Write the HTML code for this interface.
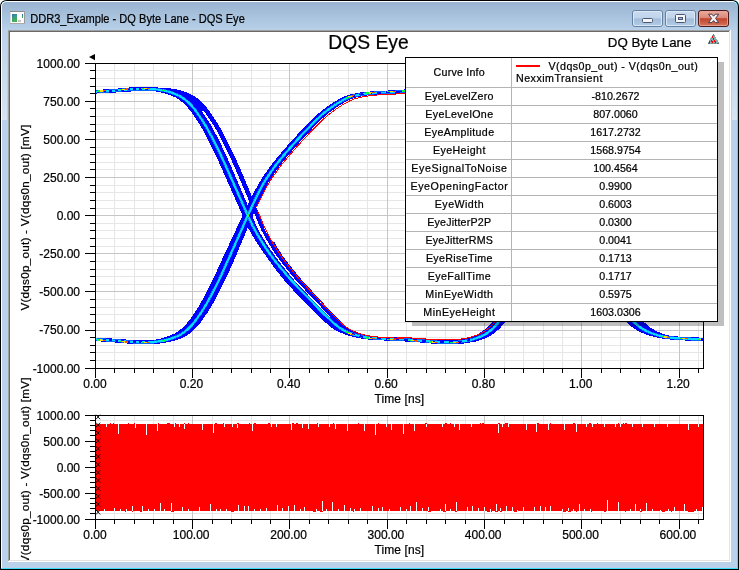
<!DOCTYPE html>
<html><head><meta charset="utf-8"><title>DDR3_Example - DQ Byte Lane - DQS Eye</title>
<style>
html,body{margin:0;padding:0;background:#fff;}
body{width:739px;height:570px;overflow:hidden;}
svg{display:block;will-change:transform;opacity:0.9999;}
text{font-family:'Liberation Sans', Arial, sans-serif;fill:#000;stroke:#000;stroke-width:0.22px;}
.t12{font-size:12px;}
.tb{font-size:10.67px;}
</style></head><body>
<svg width="739" height="570" viewBox="0 0 739 570">
<defs>
<linearGradient id="gTitle" x1="0" y1="0" x2="0" y2="1"><stop offset="0" stop-color="#99b4d1"/><stop offset="1" stop-color="#b9d1ea"/></linearGradient>
<linearGradient id="gSide" x1="0" y1="0" x2="0" y2="1"><stop offset="0" stop-color="#bbd2ea"/><stop offset="1" stop-color="#d6e4f3"/></linearGradient>
<linearGradient id="gBtnT" x1="0" y1="0" x2="0" y2="1"><stop offset="0" stop-color="#c8daee"/><stop offset="1" stop-color="#bfd4ea"/></linearGradient>
<linearGradient id="gBtnB" x1="0" y1="0" x2="0" y2="1"><stop offset="0" stop-color="#a1bbd9"/><stop offset="1" stop-color="#b1cae4"/></linearGradient>
<linearGradient id="gClsT" x1="0" y1="0" x2="0" y2="1"><stop offset="0" stop-color="#e9a99c"/><stop offset="1" stop-color="#d98474"/></linearGradient>
<linearGradient id="gClsB" x1="0" y1="0" x2="0" y2="1"><stop offset="0" stop-color="#c1432a"/><stop offset="1" stop-color="#d4715a"/></linearGradient>
<linearGradient id="gIcon" x1="0" y1="0" x2="0.4" y2="1"><stop offset="0" stop-color="#2f6db5"/><stop offset="0.45" stop-color="#3a9a8c"/><stop offset="1" stop-color="#45b34c"/></linearGradient>
<linearGradient id="gIcon2" x1="0" y1="0" x2="0" y2="1"><stop offset="0" stop-color="#2c5fb0"/><stop offset="1" stop-color="#4bb848"/></linearGradient>
<clipPath id="clipTop"><rect x="96" y="64" width="607" height="304"/></clipPath>
<clipPath id="clipContent"><rect x="10" y="32" width="719" height="528"/></clipPath>
<clipPath id="clipRed"><rect x="253" y="64" width="260" height="304"/></clipPath>
</defs>

<path d="M0,570 L0,7 Q0,0 7,0 L732,0 Q739,0 739,7 L739,570 Z" fill="#000"/>
<path d="M1,569 L1,7 Q1,1 7,1 L732,1 Q738,1 738,7 L738,569 Z" fill="#3fdcfa"/>
<path d="M1,568 L1,7 Q1,1 7,1 L732,1 Q737,1 737,7 L737,568 Z" fill="#ffffff"/>
<path d="M2,568 L2,7 Q2,2 7,2 L732,2 Q737,2 737,7 L737,568 Z" fill="#b9d1ea"/>
<path d="M2,31 L2,7 Q2,2 7,2 L732,2 Q737,2 737,7 L737,31 Z" fill="url(#gTitle)"/>
<rect x="2" y="30" width="5" height="90" fill="url(#gSide)"/>
<rect x="732" y="30" width="5" height="90" fill="url(#gSide)"/>
<g shape-rendering="crispEdges">
<rect x="8" y="30" width="723" height="532" fill="#ffffff"/>
<rect x="8" y="30" width="722" height="1" fill="#a0a0a0"/>
<rect x="8" y="30" width="1" height="531" fill="#a0a0a0"/>
<rect x="9" y="31" width="720" height="1" fill="#696969"/>
<rect x="9" y="31" width="1" height="529" fill="#696969"/>
<rect x="9" y="560" width="721" height="1" fill="#e3e3e3"/>
<rect x="729" y="31" width="1" height="530" fill="#e3e3e3"/>
</g>
<g shape-rendering="crispEdges">
<rect x="10" y="11" width="15" height="13" fill="#fdfdfd"/>
<rect x="10" y="11" width="15" height="1" fill="#8a8a8a"/>
<rect x="24" y="11" width="1" height="13" fill="#9a9a9a"/>
<rect x="10" y="23" width="15" height="1" fill="#a8a8a8"/>
<rect x="10" y="12" width="1" height="11" fill="#d8dde6"/>
<rect x="11.5" y="14" width="5.5" height="8" fill="url(#gIcon)"/>
<rect x="18" y="20" width="3" height="2" fill="#c4c4c4"/>
<rect x="22" y="14" width="1" height="4" fill="url(#gIcon2)"/>
</g>
<text x="30.2" y="23" font-size="12.5px" textLength="214.6" lengthAdjust="spacingAndGlyphs" fill="#000">DDR3_Example - DQ Byte Lane - DQS Eye</text>
<rect x="632.5" y="10.5" width="30" height="16" rx="2.5" ry="2.5" fill="#b4cce6" stroke="#6480a4" stroke-width="1"/>
<rect x="633.5" y="11.5" width="28" height="7" rx="1.5" fill="url(#gBtnT)"/>
<rect x="633.5" y="18.5" width="28" height="7" rx="1.5" fill="url(#gBtnB)"/>
<rect x="633.5" y="11.5" width="28" height="14" rx="1.5" fill="none" stroke="#e4eef8" stroke-opacity="0.8" stroke-width="1"/>
<rect x="665.5" y="10.5" width="30" height="16" rx="2.5" ry="2.5" fill="#b4cce6" stroke="#6480a4" stroke-width="1"/>
<rect x="666.5" y="11.5" width="28" height="7" rx="1.5" fill="url(#gBtnT)"/>
<rect x="666.5" y="18.5" width="28" height="7" rx="1.5" fill="url(#gBtnB)"/>
<rect x="666.5" y="11.5" width="28" height="14" rx="1.5" fill="none" stroke="#e4eef8" stroke-opacity="0.8" stroke-width="1"/>
<rect x="698.5" y="10.5" width="30" height="16" rx="2.5" ry="2.5" fill="#c4452c" stroke="#4a1d1d" stroke-width="1"/>
<rect x="699.5" y="11.5" width="28" height="7" rx="1.5" fill="url(#gClsT)"/>
<rect x="699.5" y="18.5" width="28" height="7" rx="1.5" fill="url(#gClsB)"/>
<rect x="699.5" y="11.5" width="28" height="14" rx="1.5" fill="none" stroke="#f0b8ae" stroke-opacity="0.7" stroke-width="1"/>
<rect x="642.5" y="18.5" width="10" height="4" rx="1" fill="#f4f6f9" stroke="#4a5670" stroke-width="1"/>
<rect x="675.5" y="14.5" width="10" height="8" rx="1" fill="#f4f6f9" stroke="#4a5670" stroke-width="1"/>
<rect x="678.5" y="17.5" width="4" height="2" fill="#9fbadb" stroke="#4a5670" stroke-width="1"/>
<path d="M708.5,14.2 L711.9,14.2 L713.6,16.2 L715.3,14.2 L718.7,14.2 L715.6,18.4 L718.7,22.6 L715.3,22.6 L713.6,20.6 L711.9,22.6 L708.5,22.6 L711.6,18.4 Z" fill="#f3f1f2" stroke="#4d3a48" stroke-width="1" stroke-linejoin="round"/>
<g clip-path="url(#clipContent)">
<text x="368.5" y="48.9" font-size="19.3px" text-anchor="middle">DQS Eye</text>
<text x="649.6" y="46.8" font-size="13.3px" text-anchor="middle">DQ Byte Lane</text>
<g shape-rendering="crispEdges">
<path d="M713,34 L714,34 L719,43 L719,44 L708,44 L708,43 Z" fill="#8aabad"/>
<rect x="713" y="34" width="1" height="2" fill="#777"/>
<rect x="708" y="43" width="2" height="1" fill="#666"/><rect x="717" y="43" width="2" height="1" fill="#666"/>
<rect x="711" y="43" width="2" height="1" fill="#7a8a8a"/><rect x="714" y="43" width="2" height="1" fill="#7a8a8a"/>
<rect x="712" y="36" width="1" height="2" fill="#ff0000"/>
<rect x="713" y="38" width="1" height="2" fill="#ff0000"/>
<rect x="711" y="40" width="1" height="2" fill="#ff0000"/>
<rect x="714" y="40" width="1" height="2" fill="#ff0000"/>
<rect x="709" y="41" width="1" height="2" fill="#ff0000"/>
<rect x="712" y="41" width="1" height="2" fill="#ff0000"/>
<rect x="715" y="41" width="1" height="2" fill="#ff0000"/>
</g>
<g shape-rendering="crispEdges" fill="none">
<path d="M114.5,64V368M134.5,64V368M153.5,64V368M173.5,64V368M212.5,64V368M231.5,64V368M251.5,64V368M270.5,64V368M309.5,64V368M328.5,64V368M348.5,64V368M367.5,64V368M406.5,64V368M426.5,64V368M445.5,64V368M465.5,64V368M504.5,64V368M523.5,64V368M543.5,64V368M562.5,64V368M601.5,64V368M620.5,64V368M640.5,64V368M659.5,64V368M698.5,64V368M96,70.5H703M96,78.5H703M96,86.5H703M96,93.5H703M96,108.5H703M96,116.5H703M96,124.5H703M96,131.5H703M96,147.5H703M96,154.5H703M96,162.5H703M96,169.5H703M96,185.5H703M96,192.5H703M96,200.5H703M96,208.5H703M96,223.5H703M96,230.5H703M96,238.5H703M96,246.5H703M96,261.5H703M96,269.5H703M96,276.5H703M96,284.5H703M96,299.5H703M96,307.5H703M96,314.5H703M96,322.5H703M96,337.5H703M96,345.5H703M96,352.5H703M96,360.5H703" stroke="#e6e6e6" stroke-width="1"/>
<path d="M192.5,64V368M289.5,64V368M387.5,64V368M484.5,64V368M581.5,64V368M679.5,64V368M96,101.5H703M96,139.5H703M96,177.5H703M96,215.5H703M96,253.5H703M96,291.5H703M96,330.5H703" stroke="#c6c6c6" stroke-width="1"/>
</g>
<g clip-path="url(#clipTop)" fill="none" stroke-linejoin="round" stroke-linecap="butt" shape-rendering="crispEdges">
<path d="M93.3,91.9 L94.3,91.8 L95.3,91.7 L96.2,91.7 L97.2,91.6 L98.2,91.5 L99.2,91.5 L100.1,91.4 L101.1,91.3 L102.1,91.3 L103.1,91.2 L104.0,91.1 L105.0,91.1 L106.0,91.0 L107.0,91.0 L107.9,90.9 L108.9,90.8 L109.9,90.8 L110.9,90.7 L111.8,90.6 L112.8,90.6 L113.8,90.5 L114.8,90.4 L115.7,90.4 L116.7,90.3 L117.7,90.2 L118.7,90.1 L119.6,90.0 L120.6,89.9 L121.6,89.8 L122.6,89.8 L123.5,89.7 L124.5,89.6 L125.5,89.5 L126.5,89.4 L127.4,89.3 L128.4,89.2 L129.4,89.2 L130.4,89.1 L131.3,89.1 L132.3,89.0 L133.3,89.0 L134.3,89.0 L135.2,89.0 L136.2,89.0 L137.2,89.0 L138.2,89.0 L139.1,89.0 L140.1,89.0 L141.1,89.0 L142.1,89.0 L143.0,89.0 L144.0,89.0 L145.0,89.0 L146.0,89.0 L146.9,89.0 L147.9,89.0 L148.9,89.0 L149.9,89.1 L150.8,89.1 L151.8,89.2 L152.8,89.3 L153.8,89.5 L154.7,89.6 L155.7,89.8 L156.7,89.9 L157.7,90.1 L158.6,90.3 L159.6,90.5 L160.6,90.6 L161.6,90.8 L162.5,91.0 L163.5,91.3 L164.5,91.5 L165.5,91.8 L166.5,92.1 L167.5,92.4 L168.5,92.8 L169.5,93.1 L170.5,93.5 L171.5,93.9 L172.5,94.3 L173.5,94.7 L174.5,95.2 L175.5,95.6 L176.5,96.1 L177.5,96.7 L178.5,97.3 L179.5,98.0 L180.5,98.7 L181.5,99.4 L182.5,100.2 L183.5,101.0 L184.5,101.9 L185.5,102.8 L186.5,103.8 L187.5,104.9 L188.5,105.9 L189.5,107.1 L190.5,108.3 L191.5,109.6 L192.5,110.9 L193.5,112.3 L194.5,113.8 L195.5,115.2 L196.5,116.7 L197.5,118.1 L198.5,119.6 L199.5,121.2 L200.5,122.8 L201.5,124.4 L202.5,126.0 L203.5,127.8 L204.5,129.5 L205.5,131.4 L206.5,133.2 L207.5,135.1 L208.5,137.0 L209.5,139.0 L210.5,140.9 L211.5,142.8 L212.5,144.8 L213.5,146.8 L214.5,148.8 L215.5,150.8 L216.5,152.9 L217.5,155.0 L218.5,157.2 L219.5,159.4 L220.5,161.7 L221.5,163.9 L222.5,166.1 L223.5,168.3 L224.5,170.5 L225.4,172.8 L226.4,175.0 L227.4,177.2 L228.4,179.5 L229.4,181.7 L230.4,184.0 L231.4,186.2 L232.4,188.5 L233.4,190.7 L234.4,193.0 L235.4,195.2 L236.4,197.5 L237.4,199.7 L238.4,202.0 L239.4,204.2 L240.4,206.5 L241.4,208.8 L242.4,211.1 L243.4,213.3 L244.4,215.6 L245.4,217.7 L246.3,219.9 L247.3,222.0 L248.2,224.1 L249.2,226.1 L250.1,228.0 L251.1,229.8 L252.1,231.6 L253.1,233.4 L254.2,235.2 L255.2,236.9 L256.2,238.6 L257.2,240.2 L258.2,241.8 L259.2,243.4 L260.3,245.0 L261.3,246.5 L262.3,248.1 L263.3,249.5 L264.3,251.0 L265.3,252.4 L266.4,253.8 L267.4,255.2 L268.4,256.6 L269.3,257.9 L270.2,259.2 L271.2,260.5 L272.1,261.8 L273.0,263.1 L273.9,264.4 L274.9,265.6 L275.8,266.8 L276.7,268.0 L277.6,269.2 L278.6,270.4 L279.5,271.6 L280.4,272.7 L281.3,273.9 L282.3,275.1 L283.2,276.3 L284.1,277.5 L285.0,278.6 L286.0,279.7 L286.9,280.8 L287.8,281.9 L288.8,282.9 L289.7,283.9 L290.7,285.0 L291.6,286.0 L292.6,287.1 L293.5,288.1 L294.5,289.1 L295.4,290.2 L296.4,291.2 L297.3,292.3 L298.3,293.3 L299.2,294.4 L300.2,295.4 L301.1,296.4 L302.1,297.5 L303.1,298.5 L304.1,299.5 L305.2,300.5 L306.2,301.5 L307.2,302.5 L308.2,303.5 L309.3,304.6 L310.3,305.6 L311.3,306.6 L312.3,307.7 L313.4,308.7 L314.4,309.7 L315.4,310.7 L316.4,311.7 L317.4,312.7 L318.5,313.7 L319.5,314.7 L320.5,315.6 L321.5,316.6 L322.6,317.6 L323.6,318.5 L324.6,319.4 L325.6,320.4 L326.7,321.3 L327.7,322.2 L328.7,323.1 L329.7,323.9 L330.8,324.8 L331.8,325.6 L332.8,326.4 L333.9,327.2 L335.0,327.9 L336.1,328.6 L337.2,329.1 L338.3,329.7 L339.4,330.2 L340.5,330.8 L341.6,331.3 L342.7,331.7 L343.8,332.2 L344.9,332.6 L346.0,333.0 L347.1,333.4 L348.2,333.7 L349.3,334.1 L350.4,334.4 L351.5,334.7 L352.6,335.0 L353.7,335.3 L354.8,335.6 L355.9,335.8 L357.0,336.0 L358.1,336.3 L359.2,336.5 L360.3,336.7 L361.3,336.9 L362.4,337.1 L363.4,337.2 L364.4,337.4 L365.4,337.5 L366.5,337.6 L367.5,337.7 L368.5,337.8 L369.5,337.9 L370.6,338.0 L371.6,338.0 L372.6,338.1 L373.7,338.2 L374.7,338.3 L375.7,338.3 L376.7,338.4 L377.8,338.5 L378.8,338.5 L379.8,338.6 L380.8,338.6 L381.9,338.7 L382.9,338.7 L383.9,338.8 L384.9,338.8 L386.0,338.9 L387.0,338.9 L388.0,339.0 L389.1,339.0 L390.1,339.0 L391.1,339.1 L392.1,339.1 L393.2,339.1 L394.2,339.2 L395.2,339.2 L396.2,339.2 L397.3,339.2 L398.3,339.2" stroke="#0000ff" stroke-width="3.4"/>
<path d="M93.8,91.9 L94.8,91.8 L95.8,91.7 L96.8,91.7 L97.7,91.6 L98.7,91.5 L99.7,91.5 L100.7,91.4 L101.7,91.3 L102.7,91.3 L103.6,91.2 L104.6,91.1 L105.6,91.1 L106.6,91.0 L107.6,91.0 L108.6,90.9 L109.6,90.8 L110.5,90.8 L111.5,90.7 L112.5,90.6 L113.5,90.6 L114.5,90.5 L115.5,90.4 L116.4,90.4 L117.4,90.3 L118.4,90.2 L119.4,90.1 L120.4,90.0 L121.4,89.9 L122.3,89.8 L123.3,89.8 L124.3,89.7 L125.3,89.6 L126.3,89.5 L127.3,89.4 L128.3,89.3 L129.2,89.2 L130.2,89.2 L131.2,89.1 L132.2,89.1 L133.2,89.0 L134.2,89.0 L135.1,89.0 L136.1,89.0 L137.1,89.0 L138.1,89.0 L139.1,89.0 L140.1,89.0 L141.1,89.0 L142.0,89.0 L143.0,89.0 L144.0,89.0 L145.0,89.0 L146.0,89.0 L147.0,89.0 L147.9,89.0 L148.9,89.0 L149.9,89.0 L150.9,89.1 L151.9,89.1 L152.9,89.2 L153.9,89.3 L154.8,89.5 L155.8,89.6 L156.8,89.8 L157.8,89.9 L158.8,90.1 L159.8,90.3 L160.7,90.5 L161.7,90.6 L162.7,90.8 L163.7,91.0 L164.7,91.3 L165.7,91.5 L166.7,91.8 L167.7,92.1 L168.7,92.4 L169.7,92.8 L170.7,93.1 L171.7,93.5 L172.7,93.9 L173.7,94.3 L174.7,94.7 L175.7,95.2 L176.7,95.6 L177.7,96.1 L178.7,96.7 L179.7,97.3 L180.7,98.0 L181.7,98.7 L182.7,99.4 L183.7,100.2 L184.7,101.0 L185.7,101.9 L186.7,102.8 L187.7,103.8 L188.7,104.9 L189.7,105.9 L190.7,107.1 L191.7,108.3 L192.7,109.6 L193.7,110.9 L194.7,112.3 L195.7,113.8 L196.7,115.2 L197.7,116.7 L198.7,118.1 L199.7,119.6 L200.7,121.2 L201.7,122.8 L202.7,124.4 L203.7,126.0 L204.7,127.8 L205.7,129.5 L206.7,131.4 L207.7,133.2 L208.6,135.1 L209.6,137.0 L210.6,139.0 L211.6,140.9 L212.6,142.8 L213.6,144.8 L214.6,146.8 L215.6,148.8 L216.6,150.8 L217.6,152.9 L218.6,155.0 L219.6,157.2 L220.6,159.4 L221.6,161.7 L222.6,163.9 L223.5,166.1 L224.5,168.3 L225.5,170.5 L226.5,172.8 L227.5,175.0 L228.5,177.2 L229.5,179.5 L230.5,181.7 L231.5,184.0 L232.5,186.2 L233.5,188.5 L234.5,190.7 L235.5,193.0 L236.5,195.2 L237.5,197.5 L238.4,199.7 L239.4,202.0 L240.4,204.2 L241.4,206.5 L242.4,208.8 L243.4,211.1 L244.4,213.3 L245.4,215.6 L246.3,217.7 L247.3,219.9 L248.2,222.0 L249.2,224.1 L250.1,226.1 L251.0,228.0 L252.0,229.8 L253.0,231.6 L254.0,233.4 L255.0,235.2 L256.0,236.9 L257.1,238.6 L258.1,240.2 L259.1,241.8 L260.1,243.4 L261.1,245.0 L262.1,246.5 L263.1,248.1 L264.2,249.5 L265.2,251.0 L266.2,252.4 L267.2,253.8 L268.2,255.2 L269.2,256.6 L270.2,257.9 L271.1,259.2 L272.0,260.5 L272.9,261.8 L273.9,263.1 L274.8,264.4 L275.7,265.6 L276.7,266.8 L277.6,268.0 L278.5,269.2 L279.4,270.4 L280.4,271.6 L281.3,272.7 L282.2,273.9 L283.2,275.1 L284.1,276.3 L285.0,277.5 L285.9,278.6 L286.9,279.7 L287.8,280.8 L288.7,281.9 L289.7,282.9 L290.6,283.9 L291.6,285.0 L292.6,286.0 L293.5,287.1 L294.5,288.1 L295.4,289.1 L296.4,290.2 L297.3,291.2 L298.3,292.3 L299.3,293.3 L300.2,294.4 L301.2,295.4 L302.1,296.4 L303.1,297.5 L304.1,298.5 L305.1,299.5 L306.1,300.5 L307.2,301.5 L308.2,302.5 L309.2,303.5 L310.2,304.6 L311.2,305.6 L312.3,306.6 L313.3,307.7 L314.3,308.7 L315.3,309.7 L316.4,310.7 L317.4,311.7 L318.4,312.7 L319.4,313.7 L320.4,314.7 L321.5,315.6 L322.5,316.6 L323.5,317.6 L324.5,318.5 L325.5,319.4 L326.6,320.4 L327.6,321.3 L328.6,322.2 L329.6,323.1 L330.6,323.9 L331.7,324.8 L332.7,325.6 L333.7,326.4 L334.8,327.2 L335.9,327.9 L337.0,328.6 L338.0,329.1 L339.1,329.7 L340.2,330.2 L341.3,330.8 L342.4,331.3 L343.5,331.7 L344.6,332.2 L345.7,332.6 L346.7,333.0 L347.8,333.4 L348.9,333.7 L350.0,334.1 L351.1,334.4 L352.2,334.7 L353.3,335.0 L354.4,335.3 L355.4,335.6 L356.5,335.8 L357.6,336.0 L358.7,336.3 L359.8,336.5 L360.9,336.7 L361.9,336.9 L362.9,337.1 L364.0,337.2 L365.0,337.4 L366.0,337.5 L367.0,337.6 L368.1,337.7 L369.1,337.8 L370.1,337.9 L371.1,338.0 L372.2,338.0 L373.2,338.1 L374.2,338.2 L375.2,338.3 L376.3,338.3 L377.3,338.4 L378.3,338.5 L379.3,338.5 L380.4,338.6 L381.4,338.6 L382.4,338.7 L383.4,338.7 L384.5,338.8 L385.5,338.8 L386.5,338.9 L387.5,338.9 L388.6,339.0 L389.6,339.0 L390.6,339.0 L391.6,339.1 L392.7,339.1 L393.7,339.1 L394.7,339.2 L395.7,339.2 L396.8,339.2 L397.8,339.2 L398.8,339.2" stroke="#0000ff" stroke-width="3.4"/>
<path d="M94.3,91.9 L95.3,91.8 L96.3,91.7 L97.3,91.7 L98.3,91.6 L99.3,91.5 L100.3,91.5 L101.3,91.4 L102.2,91.3 L103.2,91.3 L104.2,91.2 L105.2,91.1 L106.2,91.1 L107.2,91.0 L108.2,91.0 L109.2,90.9 L110.2,90.8 L111.2,90.8 L112.2,90.7 L113.2,90.6 L114.2,90.6 L115.2,90.5 L116.2,90.4 L117.2,90.4 L118.1,90.3 L119.1,90.2 L120.1,90.1 L121.1,90.0 L122.1,89.9 L123.1,89.8 L124.1,89.8 L125.1,89.7 L126.1,89.6 L127.1,89.5 L128.1,89.4 L129.1,89.3 L130.1,89.2 L131.1,89.2 L132.1,89.1 L133.1,89.1 L134.0,89.0 L135.0,89.0 L136.0,89.0 L137.0,89.0 L138.0,89.0 L139.0,89.0 L140.0,89.0 L141.0,89.0 L142.0,89.0 L143.0,89.0 L144.0,89.0 L145.0,89.0 L146.0,89.0 L147.0,89.0 L148.0,89.0 L148.9,89.0 L149.9,89.0 L150.9,89.0 L151.9,89.1 L152.9,89.1 L153.9,89.2 L154.9,89.3 L155.9,89.5 L156.9,89.6 L157.9,89.8 L158.9,89.9 L159.9,90.1 L160.9,90.3 L161.9,90.5 L162.9,90.6 L163.9,90.8 L164.8,91.0 L165.8,91.3 L166.8,91.5 L167.8,91.8 L168.8,92.1 L169.8,92.4 L170.8,92.8 L171.8,93.1 L172.8,93.5 L173.8,93.9 L174.8,94.3 L175.8,94.7 L176.8,95.2 L177.8,95.6 L178.8,96.1 L179.8,96.7 L180.8,97.3 L181.8,98.0 L182.8,98.7 L183.8,99.4 L184.8,100.2 L185.8,101.0 L186.8,101.9 L187.8,102.8 L188.8,103.8 L189.8,104.9 L190.8,105.9 L191.8,107.1 L192.8,108.3 L193.8,109.6 L194.8,110.9 L195.8,112.3 L196.8,113.8 L197.8,115.2 L198.8,116.7 L199.8,118.1 L200.8,119.6 L201.8,121.2 L202.8,122.8 L203.8,124.4 L204.8,126.0 L205.8,127.8 L206.8,129.5 L207.8,131.4 L208.8,133.2 L209.8,135.1 L210.8,137.0 L211.8,139.0 L212.8,140.9 L213.8,142.8 L214.7,144.8 L215.7,146.8 L216.7,148.8 L217.7,150.8 L218.7,152.9 L219.7,155.0 L220.7,157.2 L221.7,159.4 L222.7,161.7 L223.6,163.9 L224.6,166.1 L225.6,168.3 L226.6,170.5 L227.6,172.8 L228.6,175.0 L229.6,177.2 L230.6,179.5 L231.6,181.7 L232.6,184.0 L233.5,186.2 L234.5,188.5 L235.5,190.7 L236.5,193.0 L237.5,195.2 L238.5,197.5 L239.5,199.7 L240.5,202.0 L241.5,204.2 L242.4,206.5 L243.4,208.8 L244.4,211.1 L245.4,213.3 L246.4,215.6 L247.3,217.7 L248.2,219.9 L249.2,222.0 L250.1,224.1 L251.0,226.1 L251.9,228.0 L252.9,229.8 L253.9,231.6 L254.9,233.4 L255.9,235.2 L256.9,236.9 L257.9,238.6 L258.9,240.2 L259.9,241.8 L261.0,243.4 L262.0,245.0 L263.0,246.5 L264.0,248.1 L265.0,249.5 L266.0,251.0 L267.0,252.4 L268.0,253.8 L269.1,255.2 L270.1,256.6 L271.0,257.9 L271.9,259.2 L272.9,260.5 L273.8,261.8 L274.7,263.1 L275.7,264.4 L276.6,265.6 L277.5,266.8 L278.5,268.0 L279.4,269.2 L280.3,270.4 L281.3,271.6 L282.2,272.7 L283.1,273.9 L284.1,275.1 L285.0,276.3 L285.9,277.5 L286.9,278.6 L287.8,279.7 L288.7,280.8 L289.7,281.9 L290.6,282.9 L291.6,283.9 L292.5,285.0 L293.5,286.0 L294.5,287.1 L295.4,288.1 L296.4,289.1 L297.3,290.2 L298.3,291.2 L299.3,292.3 L300.2,293.3 L301.2,294.4 L302.1,295.4 L303.1,296.4 L304.1,297.5 L305.1,298.5 L306.1,299.5 L307.1,300.5 L308.1,301.5 L309.2,302.5 L310.2,303.5 L311.2,304.6 L312.2,305.6 L313.2,306.6 L314.2,307.7 L315.3,308.7 L316.3,309.7 L317.3,310.7 L318.3,311.7 L319.3,312.7 L320.4,313.7 L321.4,314.7 L322.4,315.6 L323.4,316.6 L324.4,317.6 L325.4,318.5 L326.5,319.4 L327.5,320.4 L328.5,321.3 L329.5,322.2 L330.5,323.1 L331.5,323.9 L332.6,324.8 L333.6,325.6 L334.6,326.4 L335.7,327.2 L336.7,327.9 L337.8,328.6 L338.9,329.1 L340.0,329.7 L341.0,330.2 L342.1,330.8 L343.2,331.3 L344.3,331.7 L345.3,332.2 L346.4,332.6 L347.5,333.0 L348.6,333.4 L349.6,333.7 L350.7,334.1 L351.8,334.4 L352.9,334.7 L353.9,335.0 L355.0,335.3 L356.1,335.6 L357.2,335.8 L358.2,336.0 L359.3,336.3 L360.4,336.5 L361.5,336.7 L362.5,336.9 L363.5,337.1 L364.5,337.2 L365.6,337.4 L366.6,337.5 L367.6,337.6 L368.6,337.7 L369.6,337.8 L370.7,337.9 L371.7,338.0 L372.7,338.0 L373.7,338.1 L374.8,338.2 L375.8,338.3 L376.8,338.3 L377.8,338.4 L378.8,338.5 L379.9,338.5 L380.9,338.6 L381.9,338.6 L382.9,338.7 L384.0,338.7 L385.0,338.8 L386.0,338.8 L387.0,338.9 L388.1,338.9 L389.1,339.0 L390.1,339.0 L391.1,339.0 L392.1,339.1 L393.2,339.1 L394.2,339.1 L395.2,339.2 L396.2,339.2 L397.3,339.2 L398.3,339.2 L399.3,339.2" stroke="#0000ff" stroke-width="3.4"/>
<path d="M94.8,91.9 L95.8,91.8 L96.8,91.7 L97.8,91.7 L98.8,91.6 L99.8,91.5 L100.8,91.5 L101.8,91.4 L102.8,91.3 L103.8,91.3 L104.8,91.2 L105.8,91.1 L106.8,91.1 L107.8,91.0 L108.8,91.0 L109.8,90.9 L110.8,90.8 L111.8,90.8 L112.8,90.7 L113.9,90.6 L114.9,90.6 L115.9,90.5 L116.9,90.4 L117.9,90.4 L118.9,90.3 L119.9,90.2 L120.9,90.1 L121.9,90.0 L122.9,89.9 L123.9,89.8 L124.9,89.8 L125.9,89.7 L126.9,89.6 L127.9,89.5 L128.9,89.4 L129.9,89.3 L130.9,89.2 L131.9,89.2 L132.9,89.1 L133.9,89.1 L134.9,89.0 L135.9,89.0 L136.9,89.0 L137.9,89.0 L138.9,89.0 L139.9,89.0 L140.9,89.0 L141.9,89.0 L142.9,89.0 L143.9,89.0 L144.9,89.0 L145.9,89.0 L146.9,89.0 L147.9,89.0 L148.9,89.0 L150.0,89.0 L151.0,89.0 L152.0,89.0 L153.0,89.1 L154.0,89.1 L155.0,89.2 L156.0,89.3 L157.0,89.5 L158.0,89.6 L159.0,89.8 L160.0,89.9 L161.0,90.1 L162.0,90.3 L163.0,90.5 L164.0,90.6 L165.0,90.8 L166.0,91.0 L167.0,91.3 L168.0,91.5 L169.0,91.8 L170.0,92.1 L171.0,92.4 L172.0,92.8 L173.0,93.1 L174.0,93.5 L175.0,93.9 L176.0,94.3 L177.0,94.7 L178.0,95.2 L179.0,95.6 L180.0,96.1 L181.0,96.7 L182.0,97.3 L183.0,98.0 L184.0,98.7 L185.0,99.4 L186.0,100.2 L187.0,101.0 L188.0,101.9 L189.0,102.8 L190.0,103.8 L191.0,104.9 L192.0,105.9 L193.0,107.1 L194.0,108.3 L195.0,109.6 L196.0,110.9 L197.0,112.3 L198.0,113.8 L199.0,115.2 L200.0,116.7 L201.0,118.1 L202.0,119.6 L203.0,121.2 L204.0,122.8 L205.0,124.4 L206.0,126.0 L207.0,127.8 L208.0,129.5 L209.0,131.4 L210.0,133.2 L211.0,135.1 L211.9,137.0 L212.9,139.0 L213.9,140.9 L214.9,142.8 L215.9,144.8 L216.9,146.8 L217.9,148.8 L218.8,150.8 L219.8,152.9 L220.8,155.0 L221.8,157.2 L222.8,159.4 L223.8,161.7 L224.7,163.9 L225.7,166.1 L226.7,168.3 L227.7,170.5 L228.7,172.8 L229.7,175.0 L230.7,177.2 L231.6,179.5 L232.6,181.7 L233.6,184.0 L234.6,186.2 L235.6,188.5 L236.6,190.7 L237.6,193.0 L238.5,195.2 L239.5,197.5 L240.5,199.7 L241.5,202.0 L242.5,204.2 L243.5,206.5 L244.4,208.8 L245.4,211.1 L246.4,213.3 L247.4,215.6 L248.3,217.7 L249.2,219.9 L250.1,222.0 L251.0,224.1 L251.9,226.1 L252.8,228.0 L253.8,229.8 L254.8,231.6 L255.8,233.4 L256.8,235.2 L257.8,236.9 L258.8,238.6 L259.8,240.2 L260.8,241.8 L261.8,243.4 L262.8,245.0 L263.8,246.5 L264.8,248.1 L265.9,249.5 L266.9,251.0 L267.9,252.4 L268.9,253.8 L269.9,255.2 L270.9,256.6 L271.8,257.9 L272.8,259.2 L273.7,260.5 L274.7,261.8 L275.6,263.1 L276.5,264.4 L277.5,265.6 L278.4,266.8 L279.3,268.0 L280.3,269.2 L281.2,270.4 L282.2,271.6 L283.1,272.7 L284.0,273.9 L285.0,275.1 L285.9,276.3 L286.8,277.5 L287.8,278.6 L288.7,279.7 L289.7,280.8 L290.6,281.9 L291.6,282.9 L292.5,283.9 L293.5,285.0 L294.5,286.0 L295.4,287.1 L296.4,288.1 L297.3,289.1 L298.3,290.2 L299.3,291.2 L300.2,292.3 L301.2,293.3 L302.2,294.4 L303.1,295.4 L304.1,296.4 L305.1,297.5 L306.1,298.5 L307.1,299.5 L308.1,300.5 L309.1,301.5 L310.1,302.5 L311.1,303.5 L312.2,304.6 L313.2,305.6 L314.2,306.6 L315.2,307.7 L316.2,308.7 L317.2,309.7 L318.2,310.7 L319.3,311.7 L320.3,312.7 L321.3,313.7 L322.3,314.7 L323.3,315.6 L324.3,316.6 L325.4,317.6 L326.4,318.5 L327.4,319.4 L328.4,320.4 L329.4,321.3 L330.4,322.2 L331.4,323.1 L332.5,323.9 L333.5,324.8 L334.5,325.6 L335.5,326.4 L336.6,327.2 L337.6,327.9 L338.7,328.6 L339.7,329.1 L340.8,329.7 L341.9,330.2 L342.9,330.8 L344.0,331.3 L345.1,331.7 L346.1,332.2 L347.2,332.6 L348.2,333.0 L349.3,333.4 L350.4,333.7 L351.4,334.1 L352.5,334.4 L353.6,334.7 L354.6,335.0 L355.7,335.3 L356.7,335.6 L357.8,335.8 L358.9,336.0 L359.9,336.3 L361.0,336.5 L362.1,336.7 L363.1,336.9 L364.1,337.1 L365.1,337.2 L366.1,337.4 L367.2,337.5 L368.2,337.6 L369.2,337.7 L370.2,337.8 L371.2,337.9 L372.3,338.0 L373.3,338.0 L374.3,338.1 L375.3,338.2 L376.3,338.3 L377.4,338.3 L378.4,338.4 L379.4,338.5 L380.4,338.5 L381.4,338.6 L382.5,338.6 L383.5,338.7 L384.5,338.7 L385.5,338.8 L386.5,338.8 L387.6,338.9 L388.6,338.9 L389.6,339.0 L390.6,339.0 L391.6,339.0 L392.7,339.1 L393.7,339.1 L394.7,339.1 L395.7,339.2 L396.7,339.2 L397.8,339.2 L398.8,339.2 L399.8,339.2" stroke="#0000ff" stroke-width="3.4"/>
<path d="M95.3,91.9 L96.3,91.8 L97.3,91.7 L98.3,91.7 L99.3,91.6 L100.4,91.5 L101.4,91.5 L102.4,91.4 L103.4,91.3 L104.4,91.3 L105.4,91.2 L106.4,91.1 L107.4,91.1 L108.5,91.0 L109.5,91.0 L110.5,90.9 L111.5,90.8 L112.5,90.8 L113.5,90.7 L114.5,90.6 L115.5,90.6 L116.5,90.5 L117.6,90.4 L118.6,90.4 L119.6,90.3 L120.6,90.2 L121.6,90.1 L122.6,90.0 L123.6,89.9 L124.6,89.8 L125.7,89.8 L126.7,89.7 L127.7,89.6 L128.7,89.5 L129.7,89.4 L130.7,89.3 L131.7,89.2 L132.7,89.2 L133.8,89.1 L134.8,89.1 L135.8,89.0 L136.8,89.0 L137.8,89.0 L138.8,89.0 L139.8,89.0 L140.8,89.0 L141.8,89.0 L142.9,89.0 L143.9,89.0 L144.9,89.0 L145.9,89.0 L146.9,89.0 L147.9,89.0 L148.9,89.0 L149.9,89.0 L151.0,89.0 L152.0,89.0 L153.0,89.0 L154.0,89.1 L155.0,89.1 L156.0,89.2 L157.0,89.3 L158.0,89.5 L159.0,89.6 L160.1,89.8 L161.1,89.9 L162.1,90.1 L163.1,90.3 L164.1,90.5 L165.1,90.6 L166.1,90.8 L167.1,91.0 L168.2,91.3 L169.2,91.5 L170.2,91.8 L171.2,92.1 L172.2,92.4 L173.2,92.8 L174.2,93.1 L175.2,93.5 L176.2,93.9 L177.2,94.3 L178.2,94.7 L179.2,95.2 L180.2,95.6 L181.2,96.1 L182.2,96.7 L183.2,97.3 L184.2,98.0 L185.2,98.7 L186.2,99.4 L187.2,100.2 L188.2,101.0 L189.2,101.9 L190.2,102.8 L191.2,103.8 L192.2,104.9 L193.2,105.9 L194.2,107.1 L195.2,108.3 L196.2,109.6 L197.2,110.9 L198.2,112.3 L199.2,113.8 L200.2,115.2 L201.2,116.7 L202.2,118.1 L203.2,119.6 L204.2,121.2 L205.2,122.8 L206.2,124.4 L207.2,126.0 L208.2,127.8 L209.2,129.5 L210.1,131.4 L211.1,133.2 L212.1,135.1 L213.1,137.0 L214.1,139.0 L215.1,140.9 L216.0,142.8 L217.0,144.8 L218.0,146.8 L219.0,148.8 L220.0,150.8 L220.9,152.9 L221.9,155.0 L222.9,157.2 L223.9,159.4 L224.9,161.7 L225.8,163.9 L226.8,166.1 L227.8,168.3 L228.8,170.5 L229.8,172.8 L230.7,175.0 L231.7,177.2 L232.7,179.5 L233.7,181.7 L234.7,184.0 L235.6,186.2 L236.6,188.5 L237.6,190.7 L238.6,193.0 L239.6,195.2 L240.6,197.5 L241.5,199.7 L242.5,202.0 L243.5,204.2 L244.5,206.5 L245.5,208.8 L246.4,211.1 L247.4,213.3 L248.4,215.6 L249.3,217.7 L250.2,219.9 L251.1,222.0 L252.0,224.1 L252.9,226.1 L253.7,228.0 L254.6,229.8 L255.6,231.6 L256.6,233.4 L257.7,235.2 L258.7,236.9 L259.7,238.6 L260.7,240.2 L261.7,241.8 L262.7,243.4 L263.7,245.0 L264.7,246.5 L265.7,248.1 L266.7,249.5 L267.7,251.0 L268.7,252.4 L269.7,253.8 L270.7,255.2 L271.7,256.6 L272.7,257.9 L273.6,259.2 L274.6,260.5 L275.5,261.8 L276.4,263.1 L277.4,264.4 L278.3,265.6 L279.3,266.8 L280.2,268.0 L281.2,269.2 L282.1,270.4 L283.0,271.6 L284.0,272.7 L284.9,273.9 L285.9,275.1 L286.8,276.3 L287.8,277.5 L288.7,278.6 L289.6,279.7 L290.6,280.8 L291.5,281.9 L292.5,282.9 L293.5,283.9 L294.4,285.0 L295.4,286.0 L296.4,287.1 L297.3,288.1 L298.3,289.1 L299.3,290.2 L300.2,291.2 L301.2,292.3 L302.2,293.3 L303.1,294.4 L304.1,295.4 L305.1,296.4 L306.0,297.5 L307.0,298.5 L308.1,299.5 L309.1,300.5 L310.1,301.5 L311.1,302.5 L312.1,303.5 L313.1,304.6 L314.1,305.6 L315.1,306.6 L316.2,307.7 L317.2,308.7 L318.2,309.7 L319.2,310.7 L320.2,311.7 L321.2,312.7 L322.2,313.7 L323.2,314.7 L324.3,315.6 L325.3,316.6 L326.3,317.6 L327.3,318.5 L328.3,319.4 L329.3,320.4 L330.3,321.3 L331.3,322.2 L332.4,323.1 L333.4,323.9 L334.4,324.8 L335.4,325.6 L336.4,326.4 L337.4,327.2 L338.5,327.9 L339.5,328.6 L340.6,329.1 L341.6,329.7 L342.7,330.2 L343.7,330.8 L344.8,331.3 L345.8,331.7 L346.9,332.2 L347.9,332.6 L349.0,333.0 L350.0,333.4 L351.1,333.7 L352.1,334.1 L353.2,334.4 L354.2,334.7 L355.3,335.0 L356.3,335.3 L357.4,335.6 L358.4,335.8 L359.5,336.0 L360.5,336.3 L361.6,336.5 L362.6,336.7 L363.7,336.9 L364.7,337.1 L365.7,337.2 L366.7,337.4 L367.7,337.5 L368.7,337.6 L369.8,337.7 L370.8,337.8 L371.8,337.9 L372.8,338.0 L373.8,338.0 L374.8,338.1 L375.9,338.2 L376.9,338.3 L377.9,338.3 L378.9,338.4 L379.9,338.5 L381.0,338.5 L382.0,338.6 L383.0,338.6 L384.0,338.7 L385.0,338.7 L386.0,338.8 L387.1,338.8 L388.1,338.9 L389.1,338.9 L390.1,339.0 L391.1,339.0 L392.2,339.0 L393.2,339.1 L394.2,339.1 L395.2,339.1 L396.2,339.2 L397.2,339.2 L398.3,339.2 L399.3,339.2 L400.3,339.2" stroke="#0000ff" stroke-width="3.4"/>
<path d="M95.8,91.9 L96.8,91.8 L97.8,91.7 L98.9,91.7 L99.9,91.6 L100.9,91.5 L101.9,91.5 L102.9,91.4 L104.0,91.3 L105.0,91.3 L106.0,91.2 L107.0,91.1 L108.1,91.1 L109.1,91.0 L110.1,91.0 L111.1,90.9 L112.1,90.8 L113.2,90.8 L114.2,90.7 L115.2,90.6 L116.2,90.6 L117.2,90.5 L118.3,90.4 L119.3,90.4 L120.3,90.3 L121.3,90.2 L122.3,90.1 L123.4,90.0 L124.4,89.9 L125.4,89.8 L126.4,89.8 L127.5,89.7 L128.5,89.6 L129.5,89.5 L130.5,89.4 L131.5,89.3 L132.6,89.2 L133.6,89.2 L134.6,89.1 L135.6,89.1 L136.6,89.0 L137.7,89.0 L138.7,89.0 L139.7,89.0 L140.7,89.0 L141.7,89.0 L142.8,89.0 L143.8,89.0 L144.8,89.0 L145.8,89.0 L146.9,89.0 L147.9,89.0 L148.9,89.0 L149.9,89.0 L150.9,89.0 L152.0,89.0 L153.0,89.0 L154.0,89.0 L155.0,89.1 L156.0,89.1 L157.1,89.2 L158.1,89.3 L159.1,89.5 L160.1,89.6 L161.1,89.8 L162.2,89.9 L163.2,90.1 L164.2,90.3 L165.2,90.5 L166.2,90.6 L167.3,90.8 L168.3,91.0 L169.3,91.3 L170.3,91.5 L171.3,91.8 L172.3,92.1 L173.3,92.4 L174.3,92.8 L175.3,93.1 L176.3,93.5 L177.3,93.9 L178.3,94.3 L179.3,94.7 L180.3,95.2 L181.3,95.6 L182.3,96.1 L183.3,96.7 L184.3,97.3 L185.3,98.0 L186.3,98.7 L187.3,99.4 L188.3,100.2 L189.3,101.0 L190.3,101.9 L191.3,102.8 L192.3,103.8 L193.3,104.9 L194.3,105.9 L195.3,107.1 L196.3,108.3 L197.3,109.6 L198.3,110.9 L199.3,112.3 L200.3,113.8 L201.3,115.2 L202.3,116.7 L203.3,118.1 L204.3,119.6 L205.3,121.2 L206.3,122.8 L207.3,124.4 L208.3,126.0 L209.3,127.8 L210.3,129.5 L211.3,131.4 L212.3,133.2 L213.3,135.1 L214.2,137.0 L215.2,139.0 L216.2,140.9 L217.2,142.8 L218.1,144.8 L219.1,146.8 L220.1,148.8 L221.1,150.8 L222.1,152.9 L223.0,155.0 L224.0,157.2 L225.0,159.4 L226.0,161.7 L226.9,163.9 L227.9,166.1 L228.9,168.3 L229.9,170.5 L230.8,172.8 L231.8,175.0 L232.8,177.2 L233.8,179.5 L234.8,181.7 L235.7,184.0 L236.7,186.2 L237.7,188.5 L238.7,190.7 L239.6,193.0 L240.6,195.2 L241.6,197.5 L242.6,199.7 L243.5,202.0 L244.5,204.2 L245.5,206.5 L246.5,208.8 L247.4,211.1 L248.4,213.3 L249.4,215.6 L250.3,217.7 L251.1,219.9 L252.0,222.0 L252.9,224.1 L253.8,226.1 L254.6,228.0 L255.5,229.8 L256.5,231.6 L257.5,233.4 L258.5,235.2 L259.5,236.9 L260.5,238.6 L261.5,240.2 L262.5,241.8 L263.5,243.4 L264.5,245.0 L265.5,246.5 L266.5,248.1 L267.6,249.5 L268.6,251.0 L269.6,252.4 L270.6,253.8 L271.6,255.2 L272.6,256.6 L273.5,257.9 L274.5,259.2 L275.4,260.5 L276.4,261.8 L277.3,263.1 L278.3,264.4 L279.2,265.6 L280.1,266.8 L281.1,268.0 L282.0,269.2 L283.0,270.4 L283.9,271.6 L284.9,272.7 L285.8,273.9 L286.8,275.1 L287.7,276.3 L288.7,277.5 L289.6,278.6 L290.6,279.7 L291.5,280.8 L292.5,281.9 L293.4,282.9 L294.4,283.9 L295.4,285.0 L296.3,286.0 L297.3,287.1 L298.3,288.1 L299.3,289.1 L300.2,290.2 L301.2,291.2 L302.2,292.3 L303.1,293.3 L304.1,294.4 L305.1,295.4 L306.0,296.4 L307.0,297.5 L308.0,298.5 L309.0,299.5 L310.0,300.5 L311.1,301.5 L312.1,302.5 L313.1,303.5 L314.1,304.6 L315.1,305.6 L316.1,306.6 L317.1,307.7 L318.1,308.7 L319.1,309.7 L320.1,310.7 L321.1,311.7 L322.2,312.7 L323.2,313.7 L324.2,314.7 L325.2,315.6 L326.2,316.6 L327.2,317.6 L328.2,318.5 L329.2,319.4 L330.2,320.4 L331.2,321.3 L332.3,322.2 L333.3,323.1 L334.3,323.9 L335.3,324.8 L336.3,325.6 L337.3,326.4 L338.3,327.2 L339.4,327.9 L340.4,328.6 L341.4,329.1 L342.5,329.7 L343.5,330.2 L344.6,330.8 L345.6,331.3 L346.6,331.7 L347.7,332.2 L348.7,332.6 L349.7,333.0 L350.8,333.4 L351.8,333.7 L352.9,334.1 L353.9,334.4 L354.9,334.7 L356.0,335.0 L357.0,335.3 L358.0,335.6 L359.1,335.8 L360.1,336.0 L361.1,336.3 L362.2,336.5 L363.2,336.7 L364.2,336.9 L365.2,337.1 L366.3,337.2 L367.3,337.4 L368.3,337.5 L369.3,337.6 L370.3,337.7 L371.3,337.8 L372.4,337.9 L373.4,338.0 L374.4,338.0 L375.4,338.1 L376.4,338.2 L377.4,338.3 L378.5,338.3 L379.5,338.4 L380.5,338.5 L381.5,338.5 L382.5,338.6 L383.5,338.6 L384.5,338.7 L385.6,338.7 L386.6,338.8 L387.6,338.8 L388.6,338.9 L389.6,338.9 L390.6,339.0 L391.7,339.0 L392.7,339.0 L393.7,339.1 L394.7,339.1 L395.7,339.1 L396.7,339.2 L397.8,339.2 L398.8,339.2 L399.8,339.2 L400.8,339.2" stroke="#0000ff" stroke-width="3.4"/>
<path d="M96.3,91.9 L97.3,91.8 L98.4,91.7 L99.4,91.7 L100.4,91.6 L101.5,91.5 L102.5,91.5 L103.5,91.4 L104.5,91.3 L105.6,91.3 L106.6,91.2 L107.6,91.1 L108.7,91.1 L109.7,91.0 L110.7,91.0 L111.8,90.9 L112.8,90.8 L113.8,90.8 L114.8,90.7 L115.9,90.6 L116.9,90.6 L117.9,90.5 L119.0,90.4 L120.0,90.4 L121.0,90.3 L122.1,90.2 L123.1,90.1 L124.1,90.0 L125.1,89.9 L126.2,89.8 L127.2,89.8 L128.2,89.7 L129.3,89.6 L130.3,89.5 L131.3,89.4 L132.4,89.3 L133.4,89.2 L134.4,89.2 L135.4,89.1 L136.5,89.1 L137.5,89.0 L138.5,89.0 L139.6,89.0 L140.6,89.0 L141.6,89.0 L142.7,89.0 L143.7,89.0 L144.7,89.0 L145.7,89.0 L146.8,89.0 L147.8,89.0 L148.8,89.0 L149.9,89.0 L150.9,89.0 L151.9,89.0 L153.0,89.0 L154.0,89.0 L155.0,89.0 L156.0,89.1 L157.1,89.1 L158.1,89.2 L159.1,89.3 L160.2,89.5 L161.2,89.6 L162.2,89.8 L163.3,89.9 L164.3,90.1 L165.3,90.3 L166.3,90.5 L167.4,90.6 L168.4,90.8 L169.4,91.0 L170.5,91.3 L171.5,91.5 L172.5,91.8 L173.5,92.1 L174.5,92.4 L175.5,92.8 L176.5,93.1 L177.5,93.5 L178.5,93.9 L179.5,94.3 L180.5,94.7 L181.5,95.2 L182.5,95.6 L183.5,96.1 L184.5,96.7 L185.5,97.3 L186.5,98.0 L187.5,98.7 L188.5,99.4 L189.5,100.2 L190.5,101.0 L191.5,101.9 L192.5,102.8 L193.5,103.8 L194.5,104.9 L195.5,105.9 L196.5,107.1 L197.5,108.3 L198.5,109.6 L199.5,110.9 L200.5,112.3 L201.5,113.8 L202.5,115.2 L203.5,116.7 L204.5,118.1 L205.5,119.6 L206.5,121.2 L207.5,122.8 L208.5,124.4 L209.5,126.0 L210.5,127.8 L211.5,129.5 L212.5,131.4 L213.4,133.2 L214.4,135.1 L215.4,137.0 L216.4,139.0 L217.3,140.9 L218.3,142.8 L219.3,144.8 L220.3,146.8 L221.2,148.8 L222.2,150.8 L223.2,152.9 L224.1,155.0 L225.1,157.2 L226.1,159.4 L227.1,161.7 L228.0,163.9 L229.0,166.1 L230.0,168.3 L231.0,170.5 L231.9,172.8 L232.9,175.0 L233.9,177.2 L234.8,179.5 L235.8,181.7 L236.8,184.0 L237.8,186.2 L238.7,188.5 L239.7,190.7 L240.7,193.0 L241.6,195.2 L242.6,197.5 L243.6,199.7 L244.6,202.0 L245.5,204.2 L246.5,206.5 L247.5,208.8 L248.5,211.1 L249.4,213.3 L250.4,215.6 L251.3,217.7 L252.1,219.9 L253.0,222.0 L253.8,224.1 L254.7,226.1 L255.5,228.0 L256.4,229.8 L257.4,231.6 L258.4,233.4 L259.4,235.2 L260.4,236.9 L261.4,238.6 L262.4,240.2 L263.4,241.8 L264.4,243.4 L265.4,245.0 L266.4,246.5 L267.4,248.1 L268.4,249.5 L269.4,251.0 L270.4,252.4 L271.4,253.8 L272.4,255.2 L273.4,256.6 L274.4,257.9 L275.3,259.2 L276.3,260.5 L277.2,261.8 L278.2,263.1 L279.1,264.4 L280.1,265.6 L281.0,266.8 L282.0,268.0 L282.9,269.2 L283.9,270.4 L284.8,271.6 L285.8,272.7 L286.7,273.9 L287.7,275.1 L288.6,276.3 L289.6,277.5 L290.5,278.6 L291.5,279.7 L292.4,280.8 L293.4,281.9 L294.4,282.9 L295.3,283.9 L296.3,285.0 L297.3,286.0 L298.3,287.1 L299.2,288.1 L300.2,289.1 L301.2,290.2 L302.2,291.2 L303.1,292.3 L304.1,293.3 L305.1,294.4 L306.1,295.4 L307.0,296.4 L308.0,297.5 L309.0,298.5 L310.0,299.5 L311.0,300.5 L312.0,301.5 L313.0,302.5 L314.0,303.5 L315.0,304.6 L316.1,305.6 L317.1,306.6 L318.1,307.7 L319.1,308.7 L320.1,309.7 L321.1,310.7 L322.1,311.7 L323.1,312.7 L324.1,313.7 L325.1,314.7 L326.1,315.6 L327.1,316.6 L328.1,317.6 L329.1,318.5 L330.1,319.4 L331.2,320.4 L332.2,321.3 L333.2,322.2 L334.2,323.1 L335.2,323.9 L336.2,324.8 L337.2,325.6 L338.2,326.4 L339.2,327.2 L340.2,327.9 L341.3,328.6 L342.3,329.1 L343.3,329.7 L344.3,330.2 L345.4,330.8 L346.4,331.3 L347.4,331.7 L348.4,332.2 L349.5,332.6 L350.5,333.0 L351.5,333.4 L352.5,333.7 L353.6,334.1 L354.6,334.4 L355.6,334.7 L356.6,335.0 L357.7,335.3 L358.7,335.6 L359.7,335.8 L360.7,336.0 L361.8,336.3 L362.8,336.5 L363.8,336.7 L364.8,336.9 L365.8,337.1 L366.8,337.2 L367.9,337.4 L368.9,337.5 L369.9,337.6 L370.9,337.7 L371.9,337.8 L372.9,337.9 L373.9,338.0 L374.9,338.0 L376.0,338.1 L377.0,338.2 L378.0,338.3 L379.0,338.3 L380.0,338.4 L381.0,338.5 L382.0,338.5 L383.1,338.6 L384.1,338.6 L385.1,338.7 L386.1,338.7 L387.1,338.8 L388.1,338.8 L389.1,338.9 L390.2,338.9 L391.2,339.0 L392.2,339.0 L393.2,339.0 L394.2,339.1 L395.2,339.1 L396.2,339.1 L397.2,339.2 L398.3,339.2 L399.3,339.2 L400.3,339.2 L401.3,339.2" stroke="#0000ff" stroke-width="3.4"/>
<path d="M93.3,339.2 L94.3,339.3 L95.2,339.4 L96.2,339.4 L97.1,339.5 L98.1,339.6 L99.1,339.6 L100.0,339.7 L101.0,339.8 L101.9,339.8 L102.9,339.9 L103.9,340.0 L104.8,340.0 L105.8,340.1 L106.7,340.1 L107.7,340.2 L108.7,340.3 L109.6,340.3 L110.6,340.4 L111.5,340.5 L112.5,340.5 L113.5,340.6 L114.4,340.7 L115.4,340.8 L116.3,340.8 L117.3,340.9 L118.3,341.0 L119.2,341.1 L120.2,341.2 L121.1,341.3 L122.1,341.3 L123.1,341.4 L124.0,341.5 L125.0,341.6 L125.9,341.7 L126.9,341.8 L127.9,341.9 L128.8,341.9 L129.8,342.0 L130.8,342.0 L131.7,342.1 L132.7,342.1 L133.6,342.1 L134.6,342.1 L135.6,342.1 L136.5,342.1 L137.5,342.1 L138.4,342.1 L139.4,342.1 L140.4,342.1 L141.3,342.1 L142.3,342.1 L143.2,342.1 L144.2,342.1 L145.2,342.1 L146.1,342.1 L147.1,342.1 L148.0,342.1 L149.0,342.0 L150.0,342.0 L150.9,341.9 L151.9,341.8 L152.8,341.6 L153.8,341.5 L154.8,341.3 L155.7,341.2 L156.7,341.0 L157.6,340.8 L158.6,340.6 L159.6,340.5 L160.5,340.3 L161.5,340.1 L162.4,339.8 L163.4,339.6 L164.4,339.3 L165.4,339.0 L166.4,338.7 L167.4,338.3 L168.4,338.0 L169.4,337.6 L170.4,337.2 L171.4,336.8 L172.4,336.4 L173.4,335.9 L174.4,335.5 L175.4,335.0 L176.4,334.4 L177.4,333.8 L178.4,333.1 L179.4,332.4 L180.4,331.7 L181.4,330.9 L182.4,330.1 L183.4,329.2 L184.4,328.3 L185.4,327.3 L186.4,326.2 L187.4,325.2 L188.4,324.0 L189.4,322.8 L190.4,321.5 L191.4,320.2 L192.4,318.8 L193.4,317.3 L194.4,315.9 L195.4,314.4 L196.4,313.0 L197.4,311.5 L198.4,309.9 L199.4,308.3 L200.4,306.7 L201.4,305.1 L202.4,303.3 L203.4,301.6 L204.4,299.7 L205.4,297.9 L206.4,296.0 L207.4,294.1 L208.4,292.1 L209.4,290.2 L210.4,288.3 L211.4,286.3 L212.4,284.3 L213.4,282.3 L214.4,280.3 L215.4,278.2 L216.4,276.1 L217.4,273.9 L218.4,271.7 L219.4,269.4 L220.4,267.2 L221.4,265.0 L222.4,262.8 L223.4,260.6 L224.4,258.3 L225.5,256.1 L226.5,253.9 L227.6,251.6 L228.6,249.4 L229.7,247.1 L230.7,244.9 L231.8,242.6 L232.8,240.4 L233.9,238.2 L234.9,235.9 L235.9,233.6 L237.0,231.4 L238.0,229.1 L239.1,226.9 L240.1,224.6 L241.2,222.3 L242.2,220.0 L243.3,217.8 L244.3,215.6 L245.4,213.3 L246.4,211.1 L247.5,208.9 L248.5,206.7 L249.6,204.6 L250.7,202.4 L251.7,200.3 L252.8,198.1 L253.8,196.1 L254.9,194.1 L256.0,192.1 L257.0,190.2 L258.1,188.3 L259.1,186.4 L260.2,184.6 L261.2,182.9 L262.2,181.2 L263.2,179.6 L264.2,178.0 L265.2,176.5 L266.2,175.0 L267.2,173.6 L268.2,172.1 L269.2,170.7 L270.2,169.3 L271.2,167.9 L272.3,166.5 L273.3,165.2 L274.3,163.9 L275.3,162.6 L276.3,161.3 L277.3,160.1 L278.3,158.8 L279.3,157.6 L280.3,156.4 L281.3,155.2 L282.3,154.1 L283.3,152.9 L284.3,151.7 L285.3,150.6 L286.3,149.4 L287.3,148.2 L288.3,147.1 L289.3,146.0 L290.3,144.8 L291.3,143.7 L292.3,142.6 L293.3,141.5 L294.3,140.4 L295.4,139.3 L296.4,138.2 L297.4,137.1 L298.4,136.0 L299.4,134.9 L300.4,133.8 L301.4,132.8 L302.4,131.7 L303.4,130.7 L304.4,129.6 L305.4,128.6 L306.4,127.5 L307.4,126.5 L308.4,125.5 L309.4,124.4 L310.4,123.4 L311.4,122.4 L312.4,121.4 L313.4,120.4 L314.4,119.4 L315.4,118.5 L316.4,117.5 L317.4,116.6 L318.5,115.7 L319.5,114.8 L320.5,114.0 L321.5,113.1 L322.5,112.3 L323.5,111.5 L324.5,110.7 L325.5,110.0 L326.5,109.2 L327.5,108.5 L328.5,107.8 L329.5,107.1 L330.5,106.4 L331.5,105.7 L332.5,105.1 L333.5,104.4 L334.5,103.8 L335.5,103.1 L336.5,102.5 L337.5,101.9 L338.5,101.4 L339.5,100.8 L340.6,100.2 L341.6,99.7 L342.6,99.2 L343.6,98.7 L344.6,98.2 L345.6,97.8 L346.6,97.4 L347.6,97.1 L348.6,96.8 L349.6,96.5 L350.6,96.2 L351.6,95.9 L352.6,95.7 L353.6,95.5 L354.6,95.3 L355.6,95.1 L356.6,94.9 L357.6,94.7 L358.6,94.5 L359.6,94.3 L360.6,94.2 L361.6,94.0 L362.6,93.9 L363.7,93.7 L364.7,93.6 L365.7,93.5 L366.7,93.4 L367.7,93.3 L368.7,93.3 L369.7,93.2 L370.7,93.1 L371.7,93.0 L372.7,92.9 L373.7,92.9 L374.7,92.8 L375.7,92.7 L376.7,92.7 L377.7,92.6 L378.7,92.6 L379.7,92.5 L380.7,92.5 L381.7,92.4 L382.7,92.4 L383.7,92.3 L384.7,92.3 L385.7,92.2 L386.8,92.2 L387.8,92.2 L388.8,92.1 L389.8,92.1 L390.8,92.0 L391.8,92.0 L392.8,92.0 L393.8,91.9 L394.8,91.9 L395.8,91.9 L396.8,91.9 L397.8,91.9" stroke="#0000ff" stroke-width="3.4"/>
<path d="M93.9,339.2 L94.9,339.3 L95.9,339.4 L96.8,339.4 L97.8,339.5 L98.8,339.6 L99.8,339.6 L100.7,339.7 L101.7,339.8 L102.7,339.8 L103.7,339.9 L104.6,340.0 L105.6,340.0 L106.6,340.1 L107.6,340.1 L108.5,340.2 L109.5,340.3 L110.5,340.3 L111.5,340.4 L112.4,340.5 L113.4,340.5 L114.4,340.6 L115.4,340.7 L116.4,340.8 L117.3,340.8 L118.3,340.9 L119.3,341.0 L120.3,341.1 L121.2,341.2 L122.2,341.3 L123.2,341.3 L124.2,341.4 L125.1,341.5 L126.1,341.6 L127.1,341.7 L128.1,341.8 L129.0,341.9 L130.0,341.9 L131.0,342.0 L132.0,342.0 L132.9,342.1 L133.9,342.1 L134.9,342.1 L135.9,342.1 L136.9,342.1 L137.8,342.1 L138.8,342.1 L139.8,342.1 L140.8,342.1 L141.7,342.1 L142.7,342.1 L143.7,342.1 L144.7,342.1 L145.6,342.1 L146.6,342.1 L147.6,342.1 L148.6,342.1 L149.5,342.1 L150.5,342.0 L151.5,342.0 L152.5,341.9 L153.4,341.8 L154.4,341.6 L155.4,341.5 L156.4,341.3 L157.4,341.2 L158.3,341.0 L159.3,340.8 L160.3,340.6 L161.3,340.5 L162.2,340.3 L163.2,340.1 L164.2,339.8 L165.2,339.6 L166.2,339.3 L167.2,339.0 L168.2,338.7 L169.2,338.3 L170.2,338.0 L171.2,337.6 L172.2,337.2 L173.2,336.8 L174.2,336.4 L175.2,335.9 L176.2,335.5 L177.2,335.0 L178.2,334.4 L179.2,333.8 L180.2,333.1 L181.2,332.4 L182.2,331.7 L183.2,330.9 L184.2,330.1 L185.2,329.2 L186.2,328.3 L187.2,327.3 L188.2,326.2 L189.2,325.2 L190.2,324.0 L191.2,322.8 L192.2,321.5 L193.2,320.2 L194.2,318.8 L195.2,317.3 L196.2,315.9 L197.2,314.4 L198.2,313.0 L199.2,311.5 L200.2,309.9 L201.2,308.3 L202.2,306.7 L203.2,305.1 L204.2,303.3 L205.2,301.6 L206.2,299.7 L207.2,297.9 L208.2,296.0 L209.2,294.1 L210.2,292.1 L211.2,290.2 L212.2,288.3 L213.2,286.3 L214.2,284.3 L215.2,282.3 L216.2,280.3 L217.2,278.2 L218.2,276.1 L219.2,273.9 L220.2,271.7 L221.2,269.4 L222.2,267.2 L223.2,265.0 L224.2,262.8 L225.2,260.6 L226.2,258.3 L227.2,256.1 L228.2,253.9 L229.3,251.6 L230.3,249.4 L231.3,247.1 L232.3,244.9 L233.4,242.6 L234.4,240.4 L235.4,238.2 L236.4,235.9 L237.4,233.6 L238.5,231.4 L239.5,229.1 L240.5,226.9 L241.5,224.6 L242.6,222.3 L243.6,220.0 L244.6,217.8 L245.6,215.6 L246.7,213.3 L247.7,211.1 L248.8,208.9 L249.8,206.7 L250.8,204.6 L251.9,202.4 L252.9,200.3 L253.9,198.1 L255.0,196.1 L256.0,194.1 L257.1,192.1 L258.1,190.2 L259.1,188.3 L260.2,186.4 L261.2,184.6 L262.2,182.9 L263.2,181.2 L264.2,179.6 L265.2,178.0 L266.2,176.5 L267.2,175.0 L268.2,173.6 L269.2,172.1 L270.2,170.7 L271.2,169.3 L272.2,167.9 L273.2,166.5 L274.3,165.2 L275.3,163.9 L276.3,162.6 L277.3,161.3 L278.3,160.1 L279.3,158.8 L280.3,157.6 L281.3,156.4 L282.3,155.2 L283.3,154.1 L284.3,152.9 L285.3,151.7 L286.3,150.6 L287.3,149.4 L288.3,148.2 L289.3,147.1 L290.3,146.0 L291.3,144.8 L292.3,143.7 L293.3,142.6 L294.3,141.5 L295.3,140.4 L296.3,139.3 L297.3,138.2 L298.3,137.1 L299.3,136.0 L300.3,134.9 L301.3,133.8 L302.3,132.8 L303.3,131.7 L304.3,130.7 L305.3,129.6 L306.3,128.6 L307.3,127.5 L308.3,126.5 L309.3,125.5 L310.3,124.4 L311.3,123.4 L312.3,122.4 L313.3,121.4 L314.4,120.4 L315.4,119.4 L316.4,118.5 L317.4,117.5 L318.4,116.6 L319.4,115.7 L320.4,114.8 L321.4,114.0 L322.4,113.1 L323.4,112.3 L324.4,111.5 L325.4,110.7 L326.4,110.0 L327.4,109.2 L328.4,108.5 L329.4,107.8 L330.4,107.1 L331.4,106.4 L332.4,105.7 L333.4,105.1 L334.4,104.4 L335.4,103.8 L336.4,103.1 L337.4,102.5 L338.4,101.9 L339.4,101.4 L340.4,100.8 L341.4,100.2 L342.4,99.7 L343.4,99.2 L344.4,98.7 L345.4,98.2 L346.4,97.8 L347.4,97.4 L348.4,97.1 L349.4,96.8 L350.4,96.5 L351.4,96.2 L352.4,95.9 L353.4,95.7 L354.5,95.5 L355.5,95.3 L356.5,95.1 L357.5,94.9 L358.5,94.7 L359.5,94.5 L360.5,94.3 L361.5,94.2 L362.5,94.0 L363.5,93.9 L364.5,93.7 L365.5,93.6 L366.5,93.5 L367.5,93.4 L368.5,93.3 L369.5,93.3 L370.5,93.2 L371.5,93.1 L372.5,93.0 L373.5,92.9 L374.5,92.9 L375.5,92.8 L376.5,92.7 L377.5,92.7 L378.5,92.6 L379.5,92.6 L380.5,92.5 L381.5,92.5 L382.5,92.4 L383.5,92.4 L384.5,92.3 L385.5,92.3 L386.5,92.2 L387.5,92.2 L388.5,92.2 L389.5,92.1 L390.5,92.1 L391.5,92.0 L392.5,92.0 L393.5,92.0 L394.6,91.9 L395.6,91.9 L396.6,91.9 L397.6,91.9 L398.6,91.9" stroke="#0000ff" stroke-width="3.4"/>
<path d="M94.5,339.2 L95.5,339.3 L96.5,339.4 L97.5,339.4 L98.5,339.5 L99.5,339.6 L100.5,339.6 L101.4,339.7 L102.4,339.8 L103.4,339.8 L104.4,339.9 L105.4,340.0 L106.4,340.0 L107.4,340.1 L108.4,340.1 L109.4,340.2 L110.4,340.3 L111.4,340.3 L112.4,340.4 L113.3,340.5 L114.3,340.5 L115.3,340.6 L116.3,340.7 L117.3,340.8 L118.3,340.8 L119.3,340.9 L120.3,341.0 L121.3,341.1 L122.3,341.2 L123.3,341.3 L124.3,341.3 L125.3,341.4 L126.2,341.5 L127.2,341.6 L128.2,341.7 L129.2,341.8 L130.2,341.9 L131.2,341.9 L132.2,342.0 L133.2,342.0 L134.2,342.1 L135.2,342.1 L136.2,342.1 L137.2,342.1 L138.2,342.1 L139.1,342.1 L140.1,342.1 L141.1,342.1 L142.1,342.1 L143.1,342.1 L144.1,342.1 L145.1,342.1 L146.1,342.1 L147.1,342.1 L148.1,342.1 L149.1,342.1 L150.1,342.1 L151.0,342.1 L152.0,342.0 L153.0,342.0 L154.0,341.9 L155.0,341.8 L156.0,341.6 L157.0,341.5 L158.0,341.3 L159.0,341.2 L160.0,341.0 L161.0,340.8 L162.0,340.6 L163.0,340.5 L163.9,340.3 L164.9,340.1 L165.9,339.8 L166.9,339.6 L167.9,339.3 L168.9,339.0 L169.9,338.7 L170.9,338.3 L171.9,338.0 L172.9,337.6 L173.9,337.2 L174.9,336.8 L175.9,336.4 L176.9,335.9 L177.9,335.5 L178.9,335.0 L179.9,334.4 L180.9,333.8 L181.9,333.1 L182.9,332.4 L183.9,331.7 L184.9,330.9 L185.9,330.1 L186.9,329.2 L187.9,328.3 L188.9,327.3 L189.9,326.2 L190.9,325.2 L191.9,324.0 L192.9,322.8 L193.9,321.5 L194.9,320.2 L195.9,318.8 L196.9,317.3 L197.9,315.9 L198.9,314.4 L199.9,313.0 L200.9,311.5 L201.9,309.9 L202.9,308.3 L203.9,306.7 L204.9,305.1 L205.9,303.3 L206.9,301.6 L207.9,299.7 L208.9,297.9 L209.9,296.0 L210.9,294.1 L211.9,292.1 L212.9,290.2 L213.9,288.3 L214.9,286.3 L215.9,284.3 L216.9,282.3 L217.9,280.3 L218.9,278.2 L219.9,276.1 L220.9,273.9 L221.9,271.7 L222.9,269.4 L223.9,267.2 L224.9,265.0 L225.9,262.8 L226.9,260.6 L227.9,258.3 L228.9,256.1 L229.9,253.9 L230.9,251.6 L231.9,249.4 L232.9,247.1 L233.9,244.9 L234.9,242.6 L235.9,240.4 L237.0,238.2 L238.0,235.9 L239.0,233.6 L240.0,231.4 L241.0,229.1 L242.0,226.9 L243.0,224.6 L244.0,222.3 L245.0,220.0 L246.0,217.8 L247.0,215.6 L248.0,213.3 L249.0,211.1 L250.0,208.9 L251.0,206.7 L252.1,204.6 L253.1,202.4 L254.1,200.3 L255.1,198.1 L256.1,196.1 L257.2,194.1 L258.2,192.1 L259.2,190.2 L260.2,188.3 L261.2,186.4 L262.2,184.6 L263.2,182.9 L264.2,181.2 L265.2,179.6 L266.2,178.0 L267.2,176.5 L268.2,175.0 L269.2,173.6 L270.2,172.1 L271.2,170.7 L272.2,169.3 L273.2,167.9 L274.2,166.5 L275.2,165.2 L276.2,163.9 L277.2,162.6 L278.2,161.3 L279.2,160.1 L280.3,158.8 L281.3,157.6 L282.3,156.4 L283.3,155.2 L284.3,154.1 L285.3,152.9 L286.3,151.7 L287.3,150.6 L288.3,149.4 L289.3,148.2 L290.3,147.1 L291.3,146.0 L292.3,144.8 L293.3,143.7 L294.3,142.6 L295.3,141.5 L296.3,140.4 L297.3,139.3 L298.3,138.2 L299.3,137.1 L300.3,136.0 L301.3,134.9 L302.3,133.8 L303.3,132.8 L304.3,131.7 L305.3,130.7 L306.3,129.6 L307.3,128.6 L308.3,127.5 L309.3,126.5 L310.3,125.5 L311.3,124.4 L312.3,123.4 L313.3,122.4 L314.3,121.4 L315.3,120.4 L316.3,119.4 L317.3,118.5 L318.3,117.5 L319.3,116.6 L320.3,115.7 L321.3,114.8 L322.3,114.0 L323.3,113.1 L324.3,112.3 L325.3,111.5 L326.3,110.7 L327.3,110.0 L328.3,109.2 L329.3,108.5 L330.3,107.8 L331.3,107.1 L332.3,106.4 L333.3,105.7 L334.3,105.1 L335.3,104.4 L336.3,103.8 L337.3,103.1 L338.3,102.5 L339.3,101.9 L340.3,101.4 L341.3,100.8 L342.3,100.2 L343.3,99.7 L344.3,99.2 L345.3,98.7 L346.3,98.2 L347.3,97.8 L348.3,97.4 L349.3,97.1 L350.3,96.8 L351.3,96.5 L352.3,96.2 L353.3,95.9 L354.3,95.7 L355.3,95.5 L356.3,95.3 L357.3,95.1 L358.3,94.9 L359.3,94.7 L360.3,94.5 L361.3,94.3 L362.3,94.2 L363.3,94.0 L364.3,93.9 L365.3,93.7 L366.3,93.6 L367.3,93.5 L368.3,93.4 L369.3,93.3 L370.3,93.3 L371.3,93.2 L372.3,93.1 L373.3,93.0 L374.3,92.9 L375.3,92.9 L376.3,92.8 L377.3,92.7 L378.3,92.7 L379.3,92.6 L380.3,92.6 L381.3,92.5 L382.3,92.5 L383.3,92.4 L384.3,92.4 L385.3,92.3 L386.3,92.3 L387.3,92.2 L388.3,92.2 L389.3,92.2 L390.3,92.1 L391.3,92.1 L392.3,92.0 L393.3,92.0 L394.3,92.0 L395.3,91.9 L396.3,91.9 L397.3,91.9 L398.3,91.9 L399.3,91.9" stroke="#0000ff" stroke-width="3.4"/>
<path d="M95.1,339.2 L96.1,339.3 L97.1,339.4 L98.1,339.4 L99.1,339.5 L100.1,339.6 L101.1,339.6 L102.2,339.7 L103.2,339.8 L104.2,339.8 L105.2,339.9 L106.2,340.0 L107.2,340.0 L108.2,340.1 L109.2,340.1 L110.2,340.2 L111.2,340.3 L112.2,340.3 L113.2,340.4 L114.3,340.5 L115.3,340.5 L116.3,340.6 L117.3,340.7 L118.3,340.8 L119.3,340.8 L120.3,340.9 L121.3,341.0 L122.3,341.1 L123.3,341.2 L124.3,341.3 L125.3,341.3 L126.3,341.4 L127.4,341.5 L128.4,341.6 L129.4,341.7 L130.4,341.8 L131.4,341.9 L132.4,341.9 L133.4,342.0 L134.4,342.0 L135.4,342.1 L136.4,342.1 L137.4,342.1 L138.4,342.1 L139.4,342.1 L140.5,342.1 L141.5,342.1 L142.5,342.1 L143.5,342.1 L144.5,342.1 L145.5,342.1 L146.5,342.1 L147.5,342.1 L148.5,342.1 L149.5,342.1 L150.5,342.1 L151.5,342.1 L152.6,342.1 L153.6,342.0 L154.6,342.0 L155.6,341.9 L156.6,341.8 L157.6,341.6 L158.6,341.5 L159.6,341.3 L160.6,341.2 L161.6,341.0 L162.6,340.8 L163.6,340.6 L164.6,340.5 L165.7,340.3 L166.7,340.1 L167.7,339.8 L168.7,339.6 L169.7,339.3 L170.7,339.0 L171.7,338.7 L172.7,338.3 L173.7,338.0 L174.7,337.6 L175.7,337.2 L176.7,336.8 L177.7,336.4 L178.7,335.9 L179.7,335.5 L180.7,335.0 L181.7,334.4 L182.7,333.8 L183.7,333.1 L184.7,332.4 L185.7,331.7 L186.7,330.9 L187.7,330.1 L188.7,329.2 L189.7,328.3 L190.7,327.3 L191.7,326.2 L192.7,325.2 L193.7,324.0 L194.7,322.8 L195.7,321.5 L196.7,320.2 L197.7,318.8 L198.7,317.3 L199.7,315.9 L200.7,314.4 L201.7,313.0 L202.7,311.5 L203.7,309.9 L204.7,308.3 L205.7,306.7 L206.7,305.1 L207.7,303.3 L208.7,301.6 L209.7,299.7 L210.7,297.9 L211.7,296.0 L212.7,294.1 L213.7,292.1 L214.7,290.2 L215.7,288.3 L216.7,286.3 L217.7,284.3 L218.7,282.3 L219.7,280.3 L220.7,278.2 L221.7,276.1 L222.7,273.9 L223.7,271.7 L224.7,269.4 L225.7,267.2 L226.7,265.0 L227.7,262.8 L228.7,260.6 L229.7,258.3 L230.6,256.1 L231.6,253.9 L232.6,251.6 L233.6,249.4 L234.6,247.1 L235.6,244.9 L236.5,242.6 L237.5,240.4 L238.5,238.2 L239.5,235.9 L240.5,233.6 L241.4,231.4 L242.4,229.1 L243.4,226.9 L244.4,224.6 L245.4,222.3 L246.4,220.0 L247.3,217.8 L248.3,215.6 L249.3,213.3 L250.3,211.1 L251.3,208.9 L252.3,206.7 L253.3,204.6 L254.3,202.4 L255.3,200.3 L256.3,198.1 L257.3,196.1 L258.3,194.1 L259.3,192.1 L260.3,190.2 L261.3,188.3 L262.3,186.4 L263.3,184.6 L264.3,182.9 L265.3,181.2 L266.3,179.6 L267.3,178.0 L268.3,176.5 L269.3,175.0 L270.3,173.6 L271.2,172.1 L272.2,170.7 L273.2,169.3 L274.2,167.9 L275.2,166.5 L276.2,165.2 L277.2,163.9 L278.2,162.6 L279.2,161.3 L280.2,160.1 L281.2,158.8 L282.2,157.6 L283.2,156.4 L284.2,155.2 L285.2,154.1 L286.2,152.9 L287.2,151.7 L288.2,150.6 L289.2,149.4 L290.2,148.2 L291.2,147.1 L292.2,146.0 L293.2,144.8 L294.2,143.7 L295.2,142.6 L296.2,141.5 L297.2,140.4 L298.2,139.3 L299.2,138.2 L300.2,137.1 L301.2,136.0 L302.2,134.9 L303.2,133.8 L304.2,132.8 L305.2,131.7 L306.2,130.7 L307.2,129.6 L308.2,128.6 L309.2,127.5 L310.2,126.5 L311.2,125.5 L312.2,124.4 L313.2,123.4 L314.2,122.4 L315.2,121.4 L316.2,120.4 L317.2,119.4 L318.2,118.5 L319.2,117.5 L320.2,116.6 L321.2,115.7 L322.2,114.8 L323.2,114.0 L324.2,113.1 L325.2,112.3 L326.2,111.5 L327.2,110.7 L328.2,110.0 L329.2,109.2 L330.2,108.5 L331.2,107.8 L332.2,107.1 L333.2,106.4 L334.2,105.7 L335.2,105.1 L336.2,104.4 L337.2,103.8 L338.2,103.1 L339.2,102.5 L340.2,101.9 L341.2,101.4 L342.2,100.8 L343.2,100.2 L344.2,99.7 L345.2,99.2 L346.2,98.7 L347.1,98.2 L348.1,97.8 L349.1,97.4 L350.1,97.1 L351.1,96.8 L352.1,96.5 L353.1,96.2 L354.1,95.9 L355.1,95.7 L356.1,95.5 L357.1,95.3 L358.1,95.1 L359.1,94.9 L360.1,94.7 L361.1,94.5 L362.1,94.3 L363.1,94.2 L364.1,94.0 L365.1,93.9 L366.1,93.7 L367.1,93.6 L368.1,93.5 L369.1,93.4 L370.1,93.3 L371.1,93.3 L372.1,93.2 L373.1,93.1 L374.1,93.0 L375.1,92.9 L376.1,92.9 L377.1,92.8 L378.1,92.7 L379.1,92.7 L380.1,92.6 L381.1,92.6 L382.1,92.5 L383.1,92.5 L384.1,92.4 L385.1,92.4 L386.1,92.3 L387.1,92.3 L388.1,92.2 L389.1,92.2 L390.1,92.2 L391.1,92.1 L392.1,92.1 L393.1,92.0 L394.1,92.0 L395.1,92.0 L396.1,91.9 L397.1,91.9 L398.1,91.9 L399.1,91.9 L400.1,91.9" stroke="#0000ff" stroke-width="3.4"/>
<path d="M95.7,339.2 L96.7,339.3 L97.7,339.4 L98.8,339.4 L99.8,339.5 L100.8,339.6 L101.8,339.6 L102.9,339.7 L103.9,339.8 L104.9,339.8 L105.9,339.9 L107.0,340.0 L108.0,340.0 L109.0,340.1 L110.0,340.1 L111.1,340.2 L112.1,340.3 L113.1,340.3 L114.1,340.4 L115.2,340.5 L116.2,340.5 L117.2,340.6 L118.2,340.7 L119.2,340.8 L120.3,340.8 L121.3,340.9 L122.3,341.0 L123.3,341.1 L124.4,341.2 L125.4,341.3 L126.4,341.3 L127.4,341.4 L128.5,341.5 L129.5,341.6 L130.5,341.7 L131.5,341.8 L132.6,341.9 L133.6,341.9 L134.6,342.0 L135.6,342.0 L136.7,342.1 L137.7,342.1 L138.7,342.1 L139.7,342.1 L140.7,342.1 L141.8,342.1 L142.8,342.1 L143.8,342.1 L144.8,342.1 L145.9,342.1 L146.9,342.1 L147.9,342.1 L148.9,342.1 L150.0,342.1 L151.0,342.1 L152.0,342.1 L153.0,342.1 L154.1,342.1 L155.1,342.0 L156.1,342.0 L157.1,341.9 L158.2,341.8 L159.2,341.6 L160.2,341.5 L161.2,341.3 L162.2,341.2 L163.3,341.0 L164.3,340.8 L165.3,340.6 L166.3,340.5 L167.4,340.3 L168.4,340.1 L169.4,339.8 L170.4,339.6 L171.4,339.3 L172.4,339.0 L173.4,338.7 L174.4,338.3 L175.4,338.0 L176.4,337.6 L177.4,337.2 L178.4,336.8 L179.4,336.4 L180.4,335.9 L181.4,335.5 L182.4,335.0 L183.4,334.4 L184.4,333.8 L185.4,333.1 L186.4,332.4 L187.4,331.7 L188.4,330.9 L189.4,330.1 L190.4,329.2 L191.4,328.3 L192.4,327.3 L193.4,326.2 L194.4,325.2 L195.4,324.0 L196.4,322.8 L197.4,321.5 L198.4,320.2 L199.4,318.8 L200.4,317.3 L201.4,315.9 L202.4,314.4 L203.4,313.0 L204.4,311.5 L205.4,309.9 L206.4,308.3 L207.4,306.7 L208.4,305.1 L209.4,303.3 L210.4,301.6 L211.4,299.7 L212.4,297.9 L213.4,296.0 L214.4,294.1 L215.4,292.1 L216.4,290.2 L217.4,288.3 L218.4,286.3 L219.4,284.3 L220.4,282.3 L221.4,280.3 L222.4,278.2 L223.4,276.1 L224.4,273.9 L225.4,271.7 L226.4,269.4 L227.4,267.2 L228.4,265.0 L229.4,262.8 L230.4,260.6 L231.4,258.3 L232.4,256.1 L233.3,253.9 L234.3,251.6 L235.2,249.4 L236.2,247.1 L237.2,244.9 L238.1,242.6 L239.1,240.4 L240.1,238.2 L241.0,235.9 L242.0,233.6 L242.9,231.4 L243.9,229.1 L244.9,226.9 L245.8,224.6 L246.8,222.3 L247.7,220.0 L248.7,217.8 L249.7,215.6 L250.6,213.3 L251.6,211.1 L252.6,208.9 L253.6,206.7 L254.5,204.6 L255.5,202.4 L256.5,200.3 L257.5,198.1 L258.4,196.1 L259.4,194.1 L260.4,192.1 L261.4,190.2 L262.3,188.3 L263.3,186.4 L264.3,184.6 L265.3,182.9 L266.3,181.2 L267.3,179.6 L268.3,178.0 L269.3,176.5 L270.3,175.0 L271.3,173.6 L272.3,172.1 L273.3,170.7 L274.2,169.3 L275.2,167.9 L276.2,166.5 L277.2,165.2 L278.2,163.9 L279.2,162.6 L280.2,161.3 L281.2,160.1 L282.2,158.8 L283.2,157.6 L284.2,156.4 L285.2,155.2 L286.2,154.1 L287.2,152.9 L288.2,151.7 L289.2,150.6 L290.2,149.4 L291.2,148.2 L292.2,147.1 L293.2,146.0 L294.2,144.8 L295.2,143.7 L296.2,142.6 L297.2,141.5 L298.2,140.4 L299.2,139.3 L300.2,138.2 L301.2,137.1 L302.2,136.0 L303.2,134.9 L304.2,133.8 L305.1,132.8 L306.1,131.7 L307.1,130.7 L308.1,129.6 L309.1,128.6 L310.1,127.5 L311.1,126.5 L312.1,125.5 L313.1,124.4 L314.1,123.4 L315.1,122.4 L316.1,121.4 L317.1,120.4 L318.1,119.4 L319.1,118.5 L320.1,117.5 L321.1,116.6 L322.1,115.7 L323.1,114.8 L324.1,114.0 L325.1,113.1 L326.1,112.3 L327.1,111.5 L328.1,110.7 L329.1,110.0 L330.1,109.2 L331.1,108.5 L332.1,107.8 L333.1,107.1 L334.1,106.4 L335.1,105.7 L336.0,105.1 L337.0,104.4 L338.0,103.8 L339.0,103.1 L340.0,102.5 L341.0,101.9 L342.0,101.4 L343.0,100.8 L344.0,100.2 L345.0,99.7 L346.0,99.2 L347.0,98.7 L348.0,98.2 L349.0,97.8 L350.0,97.4 L351.0,97.1 L352.0,96.8 L353.0,96.5 L354.0,96.2 L355.0,95.9 L356.0,95.7 L357.0,95.5 L358.0,95.3 L359.0,95.1 L360.0,94.9 L361.0,94.7 L362.0,94.5 L363.0,94.3 L364.0,94.2 L365.0,94.0 L366.0,93.9 L366.9,93.7 L367.9,93.6 L368.9,93.5 L369.9,93.4 L370.9,93.3 L371.9,93.3 L372.9,93.2 L373.9,93.1 L374.9,93.0 L375.9,92.9 L376.9,92.9 L377.9,92.8 L378.9,92.7 L379.9,92.7 L380.9,92.6 L381.9,92.6 L382.9,92.5 L383.9,92.5 L384.9,92.4 L385.9,92.4 L386.9,92.3 L387.9,92.3 L388.9,92.2 L389.9,92.2 L390.9,92.2 L391.9,92.1 L392.9,92.1 L393.9,92.0 L394.9,92.0 L395.9,92.0 L396.9,91.9 L397.8,91.9 L398.8,91.9 L399.8,91.9 L400.8,91.9" stroke="#0000ff" stroke-width="3.4"/>
<path d="M96.3,339.2 L97.3,339.3 L98.4,339.4 L99.4,339.4 L100.5,339.5 L101.5,339.6 L102.5,339.6 L103.6,339.7 L104.6,339.8 L105.7,339.8 L106.7,339.9 L107.7,340.0 L108.8,340.0 L109.8,340.1 L110.9,340.1 L111.9,340.2 L112.9,340.3 L114.0,340.3 L115.0,340.4 L116.1,340.5 L117.1,340.5 L118.1,340.6 L119.2,340.7 L120.2,340.8 L121.3,340.8 L122.3,340.9 L123.3,341.0 L124.4,341.1 L125.4,341.2 L126.5,341.3 L127.5,341.3 L128.5,341.4 L129.6,341.5 L130.6,341.6 L131.7,341.7 L132.7,341.8 L133.7,341.9 L134.8,341.9 L135.8,342.0 L136.8,342.0 L137.9,342.1 L138.9,342.1 L140.0,342.1 L141.0,342.1 L142.0,342.1 L143.1,342.1 L144.1,342.1 L145.2,342.1 L146.2,342.1 L147.2,342.1 L148.3,342.1 L149.3,342.1 L150.4,342.1 L151.4,342.1 L152.4,342.1 L153.5,342.1 L154.5,342.1 L155.6,342.1 L156.6,342.0 L157.6,342.0 L158.7,341.9 L159.7,341.8 L160.8,341.6 L161.8,341.5 L162.8,341.3 L163.9,341.2 L164.9,341.0 L166.0,340.8 L167.0,340.6 L168.0,340.5 L169.1,340.3 L170.1,340.1 L171.2,339.8 L172.2,339.6 L173.2,339.3 L174.2,339.0 L175.2,338.7 L176.2,338.3 L177.2,338.0 L178.2,337.6 L179.2,337.2 L180.2,336.8 L181.2,336.4 L182.2,335.9 L183.2,335.5 L184.2,335.0 L185.2,334.4 L186.2,333.8 L187.2,333.1 L188.2,332.4 L189.2,331.7 L190.2,330.9 L191.2,330.1 L192.2,329.2 L193.2,328.3 L194.2,327.3 L195.2,326.2 L196.2,325.2 L197.2,324.0 L198.2,322.8 L199.2,321.5 L200.2,320.2 L201.2,318.8 L202.2,317.3 L203.2,315.9 L204.2,314.4 L205.2,313.0 L206.2,311.5 L207.2,309.9 L208.2,308.3 L209.2,306.7 L210.2,305.1 L211.2,303.3 L212.2,301.6 L213.2,299.7 L214.2,297.9 L215.2,296.0 L216.2,294.1 L217.2,292.1 L218.2,290.2 L219.2,288.3 L220.2,286.3 L221.2,284.3 L222.2,282.3 L223.2,280.3 L224.2,278.2 L225.2,276.1 L226.2,273.9 L227.2,271.7 L228.2,269.4 L229.2,267.2 L230.2,265.0 L231.2,262.8 L232.2,260.6 L233.1,258.3 L234.1,256.1 L235.0,253.9 L236.0,251.6 L236.9,249.4 L237.8,247.1 L238.8,244.9 L239.7,242.6 L240.7,240.4 L241.6,238.2 L242.5,235.9 L243.5,233.6 L244.4,231.4 L245.4,229.1 L246.3,226.9 L247.2,224.6 L248.2,222.3 L249.1,220.0 L250.1,217.8 L251.0,215.6 L252.0,213.3 L252.9,211.1 L253.9,208.9 L254.8,206.7 L255.8,204.6 L256.7,202.4 L257.7,200.3 L258.6,198.1 L259.6,196.1 L260.5,194.1 L261.5,192.1 L262.4,190.2 L263.4,188.3 L264.3,186.4 L265.3,184.6 L266.3,182.9 L267.3,181.2 L268.3,179.6 L269.3,178.0 L270.3,176.5 L271.3,175.0 L272.3,173.6 L273.3,172.1 L274.3,170.7 L275.2,169.3 L276.2,167.9 L277.2,166.5 L278.2,165.2 L279.2,163.9 L280.2,162.6 L281.2,161.3 L282.2,160.1 L283.2,158.8 L284.2,157.6 L285.2,156.4 L286.2,155.2 L287.2,154.1 L288.2,152.9 L289.2,151.7 L290.2,150.6 L291.2,149.4 L292.2,148.2 L293.2,147.1 L294.2,146.0 L295.1,144.8 L296.1,143.7 L297.1,142.6 L298.1,141.5 L299.1,140.4 L300.1,139.3 L301.1,138.2 L302.1,137.1 L303.1,136.0 L304.1,134.9 L305.1,133.8 L306.1,132.8 L307.1,131.7 L308.1,130.7 L309.1,129.6 L310.1,128.6 L311.1,127.5 L312.1,126.5 L313.1,125.5 L314.0,124.4 L315.0,123.4 L316.0,122.4 L317.0,121.4 L318.0,120.4 L319.0,119.4 L320.0,118.5 L321.0,117.5 L322.0,116.6 L323.0,115.7 L324.0,114.8 L325.0,114.0 L326.0,113.1 L327.0,112.3 L328.0,111.5 L329.0,110.7 L330.0,110.0 L331.0,109.2 L332.0,108.5 L333.0,107.8 L333.9,107.1 L334.9,106.4 L335.9,105.7 L336.9,105.1 L337.9,104.4 L338.9,103.8 L339.9,103.1 L340.9,102.5 L341.9,101.9 L342.9,101.4 L343.9,100.8 L344.9,100.2 L345.9,99.7 L346.9,99.2 L347.9,98.7 L348.9,98.2 L349.9,97.8 L350.9,97.4 L351.9,97.1 L352.9,96.8 L353.8,96.5 L354.8,96.2 L355.8,95.9 L356.8,95.7 L357.8,95.5 L358.8,95.3 L359.8,95.1 L360.8,94.9 L361.8,94.7 L362.8,94.5 L363.8,94.3 L364.8,94.2 L365.8,94.0 L366.8,93.9 L367.8,93.7 L368.8,93.6 L369.8,93.5 L370.8,93.4 L371.8,93.3 L372.7,93.3 L373.7,93.2 L374.7,93.1 L375.7,93.0 L376.7,92.9 L377.7,92.9 L378.7,92.8 L379.7,92.7 L380.7,92.7 L381.7,92.6 L382.7,92.6 L383.7,92.5 L384.7,92.5 L385.7,92.4 L386.7,92.4 L387.7,92.3 L388.7,92.3 L389.7,92.2 L390.7,92.2 L391.7,92.2 L392.6,92.1 L393.6,92.1 L394.6,92.0 L395.6,92.0 L396.6,92.0 L397.6,91.9 L398.6,91.9 L399.6,91.9 L400.6,91.9 L401.6,91.9" stroke="#0000ff" stroke-width="3.4"/>
<path d="M104.4,91.9 L105.4,91.8 L106.4,91.7 L107.4,91.7 L108.4,91.6 L109.4,91.5 L110.4,91.5 L111.4,91.4 L112.4,91.3 L113.4,91.3 L114.4,91.2 L115.4,91.1 L116.4,91.1 L117.4,91.0 L118.4,91.0 L119.4,90.9 L120.4,90.8 L121.4,90.8 L122.4,90.7 L123.4,90.6 L124.4,90.6 L125.4,90.5 L126.4,90.4 L127.4,90.4 L128.4,90.3 L129.4,90.2 L130.4,90.1 L131.4,90.0 L132.4,89.9 L133.4,89.8 L134.4,89.8 L135.4,89.7 L136.4,89.6 L137.4,89.5 L138.4,89.4 L139.4,89.3 L140.4,89.2 L141.4,89.2 L142.4,89.1 L143.4,89.1 L144.4,89.0 L145.4,89.0 L146.4,89.0 L147.4,89.0 L148.4,89.0 L149.4,89.0 L150.4,89.0 L151.4,89.0 L152.4,89.0 L153.4,89.0 L154.4,89.0 L155.4,89.0 L156.4,89.0 L157.4,89.0 L158.4,89.0 L159.4,89.0 L160.4,89.0 L161.4,89.0 L162.4,89.1 L163.4,89.1 L164.4,89.2 L165.4,89.3 L166.4,89.5 L167.4,89.6 L168.4,89.8 L169.4,89.9 L170.4,90.1 L171.4,90.3 L172.4,90.5 L173.4,90.6 L174.4,90.8 L175.4,91.0 L176.4,91.3 L177.4,91.5 L178.4,91.8 L179.4,92.1 L180.4,92.4 L181.4,92.8 L182.4,93.1 L183.4,93.5 L184.4,93.9 L185.4,94.3 L186.4,94.7 L187.4,95.2 L188.4,95.6 L189.4,96.1 L190.4,96.7 L191.4,97.3 L192.4,98.0 L193.4,98.7 L194.4,99.4 L195.4,100.2 L196.4,101.0 L197.4,101.9 L198.4,102.8 L199.4,103.8 L200.4,104.9 L201.4,105.9 L202.4,107.1 L203.4,108.3 L204.4,109.6 L205.4,110.9 L206.4,112.3 L207.4,113.8 L208.4,115.2 L209.4,116.7 L210.4,118.1 L211.4,119.6 L212.4,121.2 L213.4,122.8 L214.4,124.4 L215.4,126.0 L216.4,127.8 L217.4,129.5 L218.4,131.4 L219.4,133.2 L220.4,135.1 L221.4,137.0 L222.4,139.0 L223.4,140.9 L224.4,142.8 L225.4,144.8 L226.4,146.8 L227.4,148.8 L228.4,150.8 L229.4,152.9 L230.4,155.0 L231.4,157.2 L232.4,159.4 L233.4,161.7 L234.4,163.9 L235.4,166.1 L236.4,168.3 L237.4,170.5 L238.4,172.8 L239.3,175.0 L240.3,177.2 L241.2,179.5 L242.2,181.7 L243.2,184.0 L244.1,186.2 L245.1,188.5 L246.0,190.7 L247.0,193.0 L248.0,195.2 L248.9,197.5 L249.9,199.7 L250.8,202.0 L251.8,204.2 L252.8,206.5 L253.7,208.8 L254.7,211.1 L255.6,213.3 L256.6,215.6 L257.4,217.7 L258.3,219.9 L259.1,222.0 L260.0,224.1 L260.8,226.1 L261.7,228.0 L262.5,229.8 L263.5,231.6 L264.4,233.4 L265.4,235.2 L266.3,236.9 L267.3,238.6 L268.3,240.2 L269.2,241.8 L270.2,243.4 L271.1,245.0 L272.1,246.5 L273.0,248.1 L274.0,249.5 L275.0,251.0 L275.9,252.4 L276.9,253.8 L277.8,255.2 L278.8,256.6 L279.8,257.9 L280.7,259.2 L281.7,260.5 L282.7,261.8 L283.6,263.1 L284.6,264.4 L285.6,265.6 L286.6,266.8 L287.5,268.0 L288.5,269.2 L289.5,270.4 L290.4,271.6 L291.4,272.7 L292.4,273.9 L293.3,275.1 L294.3,276.3 L295.3,277.5 L296.2,278.6 L297.2,279.7 L298.2,280.8 L299.2,281.9 L300.1,282.9 L301.1,283.9 L302.1,285.0 L303.0,286.0 L304.0,287.1 L305.0,288.1 L305.9,289.1 L306.9,290.2 L307.9,291.2 L308.9,292.3 L309.8,293.3 L310.8,294.4 L311.8,295.4 L312.7,296.4 L313.7,297.5 L314.7,298.5 L315.6,299.5 L316.6,300.5 L317.5,301.5 L318.5,302.5 L319.4,303.5 L320.4,304.6 L321.4,305.6 L322.3,306.6 L323.3,307.7 L324.2,308.7 L325.2,309.7 L326.1,310.7 L327.1,311.7 L328.1,312.7 L329.0,313.7 L330.0,314.7 L330.9,315.6 L331.9,316.6 L332.8,317.6 L333.8,318.5 L334.7,319.4 L335.7,320.4 L336.7,321.3 L337.6,322.2 L338.6,323.1 L339.5,323.9 L340.5,324.8 L341.4,325.6 L342.4,326.4 L343.3,327.2 L344.3,327.9 L345.2,328.6 L346.2,329.1 L347.1,329.7 L348.1,330.2 L349.0,330.8 L350.0,331.3 L350.9,331.7 L351.9,332.2 L352.8,332.6 L353.8,333.0 L354.7,333.4 L355.7,333.7 L356.6,334.1 L357.5,334.4 L358.5,334.7 L359.4,335.0 L360.4,335.3 L361.3,335.6 L362.3,335.8 L363.2,336.0 L364.2,336.3 L365.1,336.5 L366.1,336.7 L367.0,336.9 L368.0,337.1 L368.9,337.2 L369.9,337.4 L370.8,337.5 L371.8,337.6 L372.7,337.7 L373.7,337.8 L374.7,337.9 L375.6,338.0 L376.6,338.0 L377.6,338.1 L378.6,338.2 L379.5,338.3 L380.5,338.3 L381.5,338.4 L382.4,338.5 L383.4,338.5 L384.4,338.6 L385.3,338.6 L386.3,338.7 L387.3,338.7 L388.2,338.8 L389.2,338.8 L390.2,338.9 L391.1,338.9 L392.1,339.0 L393.1,339.0 L394.1,339.0 L395.0,339.1 L396.0,339.1 L397.0,339.1 L397.9,339.2 L398.9,339.2 L399.9,339.2 L400.8,339.2 L401.8,339.2" stroke="#0000ff" stroke-width="2.5"/>
<path d="M105.6,91.9 L106.6,91.8 L107.6,91.7 L108.6,91.7 L109.6,91.6 L110.6,91.5 L111.6,91.5 L112.6,91.4 L113.6,91.3 L114.6,91.3 L115.6,91.2 L116.6,91.1 L117.6,91.1 L118.6,91.0 L119.6,91.0 L120.6,90.9 L121.6,90.8 L122.6,90.8 L123.6,90.7 L124.6,90.6 L125.6,90.6 L126.6,90.5 L127.6,90.4 L128.6,90.4 L129.6,90.3 L130.6,90.2 L131.6,90.1 L132.6,90.0 L133.6,89.9 L134.6,89.8 L135.6,89.8 L136.6,89.7 L137.6,89.6 L138.6,89.5 L139.6,89.4 L140.6,89.3 L141.6,89.2 L142.6,89.2 L143.6,89.1 L144.6,89.1 L145.6,89.0 L146.6,89.0 L147.6,89.0 L148.6,89.0 L149.6,89.0 L150.6,89.0 L151.6,89.0 L152.6,89.0 L153.6,89.0 L154.6,89.0 L155.6,89.0 L156.6,89.0 L157.6,89.0 L158.6,89.0 L159.6,89.0 L160.6,89.0 L161.6,89.0 L162.6,89.0 L163.6,89.1 L164.6,89.1 L165.6,89.2 L166.6,89.3 L167.6,89.5 L168.6,89.6 L169.6,89.8 L170.6,89.9 L171.6,90.1 L172.6,90.3 L173.6,90.5 L174.6,90.6 L175.6,90.8 L176.6,91.0 L177.6,91.3 L178.6,91.5 L179.6,91.8 L180.6,92.1 L181.6,92.4 L182.6,92.8 L183.6,93.1 L184.6,93.5 L185.6,93.9 L186.6,94.3 L187.6,94.7 L188.6,95.2 L189.6,95.6 L190.6,96.1 L191.6,96.7 L192.6,97.3 L193.6,98.0 L194.6,98.7 L195.6,99.4 L196.6,100.2 L197.6,101.0 L198.6,101.9 L199.6,102.8 L200.6,103.8 L201.6,104.9 L202.6,105.9 L203.6,107.1 L204.6,108.3 L205.6,109.6 L206.6,110.9 L207.6,112.3 L208.6,113.8 L209.6,115.2 L210.6,116.7 L211.6,118.1 L212.6,119.6 L213.6,121.2 L214.6,122.8 L215.6,124.4 L216.6,126.0 L217.6,127.8 L218.6,129.5 L219.6,131.4 L220.6,133.2 L221.6,135.1 L222.6,137.0 L223.6,139.0 L224.6,140.9 L225.6,142.8 L226.6,144.8 L227.6,146.8 L228.6,148.8 L229.6,150.8 L230.6,152.9 L231.6,155.0 L232.6,157.2 L233.6,159.4 L234.6,161.7 L235.6,163.9 L236.6,166.1 L237.6,168.3 L238.6,170.5 L239.5,172.8 L240.4,175.0 L241.4,177.2 L242.3,179.5 L243.3,181.7 L244.2,184.0 L245.2,186.2 L246.1,188.5 L247.1,190.7 L248.0,193.0 L249.0,195.2 L249.9,197.5 L250.9,199.7 L251.8,202.0 L252.8,204.2 L253.7,206.5 L254.7,208.8 L255.6,211.1 L256.6,213.3 L257.5,215.6 L258.3,217.7 L259.1,219.9 L259.9,222.0 L260.7,224.1 L261.5,226.1 L262.3,228.0 L263.1,229.8 L264.0,231.6 L265.0,233.4 L265.9,235.2 L266.9,236.9 L267.8,238.6 L268.7,240.2 L269.7,241.8 L270.6,243.4 L271.6,245.0 L272.5,246.5 L273.5,248.1 L274.4,249.5 L275.3,251.0 L276.3,252.4 L277.2,253.8 L278.2,255.2 L279.1,256.6 L280.1,257.9 L281.0,259.2 L282.0,260.5 L283.0,261.8 L283.9,263.1 L284.9,264.4 L285.9,265.6 L286.8,266.8 L287.8,268.0 L288.8,269.2 L289.7,270.4 L290.7,271.6 L291.6,272.7 L292.6,273.9 L293.6,275.1 L294.5,276.3 L295.5,277.5 L296.5,278.6 L297.4,279.7 L298.4,280.8 L299.4,281.9 L300.3,282.9 L301.3,283.9 L302.3,285.0 L303.2,286.0 L304.2,287.1 L305.2,288.1 L306.1,289.1 L307.1,290.2 L308.1,291.2 L309.0,292.3 L310.0,293.3 L311.0,294.4 L311.9,295.4 L312.9,296.4 L313.9,297.5 L314.8,298.5 L315.8,299.5 L316.7,300.5 L317.7,301.5 L318.6,302.5 L319.6,303.5 L320.5,304.6 L321.5,305.6 L322.4,306.6 L323.4,307.7 L324.4,308.7 L325.3,309.7 L326.3,310.7 L327.2,311.7 L328.2,312.7 L329.1,313.7 L330.1,314.7 L331.0,315.6 L332.0,316.6 L332.9,317.6 L333.9,318.5 L334.9,319.4 L335.8,320.4 L336.8,321.3 L337.7,322.2 L338.7,323.1 L339.6,323.9 L340.6,324.8 L341.5,325.6 L342.5,326.4 L343.4,327.2 L344.4,327.9 L345.3,328.6 L346.3,329.1 L347.2,329.7 L348.2,330.2 L349.1,330.8 L350.0,331.3 L351.0,331.7 L351.9,332.2 L352.9,332.6 L353.8,333.0 L354.8,333.4 L355.7,333.7 L356.7,334.1 L357.6,334.4 L358.5,334.7 L359.5,335.0 L360.4,335.3 L361.4,335.6 L362.3,335.8 L363.3,336.0 L364.2,336.3 L365.1,336.5 L366.1,336.7 L367.0,336.9 L368.0,337.1 L368.9,337.2 L369.9,337.4 L370.8,337.5 L371.8,337.6 L372.7,337.7 L373.7,337.8 L374.7,337.9 L375.6,338.0 L376.6,338.0 L377.6,338.1 L378.6,338.2 L379.5,338.3 L380.5,338.3 L381.5,338.4 L382.4,338.5 L383.4,338.5 L384.4,338.6 L385.3,338.6 L386.3,338.7 L387.3,338.7 L388.2,338.8 L389.2,338.8 L390.2,338.9 L391.1,338.9 L392.1,339.0 L393.1,339.0 L394.1,339.0 L395.0,339.1 L396.0,339.1 L397.0,339.1 L397.9,339.2 L398.9,339.2 L399.9,339.2 L400.8,339.2 L401.8,339.2" stroke="#0000ff" stroke-width="2.5"/>
<path d="M106.7,91.9 L107.7,91.8 L108.7,91.7 L109.7,91.7 L110.7,91.6 L111.7,91.5 L112.7,91.5 L113.7,91.4 L114.7,91.3 L115.7,91.3 L116.7,91.2 L117.7,91.1 L118.7,91.1 L119.7,91.0 L120.7,91.0 L121.7,90.9 L122.7,90.8 L123.7,90.8 L124.7,90.7 L125.7,90.6 L126.7,90.6 L127.7,90.5 L128.7,90.4 L129.7,90.4 L130.7,90.3 L131.7,90.2 L132.7,90.1 L133.7,90.0 L134.7,89.9 L135.7,89.8 L136.7,89.8 L137.7,89.7 L138.7,89.6 L139.7,89.5 L140.7,89.4 L141.7,89.3 L142.7,89.2 L143.7,89.2 L144.7,89.1 L145.7,89.1 L146.7,89.0 L147.7,89.0 L148.7,89.0 L149.7,89.0 L150.7,89.0 L151.7,89.0 L152.7,89.0 L153.7,89.0 L154.7,89.0 L155.7,89.0 L156.7,89.0 L157.7,89.0 L158.7,89.0 L159.7,89.0 L160.7,89.0 L161.7,89.0 L162.7,89.0 L163.7,89.0 L164.7,89.1 L165.7,89.1 L166.7,89.2 L167.7,89.3 L168.7,89.5 L169.7,89.6 L170.7,89.8 L171.7,89.9 L172.7,90.1 L173.7,90.3 L174.7,90.5 L175.7,90.6 L176.7,90.8 L177.7,91.0 L178.7,91.3 L179.7,91.5 L180.7,91.8 L181.7,92.1 L182.7,92.4 L183.7,92.8 L184.7,93.1 L185.7,93.5 L186.7,93.9 L187.7,94.3 L188.7,94.7 L189.7,95.2 L190.7,95.6 L191.7,96.1 L192.7,96.7 L193.7,97.3 L194.7,98.0 L195.7,98.7 L196.7,99.4 L197.7,100.2 L198.7,101.0 L199.7,101.9 L200.7,102.8 L201.7,103.8 L202.7,104.9 L203.7,105.9 L204.7,107.1 L205.7,108.3 L206.7,109.6 L207.7,110.9 L208.7,112.3 L209.7,113.8 L210.7,115.2 L211.7,116.7 L212.7,118.1 L213.7,119.6 L214.7,121.2 L215.7,122.8 L216.7,124.4 L217.7,126.0 L218.7,127.8 L219.7,129.5 L220.7,131.4 L221.7,133.2 L222.7,135.1 L223.7,137.0 L224.7,139.0 L225.7,140.9 L226.7,142.8 L227.7,144.8 L228.7,146.8 L229.7,148.8 L230.7,150.8 L231.7,152.9 L232.7,155.0 L233.7,157.2 L234.7,159.4 L235.7,161.7 L236.7,163.9 L237.7,166.1 L238.7,168.3 L239.7,170.5 L240.6,172.8 L241.6,175.0 L242.5,177.2 L243.4,179.5 L244.4,181.7 L245.3,184.0 L246.2,186.2 L247.2,188.5 L248.1,190.7 L249.1,193.0 L250.0,195.2 L250.9,197.5 L251.9,199.7 L252.8,202.0 L253.7,204.2 L254.7,206.5 L255.6,208.8 L256.5,211.1 L257.5,213.3 L258.4,215.6 L259.2,217.7 L259.9,219.9 L260.7,222.0 L261.4,224.1 L262.2,226.1 L262.9,228.0 L263.7,229.8 L264.6,231.6 L265.5,233.4 L266.5,235.2 L267.4,236.9 L268.3,238.6 L269.2,240.2 L270.2,241.8 L271.1,243.4 L272.0,245.0 L272.9,246.5 L273.9,248.1 L274.8,249.5 L275.7,251.0 L276.6,252.4 L277.6,253.8 L278.5,255.2 L279.4,256.6 L280.4,257.9 L281.3,259.2 L282.3,260.5 L283.2,261.8 L284.2,263.1 L285.2,264.4 L286.1,265.6 L287.1,266.8 L288.1,268.0 L289.0,269.2 L290.0,270.4 L290.9,271.6 L291.9,272.7 L292.9,273.9 L293.8,275.1 L294.8,276.3 L295.7,277.5 L296.7,278.6 L297.7,279.7 L298.6,280.8 L299.6,281.9 L300.5,282.9 L301.5,283.9 L302.5,285.0 L303.4,286.0 L304.4,287.1 L305.4,288.1 L306.3,289.1 L307.3,290.2 L308.2,291.2 L309.2,292.3 L310.2,293.3 L311.1,294.4 L312.1,295.4 L313.0,296.4 L314.0,297.5 L315.0,298.5 L315.9,299.5 L316.9,300.5 L317.8,301.5 L318.8,302.5 L319.7,303.5 L320.7,304.6 L321.6,305.6 L322.6,306.6 L323.5,307.7 L324.5,308.7 L325.4,309.7 L326.4,310.7 L327.3,311.7 L328.3,312.7 L329.3,313.7 L330.2,314.7 L331.2,315.6 L332.1,316.6 L333.1,317.6 L334.0,318.5 L335.0,319.4 L335.9,320.4 L336.9,321.3 L337.8,322.2 L338.8,323.1 L339.7,323.9 L340.7,324.8 L341.6,325.6 L342.6,326.4 L343.5,327.2 L344.5,327.9 L345.4,328.6 L346.4,329.1 L347.3,329.7 L348.2,330.2 L349.2,330.8 L350.1,331.3 L351.1,331.7 L352.0,332.2 L352.9,332.6 L353.9,333.0 L354.8,333.4 L355.8,333.7 L356.7,334.1 L357.6,334.4 L358.6,334.7 L359.5,335.0 L360.5,335.3 L361.4,335.6 L362.3,335.8 L363.3,336.0 L364.2,336.3 L365.2,336.5 L366.1,336.7 L367.0,336.9 L368.0,337.1 L368.9,337.2 L369.9,337.4 L370.8,337.5 L371.8,337.6 L372.7,337.7 L373.7,337.8 L374.7,337.9 L375.6,338.0 L376.6,338.0 L377.6,338.1 L378.6,338.2 L379.5,338.3 L380.5,338.3 L381.5,338.4 L382.4,338.5 L383.4,338.5 L384.4,338.6 L385.3,338.6 L386.3,338.7 L387.3,338.7 L388.2,338.8 L389.2,338.8 L390.2,338.9 L391.1,338.9 L392.1,339.0 L393.1,339.0 L394.1,339.0 L395.0,339.1 L396.0,339.1 L397.0,339.1 L397.9,339.2 L398.9,339.2 L399.9,339.2 L400.8,339.2 L401.8,339.2" stroke="#0000ff" stroke-width="2.5"/>
<path d="M394.5,91.9 L395.4,91.8 L396.4,91.7 L397.4,91.7 L398.4,91.6 L399.3,91.5 L400.3,91.5 L401.3,91.4 L402.3,91.3 L403.2,91.3 L404.2,91.2 L405.2,91.1 L406.2,91.1 L407.1,91.0 L408.1,91.0 L409.1,90.9 L410.1,90.8 L411.1,90.8 L412.0,90.7 L413.0,90.6 L414.0,90.6 L415.0,90.5 L415.9,90.4 L416.9,90.4 L417.9,90.3 L418.9,90.2 L419.8,90.1 L420.8,90.0 L421.8,89.9 L422.8,89.8 L423.7,89.8 L424.7,89.7 L425.7,89.6 L426.7,89.5 L427.6,89.4 L428.6,89.3 L429.6,89.2 L430.6,89.2 L431.5,89.1 L432.5,89.1 L433.5,89.0 L434.5,89.0 L435.4,89.0 L436.4,89.0 L437.4,89.0 L438.4,89.0 L439.3,89.0 L440.3,89.0 L441.3,89.0 L442.3,89.0 L443.2,89.0 L444.2,89.0 L445.2,89.0 L446.2,89.0 L447.1,89.0 L448.1,89.0 L449.1,89.0 L450.1,89.0 L451.0,89.1 L452.0,89.1 L453.0,89.2 L454.0,89.3 L454.9,89.5 L455.9,89.6 L456.9,89.8 L457.9,89.9 L458.8,90.1 L459.8,90.3 L460.8,90.5 L461.8,90.6 L462.7,90.8 L463.7,91.0 L464.7,91.3 L465.7,91.5 L466.7,91.8 L467.7,92.1 L468.7,92.4 L469.7,92.8 L470.7,93.1 L471.7,93.5 L472.7,93.9 L473.7,94.3 L474.7,94.7 L475.7,95.2 L476.7,95.6 L477.7,96.1 L478.7,96.7 L479.7,97.3 L480.7,98.0 L481.7,98.7 L482.7,99.4 L483.7,100.2 L484.7,101.0 L485.7,101.9 L486.7,102.8 L487.7,103.8 L488.7,104.9 L489.7,105.9 L490.7,107.1 L491.7,108.3 L492.7,109.6 L493.7,110.9 L494.7,112.3 L495.7,113.8 L496.7,115.2 L497.7,116.7 L498.7,118.1 L499.7,119.6 L500.7,121.2 L501.7,122.8 L502.7,124.4 L503.7,126.0 L504.7,127.8 L505.7,129.5 L506.7,131.4 L507.7,133.2 L508.7,135.1 L509.7,137.0 L510.7,139.0 L511.7,140.9 L512.7,142.8 L513.6,144.8 L514.6,146.8 L515.6,148.8 L516.6,150.8 L517.6,152.9 L518.6,155.0 L519.6,157.2 L520.6,159.4 L521.6,161.7 L522.6,163.9 L523.6,166.1 L524.6,168.3 L525.6,170.5 L526.6,172.8 L527.6,175.0 L528.6,177.2 L529.6,179.5 L530.6,181.7 L531.6,184.0 L532.6,186.2 L533.6,188.5 L534.6,190.7 L535.6,193.0 L536.6,195.2 L537.6,197.5 L538.6,199.7 L539.6,202.0 L540.6,204.2 L541.6,206.5 L542.6,208.8 L543.6,211.1 L544.6,213.3 L545.6,215.6 L546.5,217.7 L547.5,219.9 L548.4,222.0 L549.4,224.1 L550.4,226.1 L551.3,228.0 L552.3,229.8 L553.3,231.6 L554.3,233.4 L555.3,235.2 L556.3,236.9 L557.4,238.6 L558.4,240.2 L559.4,241.8 L560.4,243.4 L561.4,245.0 L562.4,246.5 L563.5,248.1 L564.5,249.5 L565.5,251.0 L566.5,252.4 L567.5,253.8 L568.6,255.2 L569.6,256.6 L570.5,257.9 L571.4,259.2 L572.3,260.5 L573.3,261.8 L574.2,263.1 L575.1,264.4 L576.0,265.6 L577.0,266.8 L577.9,268.0 L578.8,269.2 L579.7,270.4 L580.7,271.6 L581.6,272.7 L582.5,273.9 L583.4,275.1 L584.4,276.3 L585.3,277.5 L586.2,278.6 L587.1,279.7 L588.0,280.8 L589.0,281.9 L589.9,282.9 L590.9,283.9 L591.8,285.0 L592.8,286.0 L593.7,287.1 L594.7,288.1 L595.6,289.1 L596.6,290.2 L597.6,291.2 L598.5,292.3 L599.5,293.3 L600.4,294.4 L601.4,295.4 L602.3,296.4 L603.3,297.5 L604.3,298.5 L605.3,299.5 L606.3,300.5 L607.4,301.5 L608.4,302.5 L609.4,303.5 L610.4,304.6 L611.5,305.6 L612.5,306.6 L613.5,307.7 L614.5,308.7 L615.6,309.7 L616.6,310.7 L617.6,311.7 L618.6,312.7 L619.6,313.7 L620.7,314.7 L621.7,315.6 L622.7,316.6 L623.7,317.6 L624.8,318.5 L625.8,319.4 L626.8,320.4 L627.8,321.3 L628.9,322.2 L629.9,323.1 L630.9,323.9 L631.9,324.8 L632.9,325.6 L634.0,326.4 L635.1,327.2 L636.2,327.9 L637.3,328.6 L638.4,329.1 L639.5,329.7 L640.6,330.2 L641.7,330.8 L642.8,331.3 L643.9,331.7 L645.0,332.2 L646.1,332.6 L647.2,333.0 L648.3,333.4 L649.4,333.7 L650.5,334.1 L651.6,334.4 L652.7,334.7 L653.8,335.0 L654.9,335.3 L656.0,335.6 L657.1,335.8 L658.2,336.0 L659.3,336.3 L660.4,336.5 L661.5,336.7 L662.5,336.9 L663.5,337.1 L664.6,337.2 L665.6,337.4 L666.6,337.5 L667.6,337.6 L668.7,337.7 L669.7,337.8 L670.7,337.9 L671.7,338.0 L672.8,338.0 L673.8,338.1 L674.8,338.2 L675.8,338.3 L676.9,338.3 L677.9,338.4 L678.9,338.5 L680.0,338.5 L681.0,338.6 L682.0,338.6 L683.0,338.7 L684.1,338.7 L685.1,338.8 L686.1,338.8 L687.1,338.9 L688.2,338.9 L689.2,339.0 L690.2,339.0 L691.3,339.0 L692.3,339.1 L693.3,339.1 L694.3,339.1 L695.4,339.2 L696.4,339.2 L697.4,339.2 L698.4,339.2 L699.5,339.2" stroke="#0000ff" stroke-width="3.4"/>
<path d="M395.0,91.9 L396.0,91.8 L396.9,91.7 L397.9,91.7 L398.9,91.6 L399.9,91.5 L400.9,91.5 L401.9,91.4 L402.8,91.3 L403.8,91.3 L404.8,91.2 L405.8,91.1 L406.8,91.1 L407.8,91.0 L408.8,91.0 L409.7,90.9 L410.7,90.8 L411.7,90.8 L412.7,90.7 L413.7,90.6 L414.7,90.6 L415.6,90.5 L416.6,90.4 L417.6,90.4 L418.6,90.3 L419.6,90.2 L420.6,90.1 L421.6,90.0 L422.5,89.9 L423.5,89.8 L424.5,89.8 L425.5,89.7 L426.5,89.6 L427.5,89.5 L428.4,89.4 L429.4,89.3 L430.4,89.2 L431.4,89.2 L432.4,89.1 L433.4,89.1 L434.3,89.0 L435.3,89.0 L436.3,89.0 L437.3,89.0 L438.3,89.0 L439.3,89.0 L440.3,89.0 L441.2,89.0 L442.2,89.0 L443.2,89.0 L444.2,89.0 L445.2,89.0 L446.2,89.0 L447.1,89.0 L448.1,89.0 L449.1,89.0 L450.1,89.0 L451.1,89.0 L452.1,89.1 L453.1,89.1 L454.0,89.2 L455.0,89.3 L456.0,89.5 L457.0,89.6 L458.0,89.8 L459.0,89.9 L459.9,90.1 L460.9,90.3 L461.9,90.5 L462.9,90.6 L463.9,90.8 L464.9,91.0 L465.9,91.3 L466.8,91.5 L467.8,91.8 L468.8,92.1 L469.8,92.4 L470.8,92.8 L471.8,93.1 L472.8,93.5 L473.8,93.9 L474.8,94.3 L475.8,94.7 L476.8,95.2 L477.8,95.6 L478.8,96.1 L479.8,96.7 L480.8,97.3 L481.8,98.0 L482.8,98.7 L483.8,99.4 L484.8,100.2 L485.8,101.0 L486.8,101.9 L487.8,102.8 L488.8,103.8 L489.8,104.9 L490.8,105.9 L491.8,107.1 L492.8,108.3 L493.8,109.6 L494.8,110.9 L495.8,112.3 L496.8,113.8 L497.8,115.2 L498.8,116.7 L499.8,118.1 L500.8,119.6 L501.8,121.2 L502.8,122.8 L503.8,124.4 L504.8,126.0 L505.8,127.8 L506.8,129.5 L507.8,131.4 L508.8,133.2 L509.8,135.1 L510.8,137.0 L511.8,139.0 L512.8,140.9 L513.8,142.8 L514.8,144.8 L515.8,146.8 L516.8,148.8 L517.8,150.8 L518.8,152.9 L519.8,155.0 L520.7,157.2 L521.7,159.4 L522.7,161.7 L523.7,163.9 L524.7,166.1 L525.7,168.3 L526.7,170.5 L527.7,172.8 L528.7,175.0 L529.7,177.2 L530.7,179.5 L531.7,181.7 L532.7,184.0 L533.7,186.2 L534.6,188.5 L535.6,190.7 L536.6,193.0 L537.6,195.2 L538.6,197.5 L539.6,199.7 L540.6,202.0 L541.6,204.2 L542.6,206.5 L543.6,208.8 L544.6,211.1 L545.6,213.3 L546.6,215.6 L547.5,217.7 L548.5,219.9 L549.4,222.0 L550.3,224.1 L551.3,226.1 L552.2,228.0 L553.2,229.8 L554.2,231.6 L555.2,233.4 L556.2,235.2 L557.2,236.9 L558.2,238.6 L559.2,240.2 L560.3,241.8 L561.3,243.4 L562.3,245.0 L563.3,246.5 L564.3,248.1 L565.3,249.5 L566.3,251.0 L567.4,252.4 L568.4,253.8 L569.4,255.2 L570.4,256.6 L571.3,257.9 L572.3,259.2 L573.2,260.5 L574.1,261.8 L575.0,263.1 L576.0,264.4 L576.9,265.6 L577.8,266.8 L578.8,268.0 L579.7,269.2 L580.6,270.4 L581.5,271.6 L582.5,272.7 L583.4,273.9 L584.3,275.1 L585.3,276.3 L586.2,277.5 L587.1,278.6 L588.0,279.7 L589.0,280.8 L589.9,281.9 L590.9,282.9 L591.8,283.9 L592.8,285.0 L593.7,286.0 L594.7,287.1 L595.6,288.1 L596.6,289.1 L597.6,290.2 L598.5,291.2 L599.5,292.3 L600.4,293.3 L601.4,294.4 L602.3,295.4 L603.3,296.4 L604.3,297.5 L605.3,298.5 L606.3,299.5 L607.3,300.5 L608.3,301.5 L609.4,302.5 L610.4,303.5 L611.4,304.6 L612.4,305.6 L613.4,306.6 L614.5,307.7 L615.5,308.7 L616.5,309.7 L617.5,310.7 L618.5,311.7 L619.6,312.7 L620.6,313.7 L621.6,314.7 L622.6,315.6 L623.6,316.6 L624.7,317.6 L625.7,318.5 L626.7,319.4 L627.7,320.4 L628.7,321.3 L629.8,322.2 L630.8,323.1 L631.8,323.9 L632.8,324.8 L633.8,325.6 L634.9,326.4 L636.0,327.2 L637.0,327.9 L638.1,328.6 L639.2,329.1 L640.3,329.7 L641.4,330.2 L642.5,330.8 L643.6,331.3 L644.7,331.7 L645.7,332.2 L646.8,332.6 L647.9,333.0 L649.0,333.4 L650.1,333.7 L651.2,334.1 L652.3,334.4 L653.4,334.7 L654.4,335.0 L655.5,335.3 L656.6,335.6 L657.7,335.8 L658.8,336.0 L659.9,336.3 L661.0,336.5 L662.1,336.7 L663.1,336.9 L664.1,337.1 L665.1,337.2 L666.2,337.4 L667.2,337.5 L668.2,337.6 L669.2,337.7 L670.3,337.8 L671.3,337.9 L672.3,338.0 L673.3,338.0 L674.4,338.1 L675.4,338.2 L676.4,338.3 L677.4,338.3 L678.4,338.4 L679.5,338.5 L680.5,338.5 L681.5,338.6 L682.5,338.6 L683.6,338.7 L684.6,338.7 L685.6,338.8 L686.6,338.8 L687.7,338.9 L688.7,338.9 L689.7,339.0 L690.7,339.0 L691.8,339.0 L692.8,339.1 L693.8,339.1 L694.8,339.1 L695.9,339.2 L696.9,339.2 L697.9,339.2 L698.9,339.2 L700.0,339.2" stroke="#0000ff" stroke-width="3.4"/>
<path d="M395.5,91.9 L396.5,91.8 L397.5,91.7 L398.5,91.7 L399.4,91.6 L400.4,91.5 L401.4,91.5 L402.4,91.4 L403.4,91.3 L404.4,91.3 L405.4,91.2 L406.4,91.1 L407.4,91.1 L408.4,91.0 L409.4,91.0 L410.4,90.9 L411.4,90.8 L412.4,90.8 L413.4,90.7 L414.3,90.6 L415.3,90.6 L416.3,90.5 L417.3,90.4 L418.3,90.4 L419.3,90.3 L420.3,90.2 L421.3,90.1 L422.3,90.0 L423.3,89.9 L424.3,89.8 L425.3,89.8 L426.3,89.7 L427.3,89.6 L428.3,89.5 L429.3,89.4 L430.2,89.3 L431.2,89.2 L432.2,89.2 L433.2,89.1 L434.2,89.1 L435.2,89.0 L436.2,89.0 L437.2,89.0 L438.2,89.0 L439.2,89.0 L440.2,89.0 L441.2,89.0 L442.2,89.0 L443.2,89.0 L444.2,89.0 L445.2,89.0 L446.1,89.0 L447.1,89.0 L448.1,89.0 L449.1,89.0 L450.1,89.0 L451.1,89.0 L452.1,89.0 L453.1,89.1 L454.1,89.1 L455.1,89.2 L456.1,89.3 L457.1,89.5 L458.1,89.6 L459.1,89.8 L460.1,89.9 L461.0,90.1 L462.0,90.3 L463.0,90.5 L464.0,90.6 L465.0,90.8 L466.0,91.0 L467.0,91.3 L468.0,91.5 L469.0,91.8 L470.0,92.1 L471.0,92.4 L472.0,92.8 L473.0,93.1 L474.0,93.5 L475.0,93.9 L476.0,94.3 L477.0,94.7 L478.0,95.2 L479.0,95.6 L480.0,96.1 L481.0,96.7 L482.0,97.3 L483.0,98.0 L484.0,98.7 L485.0,99.4 L486.0,100.2 L487.0,101.0 L488.0,101.9 L489.0,102.8 L490.0,103.8 L491.0,104.9 L492.0,105.9 L493.0,107.1 L494.0,108.3 L495.0,109.6 L496.0,110.9 L497.0,112.3 L498.0,113.8 L499.0,115.2 L500.0,116.7 L501.0,118.1 L502.0,119.6 L503.0,121.2 L504.0,122.8 L505.0,124.4 L506.0,126.0 L507.0,127.8 L508.0,129.5 L509.0,131.4 L510.0,133.2 L511.0,135.1 L512.0,137.0 L512.9,139.0 L513.9,140.9 L514.9,142.8 L515.9,144.8 L516.9,146.8 L517.9,148.8 L518.9,150.8 L519.9,152.9 L520.9,155.0 L521.9,157.2 L522.8,159.4 L523.8,161.7 L524.8,163.9 L525.8,166.1 L526.8,168.3 L527.8,170.5 L528.8,172.8 L529.8,175.0 L530.8,177.2 L531.7,179.5 L532.7,181.7 L533.7,184.0 L534.7,186.2 L535.7,188.5 L536.7,190.7 L537.7,193.0 L538.7,195.2 L539.7,197.5 L540.6,199.7 L541.6,202.0 L542.6,204.2 L543.6,206.5 L544.6,208.8 L545.6,211.1 L546.6,213.3 L547.6,215.6 L548.5,217.7 L549.4,219.9 L550.3,222.0 L551.3,224.1 L552.2,226.1 L553.1,228.0 L554.0,229.8 L555.0,231.6 L556.1,233.4 L557.1,235.2 L558.1,236.9 L559.1,238.6 L560.1,240.2 L561.1,241.8 L562.1,243.4 L563.1,245.0 L564.2,246.5 L565.2,248.1 L566.2,249.5 L567.2,251.0 L568.2,252.4 L569.2,253.8 L570.2,255.2 L571.2,256.6 L572.2,257.9 L573.1,259.2 L574.0,260.5 L575.0,261.8 L575.9,263.1 L576.8,264.4 L577.8,265.6 L578.7,266.8 L579.6,268.0 L580.6,269.2 L581.5,270.4 L582.4,271.6 L583.4,272.7 L584.3,273.9 L585.2,275.1 L586.2,276.3 L587.1,277.5 L588.0,278.6 L589.0,279.7 L589.9,280.8 L590.8,281.9 L591.8,282.9 L592.8,283.9 L593.7,285.0 L594.7,286.0 L595.6,287.1 L596.6,288.1 L597.6,289.1 L598.5,290.2 L599.5,291.2 L600.4,292.3 L601.4,293.3 L602.4,294.4 L603.3,295.4 L604.3,296.4 L605.2,297.5 L606.3,298.5 L607.3,299.5 L608.3,300.5 L609.3,301.5 L610.3,302.5 L611.3,303.5 L612.4,304.6 L613.4,305.6 L614.4,306.6 L615.4,307.7 L616.4,308.7 L617.5,309.7 L618.5,310.7 L619.5,311.7 L620.5,312.7 L621.5,313.7 L622.5,314.7 L623.6,315.6 L624.6,316.6 L625.6,317.6 L626.6,318.5 L627.6,319.4 L628.6,320.4 L629.7,321.3 L630.7,322.2 L631.7,323.1 L632.7,323.9 L633.7,324.8 L634.8,325.6 L635.8,326.4 L636.8,327.2 L637.9,327.9 L639.0,328.6 L640.1,329.1 L641.1,329.7 L642.2,330.2 L643.3,330.8 L644.4,331.3 L645.4,331.7 L646.5,332.2 L647.6,332.6 L648.7,333.0 L649.7,333.4 L650.8,333.7 L651.9,334.1 L653.0,334.4 L654.0,334.7 L655.1,335.0 L656.2,335.3 L657.3,335.6 L658.3,335.8 L659.4,336.0 L660.5,336.3 L661.6,336.5 L662.6,336.7 L663.7,336.9 L664.7,337.1 L665.7,337.2 L666.7,337.4 L667.7,337.5 L668.8,337.6 L669.8,337.7 L670.8,337.8 L671.8,337.9 L672.9,338.0 L673.9,338.0 L674.9,338.1 L675.9,338.2 L677.0,338.3 L678.0,338.3 L679.0,338.4 L680.0,338.5 L681.0,338.5 L682.1,338.6 L683.1,338.6 L684.1,338.7 L685.1,338.7 L686.2,338.8 L687.2,338.8 L688.2,338.9 L689.2,338.9 L690.2,339.0 L691.3,339.0 L692.3,339.0 L693.3,339.1 L694.3,339.1 L695.4,339.1 L696.4,339.2 L697.4,339.2 L698.4,339.2 L699.4,339.2 L700.5,339.2" stroke="#0000ff" stroke-width="3.4"/>
<path d="M396.0,91.9 L397.0,91.8 L398.0,91.7 L399.0,91.7 L400.0,91.6 L401.0,91.5 L402.0,91.5 L403.0,91.4 L404.0,91.3 L405.0,91.3 L406.0,91.2 L407.0,91.1 L408.0,91.1 L409.0,91.0 L410.0,91.0 L411.0,90.9 L412.0,90.8 L413.0,90.8 L414.0,90.7 L415.0,90.6 L416.0,90.6 L417.0,90.5 L418.0,90.4 L419.0,90.4 L420.0,90.3 L421.0,90.2 L422.0,90.1 L423.0,90.0 L424.0,89.9 L425.0,89.8 L426.1,89.8 L427.1,89.7 L428.1,89.6 L429.1,89.5 L430.1,89.4 L431.1,89.3 L432.1,89.2 L433.1,89.2 L434.1,89.1 L435.1,89.1 L436.1,89.0 L437.1,89.0 L438.1,89.0 L439.1,89.0 L440.1,89.0 L441.1,89.0 L442.1,89.0 L443.1,89.0 L444.1,89.0 L445.1,89.0 L446.1,89.0 L447.1,89.0 L448.1,89.0 L449.1,89.0 L450.1,89.0 L451.1,89.0 L452.1,89.0 L453.1,89.0 L454.1,89.1 L455.1,89.1 L456.1,89.2 L457.1,89.3 L458.1,89.5 L459.1,89.6 L460.1,89.8 L461.1,89.9 L462.2,90.1 L463.2,90.3 L464.2,90.5 L465.2,90.6 L466.2,90.8 L467.2,91.0 L468.2,91.3 L469.2,91.5 L470.2,91.8 L471.2,92.1 L472.2,92.4 L473.2,92.8 L474.2,93.1 L475.2,93.5 L476.2,93.9 L477.2,94.3 L478.2,94.7 L479.2,95.2 L480.2,95.6 L481.2,96.1 L482.2,96.7 L483.2,97.3 L484.2,98.0 L485.2,98.7 L486.2,99.4 L487.2,100.2 L488.2,101.0 L489.2,101.9 L490.2,102.8 L491.2,103.8 L492.2,104.9 L493.2,105.9 L494.2,107.1 L495.2,108.3 L496.2,109.6 L497.2,110.9 L498.2,112.3 L499.2,113.8 L500.2,115.2 L501.2,116.7 L502.2,118.1 L503.2,119.6 L504.2,121.2 L505.2,122.8 L506.2,124.4 L507.2,126.0 L508.2,127.8 L509.2,129.5 L510.2,131.4 L511.1,133.2 L512.1,135.1 L513.1,137.0 L514.1,139.0 L515.1,140.9 L516.1,142.8 L517.1,144.8 L518.0,146.8 L519.0,148.8 L520.0,150.8 L521.0,152.9 L522.0,155.0 L523.0,157.2 L523.9,159.4 L524.9,161.7 L525.9,163.9 L526.9,166.1 L527.9,168.3 L528.9,170.5 L529.9,172.8 L530.8,175.0 L531.8,177.2 L532.8,179.5 L533.8,181.7 L534.8,184.0 L535.8,186.2 L536.8,188.5 L537.7,190.7 L538.7,193.0 L539.7,195.2 L540.7,197.5 L541.7,199.7 L542.7,202.0 L543.6,204.2 L544.6,206.5 L545.6,208.8 L546.6,211.1 L547.6,213.3 L548.6,215.6 L549.5,217.7 L550.4,219.9 L551.3,222.0 L552.2,224.1 L553.1,226.1 L554.0,228.0 L554.9,229.8 L555.9,231.6 L556.9,233.4 L557.9,235.2 L559.0,236.9 L560.0,238.6 L561.0,240.2 L562.0,241.8 L563.0,243.4 L564.0,245.0 L565.0,246.5 L566.0,248.1 L567.0,249.5 L568.0,251.0 L569.0,252.4 L570.1,253.8 L571.1,255.2 L572.1,256.6 L573.0,257.9 L573.9,259.2 L574.9,260.5 L575.8,261.8 L576.8,263.1 L577.7,264.4 L578.6,265.6 L579.6,266.8 L580.5,268.0 L581.5,269.2 L582.4,270.4 L583.3,271.6 L584.3,272.7 L585.2,273.9 L586.1,275.1 L587.1,276.3 L588.0,277.5 L589.0,278.6 L589.9,279.7 L590.8,280.8 L591.8,281.9 L592.7,282.9 L593.7,283.9 L594.7,285.0 L595.6,286.0 L596.6,287.1 L597.6,288.1 L598.5,289.1 L599.5,290.2 L600.4,291.2 L601.4,292.3 L602.4,293.3 L603.3,294.4 L604.3,295.4 L605.3,296.4 L606.2,297.5 L607.2,298.5 L608.2,299.5 L609.3,300.5 L610.3,301.5 L611.3,302.5 L612.3,303.5 L613.3,304.6 L614.3,305.6 L615.4,306.6 L616.4,307.7 L617.4,308.7 L618.4,309.7 L619.4,310.7 L620.4,311.7 L621.4,312.7 L622.5,313.7 L623.5,314.7 L624.5,315.6 L625.5,316.6 L626.5,317.6 L627.5,318.5 L628.6,319.4 L629.6,320.4 L630.6,321.3 L631.6,322.2 L632.6,323.1 L633.6,323.9 L634.6,324.8 L635.7,325.6 L636.7,326.4 L637.7,327.2 L638.8,327.9 L639.9,328.6 L640.9,329.1 L642.0,329.7 L643.0,330.2 L644.1,330.8 L645.2,331.3 L646.2,331.7 L647.3,332.2 L648.4,332.6 L649.4,333.0 L650.5,333.4 L651.5,333.7 L652.6,334.1 L653.7,334.4 L654.7,334.7 L655.8,335.0 L656.8,335.3 L657.9,335.6 L659.0,335.8 L660.0,336.0 L661.1,336.3 L662.2,336.5 L663.2,336.7 L664.2,336.9 L665.3,337.1 L666.3,337.2 L667.3,337.4 L668.3,337.5 L669.3,337.6 L670.4,337.7 L671.4,337.8 L672.4,337.9 L673.4,338.0 L674.4,338.0 L675.5,338.1 L676.5,338.2 L677.5,338.3 L678.5,338.3 L679.5,338.4 L680.6,338.5 L681.6,338.5 L682.6,338.6 L683.6,338.6 L684.6,338.7 L685.7,338.7 L686.7,338.8 L687.7,338.8 L688.7,338.9 L689.7,338.9 L690.8,339.0 L691.8,339.0 L692.8,339.0 L693.8,339.1 L694.8,339.1 L695.9,339.1 L696.9,339.2 L697.9,339.2 L698.9,339.2 L699.9,339.2 L701.0,339.2" stroke="#0000ff" stroke-width="3.4"/>
<path d="M396.5,91.9 L397.5,91.8 L398.5,91.7 L399.5,91.7 L400.5,91.6 L401.5,91.5 L402.5,91.5 L403.6,91.4 L404.6,91.3 L405.6,91.3 L406.6,91.2 L407.6,91.1 L408.6,91.1 L409.6,91.0 L410.6,91.0 L411.6,90.9 L412.7,90.8 L413.7,90.8 L414.7,90.7 L415.7,90.6 L416.7,90.6 L417.7,90.5 L418.7,90.4 L419.7,90.4 L420.8,90.3 L421.8,90.2 L422.8,90.1 L423.8,90.0 L424.8,89.9 L425.8,89.8 L426.8,89.8 L427.8,89.7 L428.8,89.6 L429.9,89.5 L430.9,89.4 L431.9,89.3 L432.9,89.2 L433.9,89.2 L434.9,89.1 L435.9,89.1 L436.9,89.0 L438.0,89.0 L439.0,89.0 L440.0,89.0 L441.0,89.0 L442.0,89.0 L443.0,89.0 L444.0,89.0 L445.0,89.0 L446.1,89.0 L447.1,89.0 L448.1,89.0 L449.1,89.0 L450.1,89.0 L451.1,89.0 L452.1,89.0 L453.1,89.0 L454.1,89.0 L455.2,89.1 L456.2,89.1 L457.2,89.2 L458.2,89.3 L459.2,89.5 L460.2,89.6 L461.2,89.8 L462.2,89.9 L463.3,90.1 L464.3,90.3 L465.3,90.5 L466.3,90.6 L467.3,90.8 L468.3,91.0 L469.3,91.3 L470.3,91.5 L471.3,91.8 L472.3,92.1 L473.3,92.4 L474.3,92.8 L475.3,93.1 L476.3,93.5 L477.3,93.9 L478.3,94.3 L479.3,94.7 L480.3,95.2 L481.3,95.6 L482.3,96.1 L483.3,96.7 L484.3,97.3 L485.3,98.0 L486.3,98.7 L487.3,99.4 L488.3,100.2 L489.3,101.0 L490.3,101.9 L491.3,102.8 L492.3,103.8 L493.3,104.9 L494.3,105.9 L495.3,107.1 L496.3,108.3 L497.3,109.6 L498.3,110.9 L499.3,112.3 L500.3,113.8 L501.3,115.2 L502.3,116.7 L503.3,118.1 L504.3,119.6 L505.3,121.2 L506.3,122.8 L507.3,124.4 L508.3,126.0 L509.3,127.8 L510.3,129.5 L511.3,131.4 L512.3,133.2 L513.3,135.1 L514.3,137.0 L515.2,139.0 L516.2,140.9 L517.2,142.8 L518.2,144.8 L519.2,146.8 L520.1,148.8 L521.1,150.8 L522.1,152.9 L523.1,155.0 L524.1,157.2 L525.0,159.4 L526.0,161.7 L527.0,163.9 L528.0,166.1 L529.0,168.3 L530.0,170.5 L530.9,172.8 L531.9,175.0 L532.9,177.2 L533.9,179.5 L534.9,181.7 L535.8,184.0 L536.8,186.2 L537.8,188.5 L538.8,190.7 L539.8,193.0 L540.7,195.2 L541.7,197.5 L542.7,199.7 L543.7,202.0 L544.7,204.2 L545.6,206.5 L546.6,208.8 L547.6,211.1 L548.6,213.3 L549.6,215.6 L550.5,217.7 L551.4,219.9 L552.2,222.0 L553.1,224.1 L554.0,226.1 L554.9,228.0 L555.8,229.8 L556.8,231.6 L557.8,233.4 L558.8,235.2 L559.8,236.9 L560.8,238.6 L561.8,240.2 L562.8,241.8 L563.9,243.4 L564.9,245.0 L565.9,246.5 L566.9,248.1 L567.9,249.5 L568.9,251.0 L569.9,252.4 L570.9,253.8 L571.9,255.2 L572.9,256.6 L573.8,257.9 L574.8,259.2 L575.7,260.5 L576.7,261.8 L577.6,263.1 L578.6,264.4 L579.5,265.6 L580.4,266.8 L581.4,268.0 L582.3,269.2 L583.3,270.4 L584.2,271.6 L585.2,272.7 L586.1,273.9 L587.0,275.1 L588.0,276.3 L588.9,277.5 L589.9,278.6 L590.8,279.7 L591.8,280.8 L592.7,281.9 L593.7,282.9 L594.6,283.9 L595.6,285.0 L596.6,286.0 L597.5,287.1 L598.5,288.1 L599.5,289.1 L600.4,290.2 L601.4,291.2 L602.4,292.3 L603.3,293.3 L604.3,294.4 L605.3,295.4 L606.2,296.4 L607.2,297.5 L608.2,298.5 L609.2,299.5 L610.2,300.5 L611.3,301.5 L612.3,302.5 L613.3,303.5 L614.3,304.6 L615.3,305.6 L616.3,306.6 L617.3,307.7 L618.3,308.7 L619.4,309.7 L620.4,310.7 L621.4,311.7 L622.4,312.7 L623.4,313.7 L624.4,314.7 L625.4,315.6 L626.4,316.6 L627.4,317.6 L628.5,318.5 L629.5,319.4 L630.5,320.4 L631.5,321.3 L632.5,322.2 L633.5,323.1 L634.5,323.9 L635.5,324.8 L636.6,325.6 L637.6,326.4 L638.6,327.2 L639.7,327.9 L640.7,328.6 L641.8,329.1 L642.8,329.7 L643.9,330.2 L644.9,330.8 L646.0,331.3 L647.0,331.7 L648.1,332.2 L649.1,332.6 L650.2,333.0 L651.2,333.4 L652.3,333.7 L653.3,334.1 L654.4,334.4 L655.4,334.7 L656.5,335.0 L657.5,335.3 L658.6,335.6 L659.6,335.8 L660.7,336.0 L661.7,336.3 L662.8,336.5 L663.8,336.7 L664.8,336.9 L665.8,337.1 L666.9,337.2 L667.9,337.4 L668.9,337.5 L669.9,337.6 L670.9,337.7 L671.9,337.8 L673.0,337.9 L674.0,338.0 L675.0,338.0 L676.0,338.1 L677.0,338.2 L678.1,338.3 L679.1,338.3 L680.1,338.4 L681.1,338.5 L682.1,338.5 L683.1,338.6 L684.2,338.6 L685.2,338.7 L686.2,338.7 L687.2,338.8 L688.2,338.8 L689.3,338.9 L690.3,338.9 L691.3,339.0 L692.3,339.0 L693.3,339.0 L694.3,339.1 L695.4,339.1 L696.4,339.1 L697.4,339.2 L698.4,339.2 L699.4,339.2 L700.5,339.2 L701.5,339.2" stroke="#0000ff" stroke-width="3.4"/>
<path d="M397.0,91.9 L398.0,91.8 L399.0,91.7 L400.0,91.7 L401.1,91.6 L402.1,91.5 L403.1,91.5 L404.1,91.4 L405.1,91.3 L406.2,91.3 L407.2,91.2 L408.2,91.1 L409.2,91.1 L410.2,91.0 L411.3,91.0 L412.3,90.9 L413.3,90.8 L414.3,90.8 L415.3,90.7 L416.4,90.6 L417.4,90.6 L418.4,90.5 L419.4,90.4 L420.5,90.4 L421.5,90.3 L422.5,90.2 L423.5,90.1 L424.5,90.0 L425.6,89.9 L426.6,89.8 L427.6,89.8 L428.6,89.7 L429.6,89.6 L430.7,89.5 L431.7,89.4 L432.7,89.3 L433.7,89.2 L434.7,89.2 L435.8,89.1 L436.8,89.1 L437.8,89.0 L438.8,89.0 L439.9,89.0 L440.9,89.0 L441.9,89.0 L442.9,89.0 L443.9,89.0 L445.0,89.0 L446.0,89.0 L447.0,89.0 L448.0,89.0 L449.0,89.0 L450.1,89.0 L451.1,89.0 L452.1,89.0 L453.1,89.0 L454.1,89.0 L455.2,89.0 L456.2,89.1 L457.2,89.1 L458.2,89.2 L459.3,89.3 L460.3,89.5 L461.3,89.6 L462.3,89.8 L463.3,89.9 L464.4,90.1 L465.4,90.3 L466.4,90.5 L467.4,90.6 L468.4,90.8 L469.5,91.0 L470.5,91.3 L471.5,91.5 L472.5,91.8 L473.5,92.1 L474.5,92.4 L475.5,92.8 L476.5,93.1 L477.5,93.5 L478.5,93.9 L479.5,94.3 L480.5,94.7 L481.5,95.2 L482.5,95.6 L483.5,96.1 L484.5,96.7 L485.5,97.3 L486.5,98.0 L487.5,98.7 L488.5,99.4 L489.5,100.2 L490.5,101.0 L491.5,101.9 L492.5,102.8 L493.5,103.8 L494.5,104.9 L495.5,105.9 L496.5,107.1 L497.5,108.3 L498.5,109.6 L499.5,110.9 L500.5,112.3 L501.5,113.8 L502.5,115.2 L503.5,116.7 L504.5,118.1 L505.5,119.6 L506.5,121.2 L507.5,122.8 L508.5,124.4 L509.5,126.0 L510.5,127.8 L511.5,129.5 L512.5,131.4 L513.5,133.2 L514.4,135.1 L515.4,137.0 L516.4,139.0 L517.4,140.9 L518.3,142.8 L519.3,144.8 L520.3,146.8 L521.3,148.8 L522.2,150.8 L523.2,152.9 L524.2,155.0 L525.2,157.2 L526.2,159.4 L527.1,161.7 L528.1,163.9 L529.1,166.1 L530.1,168.3 L531.0,170.5 L532.0,172.8 L533.0,175.0 L534.0,177.2 L534.9,179.5 L535.9,181.7 L536.9,184.0 L537.9,186.2 L538.9,188.5 L539.8,190.7 L540.8,193.0 L541.8,195.2 L542.8,197.5 L543.7,199.7 L544.7,202.0 L545.7,204.2 L546.7,206.5 L547.6,208.8 L548.6,211.1 L549.6,213.3 L550.6,215.6 L551.4,217.7 L552.3,219.9 L553.2,222.0 L554.1,224.1 L554.9,226.1 L555.8,228.0 L556.7,229.8 L557.7,231.6 L558.7,233.4 L559.7,235.2 L560.7,236.9 L561.7,238.6 L562.7,240.2 L563.7,241.8 L564.7,243.4 L565.7,245.0 L566.7,246.5 L567.7,248.1 L568.7,249.5 L569.7,251.0 L570.7,252.4 L571.7,253.8 L572.7,255.2 L573.7,256.6 L574.7,257.9 L575.6,259.2 L576.6,260.5 L577.5,261.8 L578.5,263.1 L579.4,264.4 L580.4,265.6 L581.3,266.8 L582.3,268.0 L583.2,269.2 L584.2,270.4 L585.1,271.6 L586.1,272.7 L587.0,273.9 L588.0,275.1 L588.9,276.3 L589.8,277.5 L590.8,278.6 L591.7,279.7 L592.7,280.8 L593.6,281.9 L594.6,282.9 L595.6,283.9 L596.5,285.0 L597.5,286.0 L598.5,287.1 L599.5,288.1 L600.4,289.1 L601.4,290.2 L602.4,291.2 L603.3,292.3 L604.3,293.3 L605.3,294.4 L606.2,295.4 L607.2,296.4 L608.2,297.5 L609.2,298.5 L610.2,299.5 L611.2,300.5 L612.2,301.5 L613.2,302.5 L614.2,303.5 L615.3,304.6 L616.3,305.6 L617.3,306.6 L618.3,307.7 L619.3,308.7 L620.3,309.7 L621.3,310.7 L622.3,311.7 L623.3,312.7 L624.3,313.7 L625.3,314.7 L626.4,315.6 L627.4,316.6 L628.4,317.6 L629.4,318.5 L630.4,319.4 L631.4,320.4 L632.4,321.3 L633.4,322.2 L634.4,323.1 L635.4,323.9 L636.5,324.8 L637.5,325.6 L638.5,326.4 L639.5,327.2 L640.5,327.9 L641.6,328.6 L642.6,329.1 L643.7,329.7 L644.7,330.2 L645.7,330.8 L646.8,331.3 L647.8,331.7 L648.8,332.2 L649.9,332.6 L650.9,333.0 L651.9,333.4 L653.0,333.7 L654.0,334.1 L655.1,334.4 L656.1,334.7 L657.1,335.0 L658.2,335.3 L659.2,335.6 L660.2,335.8 L661.3,336.0 L662.3,336.3 L663.4,336.5 L664.4,336.7 L665.4,336.9 L666.4,337.1 L667.4,337.2 L668.4,337.4 L669.5,337.5 L670.5,337.6 L671.5,337.7 L672.5,337.8 L673.5,337.9 L674.5,338.0 L675.6,338.0 L676.6,338.1 L677.6,338.2 L678.6,338.3 L679.6,338.3 L680.6,338.4 L681.7,338.5 L682.7,338.5 L683.7,338.6 L684.7,338.6 L685.7,338.7 L686.7,338.7 L687.7,338.8 L688.8,338.8 L689.8,338.9 L690.8,338.9 L691.8,339.0 L692.8,339.0 L693.8,339.0 L694.9,339.1 L695.9,339.1 L696.9,339.1 L697.9,339.2 L698.9,339.2 L699.9,339.2 L701.0,339.2 L702.0,339.2" stroke="#0000ff" stroke-width="3.4"/>
<path d="M397.5,91.9 L398.5,91.8 L399.5,91.7 L400.6,91.7 L401.6,91.6 L402.6,91.5 L403.7,91.5 L404.7,91.4 L405.7,91.3 L406.7,91.3 L407.8,91.2 L408.8,91.1 L409.8,91.1 L410.9,91.0 L411.9,91.0 L412.9,90.9 L414.0,90.8 L415.0,90.8 L416.0,90.7 L417.0,90.6 L418.1,90.6 L419.1,90.5 L420.1,90.4 L421.2,90.4 L422.2,90.3 L423.2,90.2 L424.3,90.1 L425.3,90.0 L426.3,89.9 L427.3,89.8 L428.4,89.8 L429.4,89.7 L430.4,89.6 L431.5,89.5 L432.5,89.4 L433.5,89.3 L434.6,89.2 L435.6,89.2 L436.6,89.1 L437.6,89.1 L438.7,89.0 L439.7,89.0 L440.7,89.0 L441.8,89.0 L442.8,89.0 L443.8,89.0 L444.9,89.0 L445.9,89.0 L446.9,89.0 L447.9,89.0 L449.0,89.0 L450.0,89.0 L451.0,89.0 L452.1,89.0 L453.1,89.0 L454.1,89.0 L455.2,89.0 L456.2,89.0 L457.2,89.1 L458.2,89.1 L459.3,89.2 L460.3,89.3 L461.3,89.5 L462.4,89.6 L463.4,89.8 L464.4,89.9 L465.5,90.1 L466.5,90.3 L467.5,90.5 L468.5,90.6 L469.6,90.8 L470.6,91.0 L471.6,91.3 L472.7,91.5 L473.7,91.8 L474.7,92.1 L475.7,92.4 L476.7,92.8 L477.7,93.1 L478.7,93.5 L479.7,93.9 L480.7,94.3 L481.7,94.7 L482.7,95.2 L483.7,95.6 L484.7,96.1 L485.7,96.7 L486.7,97.3 L487.7,98.0 L488.7,98.7 L489.7,99.4 L490.7,100.2 L491.7,101.0 L492.7,101.9 L493.7,102.8 L494.7,103.8 L495.7,104.9 L496.7,105.9 L497.7,107.1 L498.7,108.3 L499.7,109.6 L500.7,110.9 L501.7,112.3 L502.7,113.8 L503.7,115.2 L504.7,116.7 L505.7,118.1 L506.7,119.6 L507.7,121.2 L508.7,122.8 L509.7,124.4 L510.7,126.0 L511.7,127.8 L512.7,129.5 L513.6,131.4 L514.6,133.2 L515.6,135.1 L516.6,137.0 L517.5,139.0 L518.5,140.9 L519.5,142.8 L520.5,144.8 L521.4,146.8 L522.4,148.8 L523.4,150.8 L524.3,152.9 L525.3,155.0 L526.3,157.2 L527.3,159.4 L528.2,161.7 L529.2,163.9 L530.2,166.1 L531.1,168.3 L532.1,170.5 L533.1,172.8 L534.1,175.0 L535.0,177.2 L536.0,179.5 L537.0,181.7 L538.0,184.0 L538.9,186.2 L539.9,188.5 L540.9,190.7 L541.8,193.0 L542.8,195.2 L543.8,197.5 L544.8,199.7 L545.7,202.0 L546.7,204.2 L547.7,206.5 L548.7,208.8 L549.6,211.1 L550.6,213.3 L551.6,215.6 L552.4,217.7 L553.3,219.9 L554.1,222.0 L555.0,224.1 L555.9,226.1 L556.7,228.0 L557.6,229.8 L558.6,231.6 L559.6,233.4 L560.6,235.2 L561.6,236.9 L562.6,238.6 L563.6,240.2 L564.6,241.8 L565.6,243.4 L566.6,245.0 L567.6,246.5 L568.6,248.1 L569.6,249.5 L570.6,251.0 L571.6,252.4 L572.6,253.8 L573.6,255.2 L574.6,256.6 L575.5,257.9 L576.5,259.2 L577.4,260.5 L578.4,261.8 L579.3,263.1 L580.3,264.4 L581.2,265.6 L582.2,266.8 L583.1,268.0 L584.1,269.2 L585.0,270.4 L586.0,271.6 L587.0,272.7 L587.9,273.9 L588.9,275.1 L589.8,276.3 L590.8,277.5 L591.7,278.6 L592.7,279.7 L593.6,280.8 L594.6,281.9 L595.5,282.9 L596.5,283.9 L597.5,285.0 L598.5,286.0 L599.4,287.1 L600.4,288.1 L601.4,289.1 L602.4,290.2 L603.3,291.2 L604.3,292.3 L605.3,293.3 L606.2,294.4 L607.2,295.4 L608.2,296.4 L609.2,297.5 L610.2,298.5 L611.2,299.5 L612.2,300.5 L613.2,301.5 L614.2,302.5 L615.2,303.5 L616.2,304.6 L617.2,305.6 L618.2,306.6 L619.2,307.7 L620.2,308.7 L621.2,309.7 L622.3,310.7 L623.3,311.7 L624.3,312.7 L625.3,313.7 L626.3,314.7 L627.3,315.6 L628.3,316.6 L629.3,317.6 L630.3,318.5 L631.3,319.4 L632.3,320.4 L633.3,321.3 L634.3,322.2 L635.3,323.1 L636.4,323.9 L637.4,324.8 L638.4,325.6 L639.4,326.4 L640.4,327.2 L641.4,327.9 L642.4,328.6 L643.5,329.1 L644.5,329.7 L645.5,330.2 L646.5,330.8 L647.6,331.3 L648.6,331.7 L649.6,332.2 L650.6,332.6 L651.7,333.0 L652.7,333.4 L653.7,333.7 L654.7,334.1 L655.8,334.4 L656.8,334.7 L657.8,335.0 L658.8,335.3 L659.9,335.6 L660.9,335.8 L661.9,336.0 L662.9,336.3 L663.9,336.5 L665.0,336.7 L666.0,336.9 L667.0,337.1 L668.0,337.2 L669.0,337.4 L670.0,337.5 L671.1,337.6 L672.1,337.7 L673.1,337.8 L674.1,337.9 L675.1,338.0 L676.1,338.0 L677.1,338.1 L678.1,338.2 L679.2,338.3 L680.2,338.3 L681.2,338.4 L682.2,338.5 L683.2,338.5 L684.2,338.6 L685.2,338.6 L686.3,338.7 L687.3,338.7 L688.3,338.8 L689.3,338.8 L690.3,338.9 L691.3,338.9 L692.3,339.0 L693.3,339.0 L694.4,339.0 L695.4,339.1 L696.4,339.1 L697.4,339.1 L698.4,339.2 L699.4,339.2 L700.4,339.2 L701.5,339.2 L702.5,339.2" stroke="#0000ff" stroke-width="3.4"/>
<path d="M397.5,339.2 L398.4,339.3 L399.4,339.4 L400.4,339.4 L401.3,339.5 L402.3,339.6 L403.2,339.6 L404.2,339.7 L405.2,339.8 L406.1,339.8 L407.1,339.9 L408.0,340.0 L409.0,340.0 L410.0,340.1 L410.9,340.1 L411.9,340.2 L412.8,340.3 L413.8,340.3 L414.8,340.4 L415.7,340.5 L416.7,340.5 L417.6,340.6 L418.6,340.7 L419.6,340.8 L420.5,340.8 L421.5,340.9 L422.4,341.0 L423.4,341.1 L424.4,341.2 L425.3,341.3 L426.3,341.3 L427.2,341.4 L428.2,341.5 L429.2,341.6 L430.1,341.7 L431.1,341.8 L432.0,341.9 L433.0,341.9 L434.0,342.0 L434.9,342.0 L435.9,342.1 L436.8,342.1 L437.8,342.1 L438.8,342.1 L439.7,342.1 L440.7,342.1 L441.6,342.1 L442.6,342.1 L443.6,342.1 L444.5,342.1 L445.5,342.1 L446.4,342.1 L447.4,342.1 L448.4,342.1 L449.3,342.1 L450.3,342.1 L451.2,342.1 L452.2,342.1 L453.2,342.0 L454.1,342.0 L455.1,341.9 L456.0,341.8 L457.0,341.6 L458.0,341.5 L458.9,341.3 L459.9,341.2 L460.8,341.0 L461.8,340.8 L462.8,340.6 L463.7,340.5 L464.7,340.3 L465.6,340.1 L466.6,339.8 L467.6,339.6 L468.6,339.3 L469.6,339.0 L470.6,338.7 L471.6,338.3 L472.6,338.0 L473.6,337.6 L474.6,337.2 L475.6,336.8 L476.6,336.4 L477.6,335.9 L478.6,335.5 L479.6,335.0 L480.6,334.4 L481.6,333.8 L482.6,333.1 L483.6,332.4 L484.6,331.7 L485.6,330.9 L486.6,330.1 L487.6,329.2 L488.6,328.3 L489.6,327.3 L490.6,326.2 L491.6,325.2 L492.6,324.0 L493.6,322.8 L494.6,321.5 L495.6,320.2 L496.6,318.8 L497.6,317.3 L498.6,315.9 L499.6,314.4 L500.6,313.0 L501.6,311.5 L502.6,309.9 L503.6,308.3 L504.6,306.7 L505.6,305.1 L506.6,303.3 L507.6,301.6 L508.6,299.7 L509.6,297.9 L510.6,296.0 L511.6,294.1 L512.6,292.1 L513.6,290.2 L514.6,288.3 L515.6,286.3 L516.6,284.3 L517.6,282.3 L518.6,280.3 L519.6,278.2 L520.6,276.1 L521.6,273.9 L522.6,271.7 L523.6,269.4 L524.6,267.2 L525.6,265.0 L526.6,262.8 L527.6,260.6 L528.6,258.3 L529.7,256.1 L530.7,253.9 L531.8,251.6 L532.8,249.4 L533.8,247.1 L534.9,244.9 L535.9,242.6 L537.0,240.4 L538.0,238.2 L539.1,235.9 L540.1,233.6 L541.2,231.4 L542.2,229.1 L543.2,226.9 L544.3,224.6 L545.3,222.3 L546.4,220.0 L547.4,217.8 L548.5,215.6 L549.5,213.3 L550.6,211.1 L551.6,208.9 L552.7,206.7 L553.8,204.6 L554.8,202.4 L555.9,200.3 L557.0,198.1 L558.0,196.1 L559.1,194.1 L560.1,192.1 L561.2,190.2 L562.2,188.3 L563.3,186.4 L564.4,184.6 L565.4,182.9 L566.4,181.2 L567.4,179.6 L568.4,178.0 L569.4,176.5 L570.4,175.0 L571.4,173.6 L572.4,172.1 L573.4,170.7 L574.4,169.3 L575.4,167.9 L576.4,166.5 L577.4,165.2 L578.4,163.9 L579.4,162.6 L580.4,161.3 L581.4,160.1 L582.4,158.8 L583.5,157.6 L584.5,156.4 L585.5,155.2 L586.5,154.1 L587.5,152.9 L588.5,151.7 L589.5,150.6 L590.5,149.4 L591.5,148.2 L592.5,147.1 L593.5,146.0 L594.5,144.8 L595.5,143.7 L596.5,142.6 L597.5,141.5 L598.5,140.4 L599.5,139.3 L600.5,138.2 L601.5,137.1 L602.5,136.0 L603.5,134.9 L604.5,133.8 L605.5,132.8 L606.6,131.7 L607.6,130.7 L608.6,129.6 L609.6,128.6 L610.6,127.5 L611.6,126.5 L612.6,125.5 L613.6,124.4 L614.6,123.4 L615.6,122.4 L616.6,121.4 L617.6,120.4 L618.6,119.4 L619.6,118.5 L620.6,117.5 L621.6,116.6 L622.6,115.7 L623.6,114.8 L624.6,114.0 L625.6,113.1 L626.6,112.3 L627.6,111.5 L628.7,110.7 L629.7,110.0 L630.7,109.2 L631.7,108.5 L632.7,107.8 L633.7,107.1 L634.7,106.4 L635.7,105.7 L636.7,105.1 L637.7,104.4 L638.7,103.8 L639.7,103.1 L640.7,102.5 L641.7,101.9 L642.7,101.4 L643.7,100.8 L644.7,100.2 L645.7,99.7 L646.7,99.2 L647.7,98.7 L648.7,98.2 L649.7,97.8 L650.7,97.4 L651.8,97.1 L652.8,96.8 L653.8,96.5 L654.8,96.2 L655.8,95.9 L656.8,95.7 L657.8,95.5 L658.8,95.3 L659.8,95.1 L660.8,94.9 L661.8,94.7 L662.8,94.5 L663.8,94.3 L664.8,94.2 L665.8,94.0 L666.8,93.9 L667.8,93.7 L668.8,93.6 L669.8,93.5 L670.8,93.4 L671.8,93.3 L672.8,93.3 L673.8,93.2 L674.9,93.1 L675.9,93.0 L676.9,92.9 L677.9,92.9 L678.9,92.8 L679.9,92.7 L680.9,92.7 L681.9,92.6 L682.9,92.6 L683.9,92.5 L684.9,92.5 L685.9,92.4 L686.9,92.4 L687.9,92.3 L688.9,92.3 L689.9,92.2 L690.9,92.2 L691.9,92.2 L692.9,92.1 L693.9,92.1 L694.9,92.0 L695.9,92.0 L696.9,92.0 L698.0,91.9 L699.0,91.9 L700.0,91.9 L701.0,91.9 L702.0,91.9" stroke="#0000ff" stroke-width="3.4"/>
<path d="M398.1,339.2 L399.0,339.3 L400.0,339.4 L401.0,339.4 L402.0,339.5 L403.0,339.6 L403.9,339.6 L404.9,339.7 L405.9,339.8 L406.9,339.8 L407.8,339.9 L408.8,340.0 L409.8,340.0 L410.8,340.1 L411.7,340.1 L412.7,340.2 L413.7,340.3 L414.7,340.3 L415.6,340.4 L416.6,340.5 L417.6,340.5 L418.6,340.6 L419.5,340.7 L420.5,340.8 L421.5,340.8 L422.5,340.9 L423.5,341.0 L424.4,341.1 L425.4,341.2 L426.4,341.3 L427.4,341.3 L428.3,341.4 L429.3,341.5 L430.3,341.6 L431.3,341.7 L432.2,341.8 L433.2,341.9 L434.2,341.9 L435.2,342.0 L436.1,342.0 L437.1,342.1 L438.1,342.1 L439.1,342.1 L440.0,342.1 L441.0,342.1 L442.0,342.1 L443.0,342.1 L443.9,342.1 L444.9,342.1 L445.9,342.1 L446.9,342.1 L447.9,342.1 L448.8,342.1 L449.8,342.1 L450.8,342.1 L451.8,342.1 L452.7,342.1 L453.7,342.1 L454.7,342.0 L455.7,342.0 L456.6,341.9 L457.6,341.8 L458.6,341.6 L459.6,341.5 L460.5,341.3 L461.5,341.2 L462.5,341.0 L463.5,340.8 L464.4,340.6 L465.4,340.5 L466.4,340.3 L467.4,340.1 L468.4,339.8 L469.3,339.6 L470.3,339.3 L471.3,339.0 L472.3,338.7 L473.3,338.3 L474.3,338.0 L475.3,337.6 L476.3,337.2 L477.3,336.8 L478.3,336.4 L479.3,335.9 L480.3,335.5 L481.3,335.0 L482.3,334.4 L483.3,333.8 L484.3,333.1 L485.3,332.4 L486.3,331.7 L487.3,330.9 L488.3,330.1 L489.3,329.2 L490.3,328.3 L491.3,327.3 L492.3,326.2 L493.3,325.2 L494.3,324.0 L495.3,322.8 L496.3,321.5 L497.3,320.2 L498.3,318.8 L499.3,317.3 L500.3,315.9 L501.3,314.4 L502.3,313.0 L503.3,311.5 L504.3,309.9 L505.3,308.3 L506.3,306.7 L507.3,305.1 L508.3,303.3 L509.3,301.6 L510.3,299.7 L511.3,297.9 L512.3,296.0 L513.3,294.1 L514.3,292.1 L515.3,290.2 L516.3,288.3 L517.3,286.3 L518.3,284.3 L519.3,282.3 L520.3,280.3 L521.3,278.2 L522.3,276.1 L523.3,273.9 L524.3,271.7 L525.3,269.4 L526.3,267.2 L527.3,265.0 L528.3,262.8 L529.3,260.6 L530.4,258.3 L531.4,256.1 L532.4,253.9 L533.4,251.6 L534.5,249.4 L535.5,247.1 L536.5,244.9 L537.5,242.6 L538.5,240.4 L539.6,238.2 L540.6,235.9 L541.6,233.6 L542.6,231.4 L543.7,229.1 L544.7,226.9 L545.7,224.6 L546.7,222.3 L547.8,220.0 L548.8,217.8 L549.8,215.6 L550.8,213.3 L551.9,211.1 L552.9,208.9 L554.0,206.7 L555.0,204.6 L556.0,202.4 L557.1,200.3 L558.1,198.1 L559.2,196.1 L560.2,194.1 L561.2,192.1 L562.3,190.2 L563.3,188.3 L564.4,186.4 L565.4,184.6 L566.4,182.9 L567.4,181.2 L568.4,179.6 L569.4,178.0 L570.4,176.5 L571.4,175.0 L572.4,173.6 L573.4,172.1 L574.4,170.7 L575.4,169.3 L576.4,167.9 L577.4,166.5 L578.4,165.2 L579.4,163.9 L580.4,162.6 L581.4,161.3 L582.4,160.1 L583.4,158.8 L584.4,157.6 L585.4,156.4 L586.4,155.2 L587.4,154.1 L588.4,152.9 L589.4,151.7 L590.5,150.6 L591.5,149.4 L592.5,148.2 L593.5,147.1 L594.5,146.0 L595.5,144.8 L596.5,143.7 L597.5,142.6 L598.5,141.5 L599.5,140.4 L600.5,139.3 L601.5,138.2 L602.5,137.1 L603.5,136.0 L604.5,134.9 L605.5,133.8 L606.5,132.8 L607.5,131.7 L608.5,130.7 L609.5,129.6 L610.5,128.6 L611.5,127.5 L612.5,126.5 L613.5,125.5 L614.5,124.4 L615.5,123.4 L616.5,122.4 L617.5,121.4 L618.5,120.4 L619.5,119.4 L620.5,118.5 L621.5,117.5 L622.5,116.6 L623.5,115.7 L624.5,114.8 L625.5,114.0 L626.5,113.1 L627.5,112.3 L628.5,111.5 L629.5,110.7 L630.6,110.0 L631.6,109.2 L632.6,108.5 L633.6,107.8 L634.6,107.1 L635.6,106.4 L636.6,105.7 L637.6,105.1 L638.6,104.4 L639.6,103.8 L640.6,103.1 L641.6,102.5 L642.6,101.9 L643.6,101.4 L644.6,100.8 L645.6,100.2 L646.6,99.7 L647.6,99.2 L648.6,98.7 L649.6,98.2 L650.6,97.8 L651.6,97.4 L652.6,97.1 L653.6,96.8 L654.6,96.5 L655.6,96.2 L656.6,95.9 L657.6,95.7 L658.6,95.5 L659.6,95.3 L660.6,95.1 L661.6,94.9 L662.6,94.7 L663.6,94.5 L664.6,94.3 L665.6,94.2 L666.6,94.0 L667.6,93.9 L668.6,93.7 L669.6,93.6 L670.7,93.5 L671.7,93.4 L672.7,93.3 L673.7,93.3 L674.7,93.2 L675.7,93.1 L676.7,93.0 L677.7,92.9 L678.7,92.9 L679.7,92.8 L680.7,92.7 L681.7,92.7 L682.7,92.6 L683.7,92.6 L684.7,92.5 L685.7,92.5 L686.7,92.4 L687.7,92.4 L688.7,92.3 L689.7,92.3 L690.7,92.2 L691.7,92.2 L692.7,92.2 L693.7,92.1 L694.7,92.1 L695.7,92.0 L696.7,92.0 L697.7,92.0 L698.7,91.9 L699.7,91.9 L700.7,91.9 L701.7,91.9 L702.7,91.9" stroke="#0000ff" stroke-width="3.4"/>
<path d="M398.7,339.2 L399.7,339.3 L400.7,339.4 L401.6,339.4 L402.6,339.5 L403.6,339.6 L404.6,339.6 L405.6,339.7 L406.6,339.8 L407.6,339.8 L408.6,339.9 L409.6,340.0 L410.6,340.0 L411.6,340.1 L412.6,340.1 L413.6,340.2 L414.5,340.3 L415.5,340.3 L416.5,340.4 L417.5,340.5 L418.5,340.5 L419.5,340.6 L420.5,340.7 L421.5,340.8 L422.5,340.8 L423.5,340.9 L424.5,341.0 L425.5,341.1 L426.4,341.2 L427.4,341.3 L428.4,341.3 L429.4,341.4 L430.4,341.5 L431.4,341.6 L432.4,341.7 L433.4,341.8 L434.4,341.9 L435.4,341.9 L436.4,342.0 L437.4,342.0 L438.4,342.1 L439.3,342.1 L440.3,342.1 L441.3,342.1 L442.3,342.1 L443.3,342.1 L444.3,342.1 L445.3,342.1 L446.3,342.1 L447.3,342.1 L448.3,342.1 L449.3,342.1 L450.3,342.1 L451.2,342.1 L452.2,342.1 L453.2,342.1 L454.2,342.1 L455.2,342.1 L456.2,342.0 L457.2,342.0 L458.2,341.9 L459.2,341.8 L460.2,341.6 L461.2,341.5 L462.2,341.3 L463.2,341.2 L464.1,341.0 L465.1,340.8 L466.1,340.6 L467.1,340.5 L468.1,340.3 L469.1,340.1 L470.1,339.8 L471.1,339.6 L472.1,339.3 L473.1,339.0 L474.1,338.7 L475.1,338.3 L476.1,338.0 L477.1,337.6 L478.1,337.2 L479.1,336.8 L480.1,336.4 L481.1,335.9 L482.1,335.5 L483.1,335.0 L484.1,334.4 L485.1,333.8 L486.1,333.1 L487.1,332.4 L488.1,331.7 L489.1,330.9 L490.1,330.1 L491.1,329.2 L492.1,328.3 L493.1,327.3 L494.1,326.2 L495.1,325.2 L496.1,324.0 L497.1,322.8 L498.1,321.5 L499.1,320.2 L500.1,318.8 L501.1,317.3 L502.1,315.9 L503.1,314.4 L504.1,313.0 L505.1,311.5 L506.1,309.9 L507.1,308.3 L508.1,306.7 L509.1,305.1 L510.1,303.3 L511.1,301.6 L512.1,299.7 L513.1,297.9 L514.1,296.0 L515.1,294.1 L516.1,292.1 L517.1,290.2 L518.1,288.3 L519.1,286.3 L520.1,284.3 L521.1,282.3 L522.1,280.3 L523.1,278.2 L524.1,276.1 L525.1,273.9 L526.1,271.7 L527.1,269.4 L528.1,267.2 L529.1,265.0 L530.1,262.8 L531.1,260.6 L532.1,258.3 L533.1,256.1 L534.1,253.9 L535.1,251.6 L536.1,249.4 L537.1,247.1 L538.1,244.9 L539.1,242.6 L540.1,240.4 L541.1,238.2 L542.1,235.9 L543.1,233.6 L544.1,231.4 L545.1,229.1 L546.1,226.9 L547.1,224.6 L548.1,222.3 L549.1,220.0 L550.1,217.8 L551.1,215.6 L552.2,213.3 L553.2,211.1 L554.2,208.9 L555.2,206.7 L556.2,204.6 L557.3,202.4 L558.3,200.3 L559.3,198.1 L560.3,196.1 L561.3,194.1 L562.3,192.1 L563.4,190.2 L564.4,188.3 L565.4,186.4 L566.4,184.6 L567.4,182.9 L568.4,181.2 L569.4,179.6 L570.4,178.0 L571.4,176.5 L572.4,175.0 L573.4,173.6 L574.4,172.1 L575.4,170.7 L576.4,169.3 L577.4,167.9 L578.4,166.5 L579.4,165.2 L580.4,163.9 L581.4,162.6 L582.4,161.3 L583.4,160.1 L584.4,158.8 L585.4,157.6 L586.4,156.4 L587.4,155.2 L588.4,154.1 L589.4,152.9 L590.4,151.7 L591.4,150.6 L592.4,149.4 L593.4,148.2 L594.4,147.1 L595.4,146.0 L596.4,144.8 L597.4,143.7 L598.4,142.6 L599.4,141.5 L600.4,140.4 L601.4,139.3 L602.4,138.2 L603.4,137.1 L604.4,136.0 L605.4,134.9 L606.4,133.8 L607.4,132.8 L608.4,131.7 L609.4,130.7 L610.4,129.6 L611.4,128.6 L612.4,127.5 L613.4,126.5 L614.4,125.5 L615.4,124.4 L616.4,123.4 L617.4,122.4 L618.4,121.4 L619.4,120.4 L620.4,119.4 L621.4,118.5 L622.4,117.5 L623.4,116.6 L624.4,115.7 L625.4,114.8 L626.4,114.0 L627.4,113.1 L628.4,112.3 L629.4,111.5 L630.4,110.7 L631.4,110.0 L632.4,109.2 L633.4,108.5 L634.4,107.8 L635.5,107.1 L636.5,106.4 L637.5,105.7 L638.5,105.1 L639.5,104.4 L640.5,103.8 L641.5,103.1 L642.5,102.5 L643.5,101.9 L644.5,101.4 L645.5,100.8 L646.5,100.2 L647.5,99.7 L648.5,99.2 L649.5,98.7 L650.5,98.2 L651.5,97.8 L652.5,97.4 L653.5,97.1 L654.5,96.8 L655.5,96.5 L656.5,96.2 L657.5,95.9 L658.5,95.7 L659.5,95.5 L660.5,95.3 L661.5,95.1 L662.5,94.9 L663.5,94.7 L664.5,94.5 L665.5,94.3 L666.5,94.2 L667.5,94.0 L668.5,93.9 L669.5,93.7 L670.5,93.6 L671.5,93.5 L672.5,93.4 L673.5,93.3 L674.5,93.3 L675.5,93.2 L676.5,93.1 L677.5,93.0 L678.5,92.9 L679.5,92.9 L680.5,92.8 L681.5,92.7 L682.5,92.7 L683.5,92.6 L684.5,92.6 L685.5,92.5 L686.5,92.5 L687.5,92.4 L688.5,92.4 L689.5,92.3 L690.5,92.3 L691.5,92.2 L692.5,92.2 L693.5,92.2 L694.5,92.1 L695.5,92.1 L696.5,92.0 L697.5,92.0 L698.5,92.0 L699.5,91.9 L700.5,91.9 L701.5,91.9 L702.5,91.9 L703.5,91.9" stroke="#0000ff" stroke-width="3.4"/>
<path d="M399.3,339.2 L400.3,339.3 L401.3,339.4 L402.3,339.4 L403.3,339.5 L404.3,339.6 L405.3,339.6 L406.3,339.7 L407.3,339.8 L408.3,339.8 L409.3,339.9 L410.4,340.0 L411.4,340.0 L412.4,340.1 L413.4,340.1 L414.4,340.2 L415.4,340.3 L416.4,340.3 L417.4,340.4 L418.4,340.5 L419.4,340.5 L420.4,340.6 L421.4,340.7 L422.5,340.8 L423.5,340.8 L424.5,340.9 L425.5,341.0 L426.5,341.1 L427.5,341.2 L428.5,341.3 L429.5,341.3 L430.5,341.4 L431.5,341.5 L432.5,341.6 L433.5,341.7 L434.5,341.8 L435.6,341.9 L436.6,341.9 L437.6,342.0 L438.6,342.0 L439.6,342.1 L440.6,342.1 L441.6,342.1 L442.6,342.1 L443.6,342.1 L444.6,342.1 L445.6,342.1 L446.6,342.1 L447.7,342.1 L448.7,342.1 L449.7,342.1 L450.7,342.1 L451.7,342.1 L452.7,342.1 L453.7,342.1 L454.7,342.1 L455.7,342.1 L456.7,342.1 L457.7,342.0 L458.7,342.0 L459.7,341.9 L460.8,341.8 L461.8,341.6 L462.8,341.5 L463.8,341.3 L464.8,341.2 L465.8,341.0 L466.8,340.8 L467.8,340.6 L468.8,340.5 L469.8,340.3 L470.8,340.1 L471.8,339.8 L472.9,339.6 L473.9,339.3 L474.9,339.0 L475.9,338.7 L476.9,338.3 L477.9,338.0 L478.9,337.6 L479.9,337.2 L480.9,336.8 L481.9,336.4 L482.9,335.9 L483.9,335.5 L484.9,335.0 L485.9,334.4 L486.9,333.8 L487.9,333.1 L488.9,332.4 L489.9,331.7 L490.9,330.9 L491.9,330.1 L492.9,329.2 L493.9,328.3 L494.9,327.3 L495.9,326.2 L496.9,325.2 L497.9,324.0 L498.9,322.8 L499.9,321.5 L500.9,320.2 L501.9,318.8 L502.9,317.3 L503.9,315.9 L504.9,314.4 L505.9,313.0 L506.9,311.5 L507.9,309.9 L508.9,308.3 L509.9,306.7 L510.9,305.1 L511.9,303.3 L512.9,301.6 L513.9,299.7 L514.9,297.9 L515.9,296.0 L516.9,294.1 L517.9,292.1 L518.9,290.2 L519.9,288.3 L520.9,286.3 L521.9,284.3 L522.9,282.3 L523.9,280.3 L524.9,278.2 L525.9,276.1 L526.9,273.9 L527.9,271.7 L528.9,269.4 L529.9,267.2 L530.9,265.0 L531.9,262.8 L532.9,260.6 L533.8,258.3 L534.8,256.1 L535.8,253.9 L536.8,251.6 L537.8,249.4 L538.7,247.1 L539.7,244.9 L540.7,242.6 L541.7,240.4 L542.7,238.2 L543.7,235.9 L544.6,233.6 L545.6,231.4 L546.6,229.1 L547.6,226.9 L548.6,224.6 L549.5,222.3 L550.5,220.0 L551.5,217.8 L552.5,215.6 L553.5,213.3 L554.5,211.1 L555.5,208.9 L556.5,206.7 L557.5,204.6 L558.5,202.4 L559.5,200.3 L560.5,198.1 L561.5,196.1 L562.5,194.1 L563.4,192.1 L564.4,190.2 L565.4,188.3 L566.4,186.4 L567.4,184.6 L568.4,182.9 L569.4,181.2 L570.4,179.6 L571.4,178.0 L572.4,176.5 L573.4,175.0 L574.4,173.6 L575.4,172.1 L576.4,170.7 L577.4,169.3 L578.4,167.9 L579.4,166.5 L580.4,165.2 L581.4,163.9 L582.4,162.6 L583.4,161.3 L584.4,160.1 L585.4,158.8 L586.4,157.6 L587.4,156.4 L588.4,155.2 L589.4,154.1 L590.4,152.9 L591.4,151.7 L592.4,150.6 L593.4,149.4 L594.4,148.2 L595.4,147.1 L596.4,146.0 L597.4,144.8 L598.4,143.7 L599.4,142.6 L600.4,141.5 L601.4,140.4 L602.4,139.3 L603.4,138.2 L604.4,137.1 L605.4,136.0 L606.4,134.9 L607.4,133.8 L608.4,132.8 L609.4,131.7 L610.4,130.7 L611.4,129.6 L612.4,128.6 L613.4,127.5 L614.4,126.5 L615.4,125.5 L616.4,124.4 L617.4,123.4 L618.4,122.4 L619.4,121.4 L620.4,120.4 L621.4,119.4 L622.4,118.5 L623.4,117.5 L624.4,116.6 L625.4,115.7 L626.4,114.8 L627.4,114.0 L628.3,113.1 L629.3,112.3 L630.3,111.5 L631.3,110.7 L632.3,110.0 L633.3,109.2 L634.3,108.5 L635.3,107.8 L636.3,107.1 L637.3,106.4 L638.3,105.7 L639.3,105.1 L640.3,104.4 L641.3,103.8 L642.3,103.1 L643.3,102.5 L644.3,101.9 L645.3,101.4 L646.3,100.8 L647.3,100.2 L648.3,99.7 L649.3,99.2 L650.3,98.7 L651.3,98.2 L652.3,97.8 L653.3,97.4 L654.3,97.1 L655.3,96.8 L656.3,96.5 L657.3,96.2 L658.3,95.9 L659.3,95.7 L660.3,95.5 L661.3,95.3 L662.3,95.1 L663.3,94.9 L664.3,94.7 L665.3,94.5 L666.3,94.3 L667.3,94.2 L668.3,94.0 L669.3,93.9 L670.3,93.7 L671.3,93.6 L672.3,93.5 L673.3,93.4 L674.3,93.3 L675.3,93.3 L676.3,93.2 L677.3,93.1 L678.3,93.0 L679.3,92.9 L680.3,92.9 L681.3,92.8 L682.3,92.7 L683.3,92.7 L684.3,92.6 L685.3,92.6 L686.3,92.5 L687.3,92.5 L688.3,92.4 L689.3,92.4 L690.3,92.3 L691.3,92.3 L692.3,92.2 L693.3,92.2 L694.3,92.2 L695.3,92.1 L696.3,92.1 L697.3,92.0 L698.3,92.0 L699.3,92.0 L700.3,91.9 L701.3,91.9 L702.3,91.9 L703.3,91.9 L704.2,91.9" stroke="#0000ff" stroke-width="3.4"/>
<path d="M399.9,339.2 L400.9,339.3 L401.9,339.4 L402.9,339.4 L404.0,339.5 L405.0,339.6 L406.0,339.6 L407.0,339.7 L408.1,339.8 L409.1,339.8 L410.1,339.9 L411.1,340.0 L412.2,340.0 L413.2,340.1 L414.2,340.1 L415.2,340.2 L416.3,340.3 L417.3,340.3 L418.3,340.4 L419.3,340.5 L420.3,340.5 L421.4,340.6 L422.4,340.7 L423.4,340.8 L424.4,340.8 L425.5,340.9 L426.5,341.0 L427.5,341.1 L428.5,341.2 L429.6,341.3 L430.6,341.3 L431.6,341.4 L432.6,341.5 L433.7,341.6 L434.7,341.7 L435.7,341.8 L436.7,341.9 L437.8,341.9 L438.8,342.0 L439.8,342.0 L440.8,342.1 L441.8,342.1 L442.9,342.1 L443.9,342.1 L444.9,342.1 L445.9,342.1 L447.0,342.1 L448.0,342.1 L449.0,342.1 L450.0,342.1 L451.1,342.1 L452.1,342.1 L453.1,342.1 L454.1,342.1 L455.2,342.1 L456.2,342.1 L457.2,342.1 L458.2,342.1 L459.3,342.0 L460.3,342.0 L461.3,341.9 L462.3,341.8 L463.3,341.6 L464.4,341.5 L465.4,341.3 L466.4,341.2 L467.4,341.0 L468.5,340.8 L469.5,340.6 L470.5,340.5 L471.5,340.3 L472.6,340.1 L473.6,339.8 L474.6,339.6 L475.6,339.3 L476.6,339.0 L477.6,338.7 L478.6,338.3 L479.6,338.0 L480.6,337.6 L481.6,337.2 L482.6,336.8 L483.6,336.4 L484.6,335.9 L485.6,335.5 L486.6,335.0 L487.6,334.4 L488.6,333.8 L489.6,333.1 L490.6,332.4 L491.6,331.7 L492.6,330.9 L493.6,330.1 L494.6,329.2 L495.6,328.3 L496.6,327.3 L497.6,326.2 L498.6,325.2 L499.6,324.0 L500.6,322.8 L501.6,321.5 L502.6,320.2 L503.6,318.8 L504.6,317.3 L505.6,315.9 L506.6,314.4 L507.6,313.0 L508.6,311.5 L509.6,309.9 L510.6,308.3 L511.6,306.7 L512.6,305.1 L513.6,303.3 L514.6,301.6 L515.6,299.7 L516.6,297.9 L517.6,296.0 L518.6,294.1 L519.6,292.1 L520.6,290.2 L521.6,288.3 L522.6,286.3 L523.6,284.3 L524.6,282.3 L525.6,280.3 L526.6,278.2 L527.6,276.1 L528.6,273.9 L529.6,271.7 L530.6,269.4 L531.6,267.2 L532.6,265.0 L533.6,262.8 L534.6,260.6 L535.6,258.3 L536.5,256.1 L537.5,253.9 L538.5,251.6 L539.4,249.4 L540.4,247.1 L541.3,244.9 L542.3,242.6 L543.3,240.4 L544.2,238.2 L545.2,235.9 L546.1,233.6 L547.1,231.4 L548.1,229.1 L549.0,226.9 L550.0,224.6 L550.9,222.3 L551.9,220.0 L552.9,217.8 L553.8,215.6 L554.8,213.3 L555.8,211.1 L556.8,208.9 L557.7,206.7 L558.7,204.6 L559.7,202.4 L560.7,200.3 L561.6,198.1 L562.6,196.1 L563.6,194.1 L564.6,192.1 L565.5,190.2 L566.5,188.3 L567.5,186.4 L568.5,184.6 L569.4,182.9 L570.4,181.2 L571.4,179.6 L572.4,178.0 L573.4,176.5 L574.4,175.0 L575.4,173.6 L576.4,172.1 L577.4,170.7 L578.4,169.3 L579.4,167.9 L580.4,166.5 L581.4,165.2 L582.4,163.9 L583.4,162.6 L584.4,161.3 L585.4,160.1 L586.4,158.8 L587.4,157.6 L588.4,156.4 L589.4,155.2 L590.4,154.1 L591.4,152.9 L592.4,151.7 L593.4,150.6 L594.4,149.4 L595.4,148.2 L596.4,147.1 L597.4,146.0 L598.4,144.8 L599.4,143.7 L600.3,142.6 L601.3,141.5 L602.3,140.4 L603.3,139.3 L604.3,138.2 L605.3,137.1 L606.3,136.0 L607.3,134.9 L608.3,133.8 L609.3,132.8 L610.3,131.7 L611.3,130.7 L612.3,129.6 L613.3,128.6 L614.3,127.5 L615.3,126.5 L616.3,125.5 L617.3,124.4 L618.3,123.4 L619.3,122.4 L620.3,121.4 L621.3,120.4 L622.3,119.4 L623.3,118.5 L624.3,117.5 L625.3,116.6 L626.3,115.7 L627.3,114.8 L628.3,114.0 L629.3,113.1 L630.3,112.3 L631.2,111.5 L632.2,110.7 L633.2,110.0 L634.2,109.2 L635.2,108.5 L636.2,107.8 L637.2,107.1 L638.2,106.4 L639.2,105.7 L640.2,105.1 L641.2,104.4 L642.2,103.8 L643.2,103.1 L644.2,102.5 L645.2,101.9 L646.2,101.4 L647.2,100.8 L648.2,100.2 L649.2,99.7 L650.2,99.2 L651.2,98.7 L652.2,98.2 L653.2,97.8 L654.2,97.4 L655.2,97.1 L656.2,96.8 L657.2,96.5 L658.2,96.2 L659.2,95.9 L660.2,95.7 L661.2,95.5 L662.1,95.3 L663.1,95.1 L664.1,94.9 L665.1,94.7 L666.1,94.5 L667.1,94.3 L668.1,94.2 L669.1,94.0 L670.1,93.9 L671.1,93.7 L672.1,93.6 L673.1,93.5 L674.1,93.4 L675.1,93.3 L676.1,93.3 L677.1,93.2 L678.1,93.1 L679.1,93.0 L680.1,92.9 L681.1,92.9 L682.1,92.8 L683.1,92.7 L684.1,92.7 L685.1,92.6 L686.1,92.6 L687.1,92.5 L688.1,92.5 L689.1,92.4 L690.1,92.4 L691.1,92.3 L692.1,92.3 L693.0,92.2 L694.0,92.2 L695.0,92.2 L696.0,92.1 L697.0,92.1 L698.0,92.0 L699.0,92.0 L700.0,92.0 L701.0,91.9 L702.0,91.9 L703.0,91.9 L704.0,91.9 L705.0,91.9" stroke="#0000ff" stroke-width="3.4"/>
<path d="M400.5,339.2 L401.5,339.3 L402.5,339.4 L403.6,339.4 L404.6,339.5 L405.7,339.6 L406.7,339.6 L407.7,339.7 L408.8,339.8 L409.8,339.8 L410.9,339.9 L411.9,340.0 L412.9,340.0 L414.0,340.1 L415.0,340.1 L416.1,340.2 L417.1,340.3 L418.1,340.3 L419.2,340.4 L420.2,340.5 L421.3,340.5 L422.3,340.6 L423.3,340.7 L424.4,340.8 L425.4,340.8 L426.5,340.9 L427.5,341.0 L428.5,341.1 L429.6,341.2 L430.6,341.3 L431.7,341.3 L432.7,341.4 L433.7,341.5 L434.8,341.6 L435.8,341.7 L436.9,341.8 L437.9,341.9 L438.9,341.9 L440.0,342.0 L441.0,342.0 L442.1,342.1 L443.1,342.1 L444.1,342.1 L445.2,342.1 L446.2,342.1 L447.3,342.1 L448.3,342.1 L449.3,342.1 L450.4,342.1 L451.4,342.1 L452.5,342.1 L453.5,342.1 L454.5,342.1 L455.6,342.1 L456.6,342.1 L457.7,342.1 L458.7,342.1 L459.7,342.1 L460.8,342.0 L461.8,342.0 L462.9,341.9 L463.9,341.8 L464.9,341.6 L466.0,341.5 L467.0,341.3 L468.1,341.2 L469.1,341.0 L470.1,340.8 L471.2,340.6 L472.2,340.5 L473.3,340.3 L474.3,340.1 L475.3,339.8 L476.4,339.6 L477.4,339.3 L478.4,339.0 L479.4,338.7 L480.4,338.3 L481.4,338.0 L482.4,337.6 L483.4,337.2 L484.4,336.8 L485.4,336.4 L486.4,335.9 L487.4,335.5 L488.4,335.0 L489.4,334.4 L490.4,333.8 L491.4,333.1 L492.4,332.4 L493.4,331.7 L494.4,330.9 L495.4,330.1 L496.4,329.2 L497.4,328.3 L498.4,327.3 L499.4,326.2 L500.4,325.2 L501.4,324.0 L502.4,322.8 L503.4,321.5 L504.4,320.2 L505.4,318.8 L506.4,317.3 L507.4,315.9 L508.4,314.4 L509.4,313.0 L510.4,311.5 L511.4,309.9 L512.4,308.3 L513.4,306.7 L514.4,305.1 L515.4,303.3 L516.4,301.6 L517.4,299.7 L518.4,297.9 L519.4,296.0 L520.4,294.1 L521.4,292.1 L522.4,290.2 L523.4,288.3 L524.4,286.3 L525.4,284.3 L526.4,282.3 L527.4,280.3 L528.4,278.2 L529.4,276.1 L530.4,273.9 L531.4,271.7 L532.4,269.4 L533.4,267.2 L534.4,265.0 L535.4,262.8 L536.4,260.6 L537.3,258.3 L538.2,256.1 L539.2,253.9 L540.1,251.6 L541.1,249.4 L542.0,247.1 L543.0,244.9 L543.9,242.6 L544.8,240.4 L545.8,238.2 L546.7,235.9 L547.6,233.6 L548.6,231.4 L549.5,229.1 L550.5,226.9 L551.4,224.6 L552.4,222.3 L553.3,220.0 L554.2,217.8 L555.2,215.6 L556.1,213.3 L557.1,211.1 L558.0,208.9 L559.0,206.7 L559.9,204.6 L560.9,202.4 L561.8,200.3 L562.8,198.1 L563.8,196.1 L564.7,194.1 L565.7,192.1 L566.6,190.2 L567.6,188.3 L568.5,186.4 L569.5,184.6 L570.5,182.9 L571.5,181.2 L572.5,179.6 L573.4,178.0 L574.4,176.5 L575.4,175.0 L576.4,173.6 L577.4,172.1 L578.4,170.7 L579.4,169.3 L580.4,167.9 L581.4,166.5 L582.4,165.2 L583.4,163.9 L584.4,162.6 L585.4,161.3 L586.4,160.1 L587.4,158.8 L588.4,157.6 L589.4,156.4 L590.4,155.2 L591.4,154.1 L592.4,152.9 L593.3,151.7 L594.3,150.6 L595.3,149.4 L596.3,148.2 L597.3,147.1 L598.3,146.0 L599.3,144.8 L600.3,143.7 L601.3,142.6 L602.3,141.5 L603.3,140.4 L604.3,139.3 L605.3,138.2 L606.3,137.1 L607.3,136.0 L608.3,134.9 L609.3,133.8 L610.3,132.8 L611.3,131.7 L612.3,130.7 L613.2,129.6 L614.2,128.6 L615.2,127.5 L616.2,126.5 L617.2,125.5 L618.2,124.4 L619.2,123.4 L620.2,122.4 L621.2,121.4 L622.2,120.4 L623.2,119.4 L624.2,118.5 L625.2,117.5 L626.2,116.6 L627.2,115.7 L628.2,114.8 L629.2,114.0 L630.2,113.1 L631.2,112.3 L632.1,111.5 L633.1,110.7 L634.1,110.0 L635.1,109.2 L636.1,108.5 L637.1,107.8 L638.1,107.1 L639.1,106.4 L640.1,105.7 L641.1,105.1 L642.1,104.4 L643.1,103.8 L644.1,103.1 L645.1,102.5 L646.1,101.9 L647.1,101.4 L648.1,100.8 L649.1,100.2 L650.1,99.7 L651.1,99.2 L652.0,98.7 L653.0,98.2 L654.0,97.8 L655.0,97.4 L656.0,97.1 L657.0,96.8 L658.0,96.5 L659.0,96.2 L660.0,95.9 L661.0,95.7 L662.0,95.5 L663.0,95.3 L664.0,95.1 L665.0,94.9 L666.0,94.7 L667.0,94.5 L668.0,94.3 L669.0,94.2 L670.0,94.0 L670.9,93.9 L671.9,93.7 L672.9,93.6 L673.9,93.5 L674.9,93.4 L675.9,93.3 L676.9,93.3 L677.9,93.2 L678.9,93.1 L679.9,93.0 L680.9,92.9 L681.9,92.9 L682.9,92.8 L683.9,92.7 L684.9,92.7 L685.9,92.6 L686.9,92.6 L687.9,92.5 L688.9,92.5 L689.9,92.4 L690.8,92.4 L691.8,92.3 L692.8,92.3 L693.8,92.2 L694.8,92.2 L695.8,92.2 L696.8,92.1 L697.8,92.1 L698.8,92.0 L699.8,92.0 L700.8,92.0 L701.8,91.9 L702.8,91.9 L703.8,91.9 L704.8,91.9 L705.8,91.9" stroke="#0000ff" stroke-width="3.4"/>
<path d="M405.6,91.9 L406.6,91.8 L407.6,91.7 L408.6,91.7 L409.6,91.6 L410.6,91.5 L411.6,91.5 L412.6,91.4 L413.6,91.3 L414.6,91.3 L415.6,91.2 L416.6,91.1 L417.6,91.1 L418.6,91.0 L419.6,91.0 L420.6,90.9 L421.6,90.8 L422.6,90.8 L423.6,90.7 L424.6,90.6 L425.6,90.6 L426.6,90.5 L427.6,90.4 L428.6,90.4 L429.6,90.3 L430.6,90.2 L431.6,90.1 L432.6,90.0 L433.6,89.9 L434.6,89.8 L435.6,89.8 L436.6,89.7 L437.6,89.6 L438.6,89.5 L439.6,89.4 L440.6,89.3 L441.6,89.2 L442.6,89.2 L443.6,89.1 L444.6,89.1 L445.6,89.0 L446.6,89.0 L447.6,89.0 L448.6,89.0 L449.6,89.0 L450.6,89.0 L451.6,89.0 L452.6,89.0 L453.6,89.0 L454.6,89.0 L455.6,89.0 L456.6,89.0 L457.6,89.0 L458.6,89.0 L459.6,89.0 L460.6,89.0 L461.6,89.0 L462.6,89.0 L463.6,89.1 L464.6,89.1 L465.6,89.2 L466.6,89.3 L467.6,89.5 L468.6,89.6 L469.6,89.8 L470.6,89.9 L471.6,90.1 L472.6,90.3 L473.6,90.5 L474.6,90.6 L475.6,90.8 L476.6,91.0 L477.6,91.3 L478.6,91.5 L479.6,91.8 L480.6,92.1 L481.6,92.4 L482.6,92.8 L483.6,93.1 L484.6,93.5 L485.6,93.9 L486.6,94.3 L487.6,94.7 L488.6,95.2 L489.6,95.6 L490.6,96.1 L491.6,96.7 L492.6,97.3 L493.6,98.0 L494.6,98.7 L495.6,99.4 L496.6,100.2 L497.6,101.0 L498.6,101.9 L499.6,102.8 L500.6,103.8 L501.6,104.9 L502.6,105.9 L503.6,107.1 L504.6,108.3 L505.6,109.6 L506.6,110.9 L507.6,112.3 L508.6,113.8 L509.6,115.2 L510.6,116.7 L511.6,118.1 L512.6,119.6 L513.6,121.2 L514.6,122.8 L515.6,124.4 L516.6,126.0 L517.6,127.8 L518.6,129.5 L519.6,131.4 L520.6,133.2 L521.6,135.1 L522.6,137.0 L523.6,139.0 L524.6,140.9 L525.6,142.8 L526.6,144.8 L527.6,146.8 L528.6,148.8 L529.6,150.8 L530.6,152.9 L531.6,155.0 L532.6,157.2 L533.6,159.4 L534.6,161.7 L535.6,163.9 L536.6,166.1 L537.6,168.3 L538.6,170.5 L539.5,172.8 L540.5,175.0 L541.5,177.2 L542.4,179.5 L543.4,181.7 L544.3,184.0 L545.3,186.2 L546.2,188.5 L547.2,190.7 L548.2,193.0 L549.1,195.2 L550.1,197.5 L551.1,199.7 L552.0,202.0 L553.0,204.2 L553.9,206.5 L554.9,208.8 L555.9,211.1 L556.8,213.3 L557.8,215.6 L558.6,217.7 L559.5,219.9 L560.3,222.0 L561.1,224.1 L562.0,226.1 L562.8,228.0 L563.7,229.8 L564.6,231.6 L565.6,233.4 L566.5,235.2 L567.5,236.9 L568.5,238.6 L569.4,240.2 L570.4,241.8 L571.3,243.4 L572.3,245.0 L573.3,246.5 L574.2,248.1 L575.2,249.5 L576.1,251.0 L577.1,252.4 L578.1,253.8 L579.0,255.2 L580.0,256.6 L580.9,257.9 L581.9,259.2 L582.9,260.5 L583.8,261.8 L584.8,263.1 L585.8,264.4 L586.8,265.6 L587.7,266.8 L588.7,268.0 L589.7,269.2 L590.6,270.4 L591.6,271.6 L592.6,272.7 L593.5,273.9 L594.5,275.1 L595.5,276.3 L596.5,277.5 L597.4,278.6 L598.4,279.7 L599.4,280.8 L600.3,281.9 L601.3,282.9 L602.3,283.9 L603.2,285.0 L604.2,286.0 L605.2,287.1 L606.1,288.1 L607.1,289.1 L608.1,290.2 L609.1,291.2 L610.0,292.3 L611.0,293.3 L612.0,294.4 L612.9,295.4 L613.9,296.4 L614.9,297.5 L615.8,298.5 L616.8,299.5 L617.7,300.5 L618.7,301.5 L619.7,302.5 L620.6,303.5 L621.6,304.6 L622.5,305.6 L623.5,306.6 L624.4,307.7 L625.4,308.7 L626.4,309.7 L627.3,310.7 L628.3,311.7 L629.2,312.7 L630.2,313.7 L631.1,314.7 L632.1,315.6 L633.0,316.6 L634.0,317.6 L635.0,318.5 L635.9,319.4 L636.9,320.4 L637.8,321.3 L638.8,322.2 L639.7,323.1 L640.7,323.9 L641.7,324.8 L642.6,325.6 L643.6,326.4 L644.5,327.2 L645.5,327.9 L646.4,328.6 L647.4,329.1 L648.3,329.7 L649.2,330.2 L650.2,330.8 L651.1,331.3 L652.1,331.7 L653.0,332.2 L654.0,332.6 L654.9,333.0 L655.9,333.4 L656.8,333.7 L657.8,334.1 L658.7,334.4 L659.7,334.7 L660.6,335.0 L661.6,335.3 L662.5,335.6 L663.5,335.8 L664.4,336.0 L665.3,336.3 L666.3,336.5 L667.2,336.7 L668.2,336.9 L669.1,337.1 L670.1,337.2 L671.0,337.4 L672.0,337.5 L672.9,337.6 L673.9,337.7 L674.9,337.8 L675.8,337.9 L676.8,338.0 L677.8,338.0 L678.8,338.1 L679.7,338.2 L680.7,338.3 L681.7,338.3 L682.6,338.4 L683.6,338.5 L684.6,338.5 L685.5,338.6 L686.5,338.6 L687.5,338.7 L688.4,338.7 L689.4,338.8 L690.4,338.8 L691.3,338.9 L692.3,338.9 L693.3,339.0 L694.3,339.0 L695.2,339.0 L696.2,339.1 L697.2,339.1 L698.1,339.1 L699.1,339.2 L700.1,339.2 L701.0,339.2 L702.0,339.2 L703.0,339.2" stroke="#0000ff" stroke-width="2.5"/>
<path d="M406.7,91.9 L407.7,91.8 L408.7,91.7 L409.7,91.7 L410.7,91.6 L411.7,91.5 L412.7,91.5 L413.7,91.4 L414.7,91.3 L415.7,91.3 L416.7,91.2 L417.7,91.1 L418.7,91.1 L419.7,91.0 L420.7,91.0 L421.7,90.9 L422.7,90.8 L423.7,90.8 L424.7,90.7 L425.7,90.6 L426.7,90.6 L427.7,90.5 L428.7,90.4 L429.7,90.4 L430.7,90.3 L431.7,90.2 L432.7,90.1 L433.7,90.0 L434.7,89.9 L435.7,89.8 L436.7,89.8 L437.7,89.7 L438.7,89.6 L439.7,89.5 L440.7,89.4 L441.7,89.3 L442.7,89.2 L443.7,89.2 L444.7,89.1 L445.7,89.1 L446.7,89.0 L447.7,89.0 L448.7,89.0 L449.7,89.0 L450.7,89.0 L451.7,89.0 L452.7,89.0 L453.7,89.0 L454.7,89.0 L455.7,89.0 L456.7,89.0 L457.7,89.0 L458.7,89.0 L459.7,89.0 L460.7,89.0 L461.7,89.0 L462.7,89.0 L463.7,89.0 L464.7,89.1 L465.7,89.1 L466.7,89.2 L467.7,89.3 L468.7,89.5 L469.7,89.6 L470.7,89.8 L471.7,89.9 L472.7,90.1 L473.7,90.3 L474.7,90.5 L475.7,90.6 L476.7,90.8 L477.7,91.0 L478.7,91.3 L479.7,91.5 L480.7,91.8 L481.7,92.1 L482.7,92.4 L483.7,92.8 L484.7,93.1 L485.7,93.5 L486.7,93.9 L487.7,94.3 L488.7,94.7 L489.7,95.2 L490.7,95.6 L491.7,96.1 L492.7,96.7 L493.7,97.3 L494.7,98.0 L495.7,98.7 L496.7,99.4 L497.7,100.2 L498.7,101.0 L499.7,101.9 L500.7,102.8 L501.7,103.8 L502.7,104.9 L503.7,105.9 L504.7,107.1 L505.7,108.3 L506.7,109.6 L507.7,110.9 L508.7,112.3 L509.7,113.8 L510.7,115.2 L511.7,116.7 L512.7,118.1 L513.7,119.6 L514.7,121.2 L515.7,122.8 L516.7,124.4 L517.7,126.0 L518.7,127.8 L519.7,129.5 L520.7,131.4 L521.7,133.2 L522.7,135.1 L523.7,137.0 L524.7,139.0 L525.7,140.9 L526.7,142.8 L527.7,144.8 L528.7,146.8 L529.7,148.8 L530.7,150.8 L531.7,152.9 L532.7,155.0 L533.7,157.2 L534.7,159.4 L535.7,161.7 L536.7,163.9 L537.7,166.1 L538.7,168.3 L539.7,170.5 L540.7,172.8 L541.6,175.0 L542.6,177.2 L543.5,179.5 L544.5,181.7 L545.4,184.0 L546.4,186.2 L547.3,188.5 L548.2,190.7 L549.2,193.0 L550.1,195.2 L551.1,197.5 L552.0,199.7 L553.0,202.0 L553.9,204.2 L554.9,206.5 L555.8,208.8 L556.8,211.1 L557.7,213.3 L558.7,215.6 L559.5,217.7 L560.3,219.9 L561.1,222.0 L561.9,224.1 L562.7,226.1 L563.5,228.0 L564.3,229.8 L565.2,231.6 L566.2,233.4 L567.1,235.2 L568.0,236.9 L569.0,238.6 L569.9,240.2 L570.9,241.8 L571.8,243.4 L572.7,245.0 L573.7,246.5 L574.6,248.1 L575.6,249.5 L576.5,251.0 L577.4,252.4 L578.4,253.8 L579.3,255.2 L580.3,256.6 L581.2,257.9 L582.2,259.2 L583.2,260.5 L584.1,261.8 L585.1,263.1 L586.1,264.4 L587.0,265.6 L588.0,266.8 L589.0,268.0 L589.9,269.2 L590.9,270.4 L591.9,271.6 L592.8,272.7 L593.8,273.9 L594.7,275.1 L595.7,276.3 L596.7,277.5 L597.6,278.6 L598.6,279.7 L599.6,280.8 L600.5,281.9 L601.5,282.9 L602.5,283.9 L603.4,285.0 L604.4,286.0 L605.4,287.1 L606.3,288.1 L607.3,289.1 L608.3,290.2 L609.2,291.2 L610.2,292.3 L611.2,293.3 L612.1,294.4 L613.1,295.4 L614.1,296.4 L615.0,297.5 L616.0,298.5 L616.9,299.5 L617.9,300.5 L618.8,301.5 L619.8,302.5 L620.8,303.5 L621.7,304.6 L622.7,305.6 L623.6,306.6 L624.6,307.7 L625.5,308.7 L626.5,309.7 L627.4,310.7 L628.4,311.7 L629.3,312.7 L630.3,313.7 L631.3,314.7 L632.2,315.6 L633.2,316.6 L634.1,317.6 L635.1,318.5 L636.0,319.4 L637.0,320.4 L637.9,321.3 L638.9,322.2 L639.9,323.1 L640.8,323.9 L641.8,324.8 L642.7,325.6 L643.7,326.4 L644.6,327.2 L645.6,327.9 L646.5,328.6 L647.4,329.1 L648.4,329.7 L649.3,330.2 L650.3,330.8 L651.2,331.3 L652.2,331.7 L653.1,332.2 L654.0,332.6 L655.0,333.0 L655.9,333.4 L656.9,333.7 L657.8,334.1 L658.8,334.4 L659.7,334.7 L660.6,335.0 L661.6,335.3 L662.5,335.6 L663.5,335.8 L664.4,336.0 L665.4,336.3 L666.3,336.5 L667.3,336.7 L668.2,336.9 L669.1,337.1 L670.1,337.2 L671.0,337.4 L672.0,337.5 L672.9,337.6 L673.9,337.7 L674.9,337.8 L675.8,337.9 L676.8,338.0 L677.8,338.0 L678.8,338.1 L679.7,338.2 L680.7,338.3 L681.7,338.3 L682.6,338.4 L683.6,338.5 L684.6,338.5 L685.5,338.6 L686.5,338.6 L687.5,338.7 L688.4,338.7 L689.4,338.8 L690.4,338.8 L691.3,338.9 L692.3,338.9 L693.3,339.0 L694.3,339.0 L695.2,339.0 L696.2,339.1 L697.2,339.1 L698.1,339.1 L699.1,339.2 L700.1,339.2 L701.0,339.2 L702.0,339.2 L703.0,339.2" stroke="#0000ff" stroke-width="2.5"/>
<path d="M407.9,91.9 L408.9,91.8 L409.9,91.7 L410.9,91.7 L411.9,91.6 L412.9,91.5 L413.9,91.5 L414.9,91.4 L415.9,91.3 L416.9,91.3 L417.9,91.2 L418.9,91.1 L419.9,91.1 L420.9,91.0 L421.9,91.0 L422.9,90.9 L423.9,90.8 L424.9,90.8 L425.9,90.7 L426.9,90.6 L427.9,90.6 L428.9,90.5 L429.9,90.4 L430.9,90.4 L431.9,90.3 L432.9,90.2 L433.9,90.1 L434.9,90.0 L435.9,89.9 L436.9,89.8 L437.9,89.8 L438.9,89.7 L439.9,89.6 L440.9,89.5 L441.9,89.4 L442.9,89.3 L443.9,89.2 L444.9,89.2 L445.9,89.1 L446.9,89.1 L447.9,89.0 L448.9,89.0 L449.9,89.0 L450.9,89.0 L451.9,89.0 L452.9,89.0 L453.9,89.0 L454.9,89.0 L455.9,89.0 L456.9,89.0 L457.9,89.0 L458.9,89.0 L459.9,89.0 L460.9,89.0 L461.9,89.0 L462.9,89.0 L463.9,89.0 L464.9,89.0 L465.9,89.1 L466.9,89.1 L467.9,89.2 L468.9,89.3 L469.9,89.5 L470.9,89.6 L471.9,89.8 L472.9,89.9 L473.9,90.1 L474.9,90.3 L475.9,90.5 L476.9,90.6 L477.9,90.8 L478.9,91.0 L479.9,91.3 L480.9,91.5 L481.9,91.8 L482.9,92.1 L483.9,92.4 L484.9,92.8 L485.9,93.1 L486.9,93.5 L487.9,93.9 L488.9,94.3 L489.9,94.7 L490.9,95.2 L491.9,95.6 L492.9,96.1 L493.9,96.7 L494.9,97.3 L495.9,98.0 L496.9,98.7 L497.9,99.4 L498.9,100.2 L499.9,101.0 L500.9,101.9 L501.9,102.8 L502.9,103.8 L503.9,104.9 L504.9,105.9 L505.9,107.1 L506.9,108.3 L507.9,109.6 L508.9,110.9 L509.9,112.3 L510.9,113.8 L511.9,115.2 L512.9,116.7 L513.9,118.1 L514.9,119.6 L515.9,121.2 L516.9,122.8 L517.9,124.4 L518.9,126.0 L519.9,127.8 L520.9,129.5 L521.9,131.4 L522.9,133.2 L523.9,135.1 L524.9,137.0 L525.9,139.0 L526.9,140.9 L527.9,142.8 L528.9,144.8 L529.9,146.8 L530.9,148.8 L531.9,150.8 L532.9,152.9 L533.9,155.0 L534.9,157.2 L535.9,159.4 L536.9,161.7 L537.9,163.9 L538.9,166.1 L539.9,168.3 L540.9,170.5 L541.8,172.8 L542.7,175.0 L543.7,177.2 L544.6,179.5 L545.5,181.7 L546.5,184.0 L547.4,186.2 L548.4,188.5 L549.3,190.7 L550.2,193.0 L551.2,195.2 L552.1,197.5 L553.0,199.7 L554.0,202.0 L554.9,204.2 L555.8,206.5 L556.8,208.8 L557.7,211.1 L558.6,213.3 L559.6,215.6 L560.3,217.7 L561.1,219.9 L561.8,222.0 L562.6,224.1 L563.4,226.1 L564.1,228.0 L564.9,229.8 L565.8,231.6 L566.7,233.4 L567.6,235.2 L568.6,236.9 L569.5,238.6 L570.4,240.2 L571.3,241.8 L572.3,243.4 L573.2,245.0 L574.1,246.5 L575.0,248.1 L576.0,249.5 L576.9,251.0 L577.8,252.4 L578.7,253.8 L579.6,255.2 L580.6,256.6 L581.5,257.9 L582.5,259.2 L583.5,260.5 L584.4,261.8 L585.4,263.1 L586.3,264.4 L587.3,265.6 L588.3,266.8 L589.2,268.0 L590.2,269.2 L591.1,270.4 L592.1,271.6 L593.1,272.7 L594.0,273.9 L595.0,275.1 L595.9,276.3 L596.9,277.5 L597.9,278.6 L598.8,279.7 L599.8,280.8 L600.8,281.9 L601.7,282.9 L602.7,283.9 L603.6,285.0 L604.6,286.0 L605.6,287.1 L606.5,288.1 L607.5,289.1 L608.4,290.2 L609.4,291.2 L610.4,292.3 L611.3,293.3 L612.3,294.4 L613.2,295.4 L614.2,296.4 L615.2,297.5 L616.1,298.5 L617.1,299.5 L618.0,300.5 L619.0,301.5 L619.9,302.5 L620.9,303.5 L621.8,304.6 L622.8,305.6 L623.8,306.6 L624.7,307.7 L625.7,308.7 L626.6,309.7 L627.6,310.7 L628.5,311.7 L629.5,312.7 L630.4,313.7 L631.4,314.7 L632.3,315.6 L633.3,316.6 L634.2,317.6 L635.2,318.5 L636.1,319.4 L637.1,320.4 L638.1,321.3 L639.0,322.2 L640.0,323.1 L640.9,323.9 L641.9,324.8 L642.8,325.6 L643.8,326.4 L644.7,327.2 L645.6,327.9 L646.6,328.6 L647.5,329.1 L648.5,329.7 L649.4,330.2 L650.4,330.8 L651.3,331.3 L652.2,331.7 L653.2,332.2 L654.1,332.6 L655.1,333.0 L656.0,333.4 L656.9,333.7 L657.9,334.1 L658.8,334.4 L659.8,334.7 L660.7,335.0 L661.6,335.3 L662.6,335.6 L663.5,335.8 L664.5,336.0 L665.4,336.3 L666.3,336.5 L667.3,336.7 L668.2,336.9 L669.1,337.1 L670.1,337.2 L671.0,337.4 L672.0,337.5 L672.9,337.6 L673.9,337.7 L674.9,337.8 L675.8,337.9 L676.8,338.0 L677.8,338.0 L678.8,338.1 L679.7,338.2 L680.7,338.3 L681.7,338.3 L682.6,338.4 L683.6,338.5 L684.6,338.5 L685.5,338.6 L686.5,338.6 L687.5,338.7 L688.4,338.7 L689.4,338.8 L690.4,338.8 L691.3,338.9 L692.3,338.9 L693.3,339.0 L694.3,339.0 L695.2,339.0 L696.2,339.1 L697.2,339.1 L698.1,339.1 L699.1,339.2 L700.1,339.2 L701.0,339.2 L702.0,339.2 L703.0,339.2" stroke="#0000ff" stroke-width="2.5"/>
<path d="M100.0,91.9 L101.0,91.8 L102.0,91.7 L103.0,91.7 L104.0,91.6 L105.0,91.5 L106.0,91.5 L107.0,91.4 L108.0,91.3 L109.0,91.3 L110.0,91.2 L111.0,91.1 L112.0,91.1 L113.0,91.0 L114.0,91.0 L115.0,90.9 L116.0,90.8 L117.0,90.8 L118.0,90.7 L119.0,90.6 L120.0,90.6 L121.0,90.5 L122.0,90.4 L123.0,90.4 L124.0,90.3 L125.0,90.2 L126.0,90.1 L127.0,90.0 L128.0,89.9 L129.0,89.8 L130.0,89.8 L131.0,89.7 L132.0,89.6 L133.0,89.5 L134.0,89.4 L135.0,89.3 L136.0,89.2 L137.0,89.2 L138.0,89.1 L139.0,89.1 L140.0,89.0 L141.0,89.0 L142.0,89.0 L143.0,89.0 L144.0,89.0 L145.0,89.0 L146.0,89.0 L147.0,89.0 L148.0,89.0 L149.0,89.0 L150.0,89.0 L151.0,89.0 L152.0,89.0 L153.0,89.0 L154.0,89.0 L155.0,89.0 L156.0,89.0 L157.0,89.0 L158.0,89.1 L159.0,89.1 L160.0,89.2 L161.0,89.3 L162.0,89.5 L163.0,89.6 L164.0,89.8 L165.0,89.9 L166.0,90.1 L167.0,90.3 L168.0,90.5 L169.0,90.6 L170.0,90.8 L171.0,91.0 L172.0,91.3 L173.0,91.5 L174.0,91.8 L175.0,92.1 L176.0,92.4 L177.0,92.8 L178.0,93.1 L179.0,93.5 L180.0,93.9 L181.0,94.3 L182.0,94.7 L183.0,95.2 L184.0,95.6 L185.0,96.1 L186.0,96.7 L187.0,97.3 L188.0,98.0 L189.0,98.7 L190.0,99.4 L191.0,100.2 L192.0,101.0 L193.0,101.9 L194.0,102.8 L195.0,103.8 L196.0,104.9 L197.0,105.9 L198.0,107.1 L199.0,108.3 L200.0,109.6 L201.0,110.9" stroke="#0000ff" stroke-width="2.5"/>
<path d="M101.8,91.9 L102.8,91.8 L103.8,91.7 L104.8,91.7 L105.8,91.6 L106.8,91.5 L107.8,91.5 L108.8,91.4 L109.8,91.3 L110.8,91.3 L111.8,91.2 L112.8,91.1 L113.8,91.1 L114.8,91.0 L115.8,91.0 L116.8,90.9 L117.8,90.8 L118.8,90.8 L119.8,90.7 L120.8,90.6 L121.8,90.6 L122.8,90.5 L123.8,90.4 L124.8,90.4 L125.8,90.3 L126.8,90.2 L127.8,90.1 L128.8,90.0 L129.8,89.9 L130.8,89.8 L131.8,89.8 L132.8,89.7 L133.8,89.6 L134.8,89.5 L135.8,89.4 L136.8,89.3 L137.8,89.2 L138.8,89.2 L139.8,89.1 L140.8,89.1 L141.8,89.0 L142.8,89.0 L143.8,89.0 L144.8,89.0 L145.8,89.0 L146.8,89.0 L147.8,89.0 L148.8,89.0 L149.8,89.0 L150.8,89.0 L151.8,89.0 L152.8,89.0 L153.8,89.0 L154.8,89.0 L155.8,89.0 L156.8,89.0 L157.8,89.0 L158.8,89.0 L159.8,89.1 L160.8,89.1 L161.8,89.2 L162.8,89.3 L163.8,89.5 L164.8,89.6 L165.8,89.8 L166.8,89.9 L167.8,90.1 L168.8,90.3 L169.8,90.5 L170.8,90.6 L171.8,90.8 L172.8,91.0 L173.8,91.3 L174.8,91.5 L175.8,91.8 L176.8,92.1 L177.8,92.4 L178.8,92.8 L179.8,93.1 L180.8,93.5 L181.8,93.9 L182.8,94.3 L183.8,94.7 L184.8,95.2 L185.8,95.6 L186.8,96.1 L187.8,96.7 L188.8,97.3 L189.8,98.0 L190.8,98.7 L191.8,99.4 L192.8,100.2 L193.8,101.0 L194.8,101.9 L195.8,102.8 L196.8,103.8 L197.8,104.9 L198.8,105.9 L199.8,107.1 L200.8,108.3 L201.8,109.6 L202.8,110.9" stroke="#0000ff" stroke-width="2.5"/>
<path d="M103.2,91.9 L104.2,91.8 L105.2,91.7 L106.2,91.7 L107.2,91.6 L108.2,91.5 L109.2,91.5 L110.2,91.4 L111.2,91.3 L112.2,91.3 L113.2,91.2 L114.2,91.1 L115.2,91.1 L116.2,91.0 L117.2,91.0 L118.2,90.9 L119.2,90.8 L120.2,90.8 L121.2,90.7 L122.2,90.6 L123.2,90.6 L124.2,90.5 L125.2,90.4 L126.2,90.4 L127.2,90.3 L128.2,90.2 L129.2,90.1 L130.2,90.0 L131.2,89.9 L132.2,89.8 L133.2,89.8 L134.2,89.7 L135.2,89.6 L136.2,89.5 L137.2,89.4 L138.2,89.3 L139.2,89.2 L140.2,89.2 L141.2,89.1 L142.2,89.1 L143.2,89.0 L144.2,89.0 L145.2,89.0 L146.2,89.0 L147.2,89.0 L148.2,89.0 L149.2,89.0 L150.2,89.0 L151.2,89.0 L152.2,89.0 L153.2,89.0 L154.2,89.0 L155.2,89.0 L156.2,89.0 L157.2,89.0 L158.2,89.0 L159.2,89.0 L160.2,89.0 L161.2,89.1 L162.2,89.1 L163.2,89.2 L164.2,89.3 L165.2,89.5 L166.2,89.6 L167.2,89.8 L168.2,89.9 L169.2,90.1 L170.2,90.3 L171.2,90.5 L172.2,90.6 L173.2,90.8 L174.2,91.0 L175.2,91.3 L176.2,91.5 L177.2,91.8 L178.2,92.1 L179.2,92.4 L180.2,92.8 L181.2,93.1 L182.2,93.5 L183.2,93.9 L184.2,94.3 L185.2,94.7 L186.2,95.2 L187.2,95.6 L188.2,96.1 L189.2,96.7 L190.2,97.3 L191.2,98.0 L192.2,98.7 L193.2,99.4 L194.2,100.2 L195.2,101.0 L196.2,101.9 L197.2,102.8 L198.2,103.8 L199.2,104.9 L200.2,105.9 L201.2,107.1 L202.2,108.3 L203.2,109.6 L204.2,110.9" stroke="#0000ff" stroke-width="2.5"/>
<path d="M401.2,91.9 L402.2,91.8 L403.2,91.7 L404.2,91.7 L405.2,91.6 L406.2,91.5 L407.2,91.5 L408.2,91.4 L409.2,91.3 L410.2,91.3 L411.2,91.2 L412.2,91.1 L413.2,91.1 L414.2,91.0 L415.2,91.0 L416.2,90.9 L417.2,90.8 L418.2,90.8 L419.2,90.7 L420.2,90.6 L421.2,90.6 L422.2,90.5 L423.2,90.4 L424.2,90.4 L425.2,90.3 L426.2,90.2 L427.2,90.1 L428.2,90.0 L429.2,89.9 L430.2,89.8 L431.2,89.8 L432.2,89.7 L433.2,89.6 L434.2,89.5 L435.2,89.4 L436.2,89.3 L437.2,89.2 L438.2,89.2 L439.2,89.1 L440.2,89.1 L441.2,89.0 L442.2,89.0 L443.2,89.0 L444.2,89.0 L445.2,89.0 L446.2,89.0 L447.2,89.0 L448.2,89.0 L449.2,89.0 L450.2,89.0 L451.2,89.0 L452.2,89.0 L453.2,89.0 L454.2,89.0 L455.2,89.0 L456.2,89.0 L457.2,89.0 L458.2,89.0 L459.2,89.1 L460.2,89.1 L461.2,89.2 L462.2,89.3 L463.2,89.5 L464.2,89.6 L465.2,89.8 L466.2,89.9 L467.2,90.1 L468.2,90.3 L469.2,90.5 L470.2,90.6 L471.2,90.8 L472.2,91.0 L473.2,91.3 L474.2,91.5 L475.2,91.8 L476.2,92.1 L477.2,92.4 L478.2,92.8 L479.2,93.1 L480.2,93.5 L481.2,93.9 L482.2,94.3 L483.2,94.7 L484.2,95.2 L485.2,95.6 L486.2,96.1 L487.2,96.7 L488.2,97.3 L489.2,98.0 L490.2,98.7 L491.2,99.4 L492.2,100.2 L493.2,101.0 L494.2,101.9 L495.2,102.8 L496.2,103.8 L497.2,104.9 L498.2,105.9 L499.2,107.1 L500.2,108.3 L501.2,109.6 L502.2,110.9" stroke="#0000ff" stroke-width="2.5"/>
<path d="M403.0,91.9 L404.0,91.8 L405.0,91.7 L406.0,91.7 L407.0,91.6 L408.0,91.5 L409.0,91.5 L410.0,91.4 L411.0,91.3 L412.0,91.3 L413.0,91.2 L414.0,91.1 L415.0,91.1 L416.0,91.0 L417.0,91.0 L418.0,90.9 L419.0,90.8 L420.0,90.8 L421.0,90.7 L422.0,90.6 L423.0,90.6 L424.0,90.5 L425.0,90.4 L426.0,90.4 L427.0,90.3 L428.0,90.2 L429.0,90.1 L430.0,90.0 L431.0,89.9 L432.0,89.8 L433.0,89.8 L434.0,89.7 L435.0,89.6 L436.0,89.5 L437.0,89.4 L438.0,89.3 L439.0,89.2 L440.0,89.2 L441.0,89.1 L442.0,89.1 L443.0,89.0 L444.0,89.0 L445.0,89.0 L446.0,89.0 L447.0,89.0 L448.0,89.0 L449.0,89.0 L450.0,89.0 L451.0,89.0 L452.0,89.0 L453.0,89.0 L454.0,89.0 L455.0,89.0 L456.0,89.0 L457.0,89.0 L458.0,89.0 L459.0,89.0 L460.0,89.0 L461.0,89.1 L462.0,89.1 L463.0,89.2 L464.0,89.3 L465.0,89.5 L466.0,89.6 L467.0,89.8 L468.0,89.9 L469.0,90.1 L470.0,90.3 L471.0,90.5 L472.0,90.6 L473.0,90.8 L474.0,91.0 L475.0,91.3 L476.0,91.5 L477.0,91.8 L478.0,92.1 L479.0,92.4 L480.0,92.8 L481.0,93.1 L482.0,93.5 L483.0,93.9 L484.0,94.3 L485.0,94.7 L486.0,95.2 L487.0,95.6 L488.0,96.1 L489.0,96.7 L490.0,97.3 L491.0,98.0 L492.0,98.7 L493.0,99.4 L494.0,100.2 L495.0,101.0 L496.0,101.9 L497.0,102.8 L498.0,103.8 L499.0,104.9 L500.0,105.9 L501.0,107.1 L502.0,108.3 L503.0,109.6 L504.0,110.9" stroke="#0000ff" stroke-width="2.5"/>
<path d="M404.4,91.9 L405.4,91.8 L406.4,91.7 L407.4,91.7 L408.4,91.6 L409.4,91.5 L410.4,91.5 L411.4,91.4 L412.4,91.3 L413.4,91.3 L414.4,91.2 L415.4,91.1 L416.4,91.1 L417.4,91.0 L418.4,91.0 L419.4,90.9 L420.4,90.8 L421.4,90.8 L422.4,90.7 L423.4,90.6 L424.4,90.6 L425.4,90.5 L426.4,90.4 L427.4,90.4 L428.4,90.3 L429.4,90.2 L430.4,90.1 L431.4,90.0 L432.4,89.9 L433.4,89.8 L434.4,89.8 L435.4,89.7 L436.4,89.6 L437.4,89.5 L438.4,89.4 L439.4,89.3 L440.4,89.2 L441.4,89.2 L442.4,89.1 L443.4,89.1 L444.4,89.0 L445.4,89.0 L446.4,89.0 L447.4,89.0 L448.4,89.0 L449.4,89.0 L450.4,89.0 L451.4,89.0 L452.4,89.0 L453.4,89.0 L454.4,89.0 L455.4,89.0 L456.4,89.0 L457.4,89.0 L458.4,89.0 L459.4,89.0 L460.4,89.0 L461.4,89.0 L462.4,89.1 L463.4,89.1 L464.4,89.2 L465.4,89.3 L466.4,89.5 L467.4,89.6 L468.4,89.8 L469.4,89.9 L470.4,90.1 L471.4,90.3 L472.4,90.5 L473.4,90.6 L474.4,90.8 L475.4,91.0 L476.4,91.3 L477.4,91.5 L478.4,91.8 L479.4,92.1 L480.4,92.4 L481.4,92.8 L482.4,93.1 L483.4,93.5 L484.4,93.9 L485.4,94.3 L486.4,94.7 L487.4,95.2 L488.4,95.6 L489.4,96.1 L490.4,96.7 L491.4,97.3 L492.4,98.0 L493.4,98.7 L494.4,99.4 L495.4,100.2 L496.4,101.0 L497.4,101.9 L498.4,102.8 L499.4,103.8 L500.4,104.9 L501.4,105.9 L502.4,107.1 L503.4,108.3 L504.4,109.6 L505.4,110.9" stroke="#0000ff" stroke-width="2.5"/>
<path d="M273.6,241.8 L274.5,243.4 L275.4,245.0 L276.2,246.5 L277.1,248.1 L278.0,249.5 L278.9,251.0 L279.8,252.4 L280.6,253.8 L281.5,255.2 L282.4,256.6 L283.4,257.9 L284.3,259.2 L285.3,260.5 L286.3,261.8 L287.2,263.1 L288.2,264.4 L289.1,265.6 L290.1,266.8 L291.1,268.0 L292.0,269.2 L293.0,270.4 L294.0,271.6 L294.9,272.7 L295.9,273.9 L296.9,275.1 L297.8,276.3 L298.8,277.5 L299.8,278.6 L300.7,279.7 L301.7,280.8 L302.6,281.9 L303.6,282.9 L304.6,283.9 L305.5,285.0 L306.5,286.0 L307.5,287.1 L308.4,288.1 L309.4,289.1 L310.4,290.2 L311.3,291.2 L312.3,292.3 L313.2,293.3 L314.2,294.4 L315.2,295.4 L316.1,296.4 L317.1,297.5 L318.0,298.5 L319.0,299.5 L319.9,300.5 L320.8,301.5 L321.8,302.5 L322.7,303.5 L323.7,304.6 L324.6,305.6 L325.5,306.6 L326.5,307.7 L327.4,308.7 L328.3,309.7 L329.3,310.7 L330.2,311.7 L331.2,312.7 L332.1,313.7 L333.0,314.7 L334.0,315.6 L334.9,316.6 L335.8,317.6 L336.8,318.5 L337.7,319.4 L338.6,320.4 L339.6,321.3 L340.5,322.2 L341.5,323.1 L342.4,323.9 L343.3,324.8 L344.3,325.6 L345.2,326.4 L346.1,327.2 L347.0,327.9 L347.9,328.6 L348.8,329.1 L349.7,329.7 L350.6,330.2 L351.5,330.8 L352.4,331.3 L353.3,331.7 L354.2,332.2 L355.1,332.6 L356.0,333.0 L357.0,333.4 L357.9,333.7 L358.8,334.1 L359.7,334.4 L360.6,334.7 L361.5,335.0 L362.4,335.3 L363.3,335.6 L364.2,335.8 L365.1,336.0 L366.0,336.3 L366.9,336.5 L367.8,336.7" stroke="#0000ff" stroke-width="1.3"/>
<path d="M573.2,241.8 L574.1,243.4 L575.0,245.0 L575.9,246.5 L576.8,248.1 L577.7,249.5 L578.6,251.0 L579.6,252.4 L580.5,253.8 L581.4,255.2 L582.3,256.6 L583.2,257.9 L584.2,259.2 L585.2,260.5 L586.1,261.8 L587.1,263.1 L588.1,264.4 L589.0,265.6 L590.0,266.8 L590.9,268.0 L591.9,269.2 L592.9,270.4 L593.8,271.6 L594.8,272.7 L595.8,273.9 L596.7,275.1 L597.7,276.3 L598.7,277.5 L599.6,278.6 L600.6,279.7 L601.5,280.8 L602.5,281.9 L603.5,282.9 L604.4,283.9 L605.4,285.0 L606.4,286.0 L607.3,287.1 L608.3,288.1 L609.3,289.1 L610.2,290.2 L611.2,291.2 L612.2,292.3 L613.1,293.3 L614.1,294.4 L615.0,295.4 L616.0,296.4 L617.0,297.5 L617.9,298.5 L618.9,299.5 L619.8,300.5 L620.8,301.5 L621.7,302.5 L622.6,303.5 L623.6,304.6 L624.5,305.6 L625.5,306.6 L626.4,307.7 L627.4,308.7 L628.3,309.7 L629.3,310.7 L630.2,311.7 L631.2,312.7 L632.1,313.7 L633.1,314.7 L634.0,315.6 L635.0,316.6 L635.9,317.6 L636.9,318.5 L637.8,319.4 L638.7,320.4 L639.7,321.3 L640.6,322.2 L641.6,323.1 L642.5,323.9 L643.5,324.8 L644.4,325.6 L645.4,326.4 L646.3,327.2 L647.3,327.9 L648.2,328.6 L649.2,329.1 L650.1,329.7 L651.1,330.2 L652.0,330.8 L653.0,331.3 L654.0,331.7 L654.9,332.2 L655.9,332.6 L656.8,333.0 L657.8,333.4 L658.7,333.7 L659.7,334.1 L660.6,334.4 L661.6,334.7 L662.5,335.0 L663.5,335.3 L664.4,335.6 L665.4,335.8 L666.3,336.0 L667.3,336.3 L668.2,336.5 L669.2,336.7 L670.2,336.9 L671.1,337.1 L672.1,337.2 L673.0,337.4 L674.0,337.5 L674.9,337.6 L675.9,337.7 L676.9,337.8 L677.8,337.9 L678.8,338.0" stroke="#0000ff" stroke-width="1.8"/>
<path d="M574.8,241.8 L575.6,243.4 L576.5,245.0 L577.4,246.5 L578.3,248.1 L579.2,249.5 L580.1,251.0 L580.9,252.4 L581.8,253.8 L582.7,255.2 L583.6,256.6 L584.5,257.9 L585.5,259.2 L586.5,260.5 L587.4,261.8 L588.4,263.1 L589.4,264.4 L590.3,265.6 L591.3,266.8 L592.2,268.0 L593.2,269.2 L594.2,270.4 L595.1,271.6 L596.1,272.7 L597.1,273.9 L598.0,275.1 L599.0,276.3 L600.0,277.5 L600.9,278.6 L601.9,279.7 L602.8,280.8 L603.8,281.9 L604.8,282.9 L605.7,283.9 L606.7,285.0 L607.7,286.0 L608.6,287.1 L609.6,288.1 L610.6,289.1 L611.5,290.2 L612.5,291.2 L613.5,292.3 L614.4,293.3 L615.4,294.4 L616.3,295.4 L617.3,296.4 L618.3,297.5 L619.2,298.5 L620.1,299.5 L621.1,300.5 L622.0,301.5 L623.0,302.5 L623.9,303.5 L624.8,304.6 L625.8,305.6 L626.7,306.6 L627.6,307.7 L628.6,308.7 L629.5,309.7 L630.4,310.7 L631.4,311.7 L632.3,312.7 L633.3,313.7 L634.2,314.7 L635.1,315.6 L636.1,316.6 L637.0,317.6 L637.9,318.5 L638.9,319.4 L639.8,320.4 L640.8,321.3 L641.7,322.2 L642.6,323.1 L643.6,323.9 L644.5,324.8 L645.4,325.6 L646.4,326.4 L647.3,327.2 L648.2,327.9 L649.1,328.6 L650.0,329.1 L650.9,329.7 L651.8,330.2 L652.7,330.8 L653.6,331.3 L654.5,331.7 L655.4,332.2 L656.3,332.6 L657.2,333.0 L658.1,333.4 L659.0,333.7 L659.9,334.1 L660.8,334.4 L661.7,334.7 L662.6,335.0 L663.5,335.3 L664.5,335.6 L665.4,335.8 L666.3,336.0 L667.2,336.3 L668.1,336.5 L669.0,336.7 L670.0,336.9 L671.0,337.1 L672.0,337.2 L673.0,337.4 L674.0,337.5 L675.0,337.6 L676.0,337.7 L677.0,337.8 L678.0,337.9 L679.0,338.0" stroke="#0000ff" stroke-width="1.8"/>
<path d="M576.0,241.8 L576.9,243.4 L577.7,245.0 L578.6,246.5 L579.5,248.1 L580.4,249.5 L581.2,251.0 L582.1,252.4 L583.0,253.8 L583.9,255.2 L584.8,256.6 L585.7,257.9 L586.7,259.2 L587.7,260.5 L588.6,261.8 L589.6,263.1 L590.6,264.4 L591.5,265.6 L592.5,266.8 L593.4,268.0 L594.4,269.2 L595.4,270.4 L596.3,271.6 L597.3,272.7 L598.3,273.9 L599.2,275.1 L600.2,276.3 L601.2,277.5 L602.1,278.6 L603.1,279.7 L604.0,280.8 L605.0,281.9 L606.0,282.9 L606.9,283.9 L607.9,285.0 L608.9,286.0 L609.8,287.1 L610.8,288.1 L611.8,289.1 L612.7,290.2 L613.7,291.2 L614.7,292.3 L615.6,293.3 L616.6,294.4 L617.5,295.4 L618.5,296.4 L619.5,297.5 L620.4,298.5 L621.3,299.5 L622.3,300.5 L623.2,301.5 L624.2,302.5 L625.1,303.5 L626.0,304.6 L627.0,305.6 L627.9,306.6 L628.8,307.7 L629.8,308.7 L630.7,309.7 L631.6,310.7 L632.6,311.7 L633.5,312.7 L634.5,313.7 L635.4,314.7 L636.3,315.6 L637.3,316.6 L638.2,317.6 L639.1,318.5 L640.1,319.4 L641.0,320.4 L642.0,321.3 L642.9,322.2 L643.8,323.1 L644.8,323.9 L645.7,324.8 L646.6,325.6 L647.6,326.4 L648.5,327.2 L649.4,327.9 L650.3,328.6 L651.2,329.1 L652.1,329.7 L653.0,330.2 L653.9,330.8 L654.8,331.3 L655.7,331.7 L656.6,332.2 L657.5,332.6 L658.4,333.0 L659.3,333.4 L660.2,333.7 L661.1,334.1 L662.0,334.4 L662.9,334.7 L663.8,335.0 L664.7,335.3 L665.6,335.6 L666.6,335.8 L667.5,336.0 L668.4,336.3 L669.3,336.5 L670.2,336.7 L671.2,336.9 L672.2,337.1 L673.2,337.2 L674.2,337.4 L675.2,337.5 L676.2,337.6 L677.2,337.7 L678.2,337.8 L679.2,337.9 L680.2,338.0" stroke="#0000ff" stroke-width="1.8"/>
<path d="M94.8,91.9 L95.8,91.8 L96.8,91.7 L97.8,91.7 L98.8,91.6 L99.8,91.5 L100.8,91.5 L101.8,91.4 L102.8,91.3 L103.8,91.3 L104.8,91.2 L105.8,91.1 L106.8,91.1 L107.8,91.0 L108.8,91.0 L109.8,90.9 L110.8,90.8 L111.8,90.8 L112.8,90.7 L113.8,90.6 L114.8,90.6 L115.8,90.5 L116.8,90.4 L117.8,90.4 L118.8,90.3 L119.8,90.2 L120.8,90.1 L121.8,90.0 L122.8,89.9 L123.8,89.8 L124.8,89.8 L125.8,89.7 L126.8,89.6 L127.8,89.5 L128.8,89.4 L129.8,89.3 L130.8,89.2 L131.8,89.2 L132.8,89.1 L133.8,89.1 L134.8,89.0 L135.8,89.0 L136.8,89.0 L137.8,89.0 L138.8,89.0 L139.8,89.0 L140.8,89.0 L141.8,89.0 L142.8,89.0 L143.8,89.0 L144.8,89.0 L145.8,89.0 L146.8,89.0 L147.8,89.0 L148.8,89.0 L149.8,89.0 L150.8,89.0 L151.8,89.0 L152.8,89.1 L153.8,89.1 L154.8,89.2 L155.8,89.3 L156.8,89.5 L157.8,89.6 L158.8,89.8 L159.8,89.9 L160.8,90.1 L161.8,90.3 L162.8,90.5 L163.8,90.6 L164.8,90.8 L165.8,91.0 L166.8,91.3 L167.8,91.5 L168.8,91.8 L169.8,92.1 L170.8,92.4 L171.8,92.8 L172.8,93.1 L173.8,93.5 L174.8,93.9 L175.8,94.3 L176.8,94.7 L177.8,95.2 L178.8,95.6 L179.8,96.1 L180.8,96.7 L181.8,97.3 L182.8,98.0 L183.8,98.7 L184.8,99.4 L185.8,100.2 L186.8,101.0 L187.8,101.9 L188.8,102.8 L189.8,103.8 L190.8,104.9 L191.8,105.9 L192.8,107.1 L193.8,108.3 L194.8,109.6 L195.8,110.9 L196.8,112.3 L197.8,113.8 L198.8,115.2 L199.8,116.7 L200.8,118.1 L201.8,119.6 L202.8,121.2 L203.8,122.8 L204.8,124.4 L205.8,126.0 L206.8,127.8 L207.8,129.5 L208.8,131.4 L209.8,133.2 L210.8,135.1 L211.8,137.0 L212.8,139.0 L213.8,140.9 L214.8,142.8 L215.8,144.8 L216.8,146.8 L217.8,148.8 L218.8,150.8 L219.8,152.9 L220.8,155.0 L221.8,157.2 L222.8,159.4 L223.8,161.7 L224.8,163.9 L225.8,166.1 L226.8,168.3 L227.8,170.5 L228.8,172.8 L229.8,175.0 L230.8,177.2 L231.8,179.5 L232.8,181.7 L233.8,184.0 L234.8,186.2 L235.8,188.5 L236.8,190.7 L237.8,193.0 L238.8,195.2 L239.8,197.5 L240.8,199.7 L241.8,202.0 L242.8,204.2 L243.8,206.5 L244.8,208.8 L245.8,211.1 L246.8,213.3 L247.8,215.6 L248.8,217.7 L249.8,219.9 L250.8,222.0 L251.8,224.1 L252.8,226.1 L253.8,228.0 L254.8,229.8 L255.8,231.6 L256.8,233.4 L257.8,235.2 L258.8,236.9 L259.8,238.6 L260.8,240.2 L261.8,241.8 L262.8,243.4 L263.8,245.0 L264.8,246.5 L265.8,248.1 L266.8,249.5 L267.8,251.0 L268.8,252.4 L269.8,253.8 L270.8,255.2 L271.8,256.6 L272.8,257.9 L273.8,259.2 L274.8,260.5 L275.8,261.8 L276.8,263.1 L277.8,264.4 L278.8,265.6 L279.8,266.8 L280.8,268.0 L281.8,269.2 L282.8,270.4 L283.8,271.6 L284.8,272.7 L285.8,273.9 L286.8,275.1 L287.8,276.3 L288.8,277.5 L289.8,278.6 L290.8,279.7 L291.8,280.8 L292.8,281.9 L293.8,282.9 L294.8,283.9 L295.8,285.0 L296.8,286.0 L297.8,287.1 L298.8,288.1 L299.8,289.1 L300.8,290.2 L301.8,291.2 L302.8,292.3 L303.8,293.3 L304.8,294.4 L305.8,295.4 L306.8,296.4 L307.8,297.5 L308.8,298.5 L309.8,299.5 L310.8,300.5 L311.8,301.5 L312.8,302.5 L313.8,303.5 L314.8,304.6 L315.8,305.6 L316.8,306.6 L317.8,307.7 L318.8,308.7 L319.8,309.7 L320.8,310.7 L321.8,311.7 L322.8,312.7 L323.8,313.7 L324.8,314.7 L325.8,315.6 L326.8,316.6 L327.8,317.6 L328.8,318.5 L329.8,319.4 L330.8,320.4 L331.8,321.3 L332.8,322.2 L333.8,323.1 L334.8,323.9 L335.8,324.8 L336.8,325.6 L337.8,326.4 L338.8,327.2 L339.8,327.9 L340.8,328.6 L341.8,329.1 L342.8,329.7 L343.8,330.2 L344.8,330.8 L345.8,331.3 L346.8,331.7 L347.8,332.2 L348.8,332.6 L349.8,333.0 L350.8,333.4 L351.8,333.7 L352.8,334.1 L353.8,334.4 L354.8,334.7 L355.8,335.0 L356.8,335.3 L357.8,335.6 L358.8,335.8 L359.8,336.0 L360.8,336.3 L361.8,336.5 L362.8,336.7 L363.8,336.9 L364.8,337.1 L365.8,337.2 L366.8,337.4 L367.8,337.5 L368.8,337.6 L369.8,337.7 L370.8,337.8 L371.8,337.9 L372.8,338.0 L373.8,338.0 L374.8,338.1 L375.8,338.2 L376.8,338.3 L377.8,338.3 L378.8,338.4 L379.8,338.5 L380.8,338.5 L381.8,338.6 L382.8,338.6 L383.8,338.7 L384.8,338.7 L385.8,338.8 L386.8,338.8 L387.8,338.9 L388.8,338.9 L389.8,339.0 L390.8,339.0 L391.8,339.0 L392.8,339.1 L393.8,339.1 L394.8,339.1 L395.8,339.2 L396.8,339.2 L397.8,339.2 L398.8,339.2 L399.8,339.2" stroke="#0a64ff" stroke-width="3"/>
<path d="M94.8,91.9 L95.8,91.8 L96.8,91.7 L97.8,91.7 L98.8,91.6 L99.8,91.5 L100.8,91.5 L101.8,91.4 L102.8,91.3 L103.8,91.3 L104.8,91.2 L105.8,91.1 L106.8,91.1 L107.8,91.0 L108.8,91.0 L109.8,90.9 L110.8,90.8 L111.8,90.8 L112.8,90.7 L113.8,90.6 L114.8,90.6 L115.8,90.5 L116.8,90.4 L117.8,90.4 L118.8,90.3 L119.8,90.2 L120.8,90.1 L121.8,90.0 L122.8,89.9 L123.8,89.8 L124.8,89.8 L125.8,89.7 L126.8,89.6 L127.8,89.5 L128.8,89.4 L129.8,89.3 L130.8,89.2 L131.8,89.2 L132.8,89.1 L133.8,89.1 L134.8,89.0 L135.8,89.0 L136.8,89.0 L137.8,89.0 L138.8,89.0 L139.8,89.0 L140.8,89.0 L141.8,89.0 L142.8,89.0 L143.8,89.0 L144.8,89.0 L145.8,89.0 L146.8,89.0 L147.8,89.0 L148.8,89.0 L149.8,89.0 L150.8,89.0 L151.8,89.0 L152.8,89.1 L153.8,89.1 L154.8,89.2 L155.8,89.3 L156.8,89.5 L157.8,89.6 L158.8,89.8 L159.8,89.9 L160.8,90.1 L161.8,90.3 L162.8,90.5 L163.8,90.6 L164.8,90.8 L165.8,91.0 L166.8,91.3 L167.8,91.5 L168.8,91.8 L169.8,92.1 L170.8,92.4 L171.8,92.8 L172.8,93.1 L173.8,93.5 L174.8,93.9 L175.8,94.3 L176.8,94.7 L177.8,95.2 L178.8,95.6 L179.8,96.1 L180.8,96.7 L181.8,97.3 L182.8,98.0 L183.8,98.7 L184.8,99.4 L185.8,100.2 L186.8,101.0 L187.8,101.9 L188.8,102.8 L189.8,103.8 L190.8,104.9 L191.8,105.9 L192.8,107.1 L193.8,108.3 L194.8,109.6 L195.8,110.9 L196.8,112.3 L197.8,113.8 L198.8,115.2 L199.8,116.7 L200.8,118.1 L201.8,119.6 L202.8,121.2 L203.8,122.8 L204.8,124.4 L205.8,126.0 L206.8,127.8 L207.8,129.5 L208.8,131.4 L209.8,133.2 L210.8,135.1 L211.8,137.0 L212.8,139.0 L213.8,140.9 L214.8,142.8 L215.8,144.8 L216.8,146.8 L217.8,148.8 L218.8,150.8 L219.8,152.9 L220.8,155.0 L221.8,157.2 L222.8,159.4 L223.8,161.7 L224.8,163.9 L225.8,166.1 L226.8,168.3 L227.8,170.5 L228.8,172.8 L229.8,175.0 L230.8,177.2 L231.8,179.5 L232.8,181.7 L233.8,184.0 L234.8,186.2 L235.8,188.5 L236.8,190.7 L237.8,193.0 L238.8,195.2 L239.8,197.5 L240.8,199.7 L241.8,202.0 L242.8,204.2 L243.8,206.5 L244.8,208.8 L245.8,211.1 L246.8,213.3 L247.8,215.6 L248.8,217.7 L249.8,219.9 L250.8,222.0 L251.8,224.1 L252.8,226.1 L253.8,228.0 L254.8,229.8 L255.8,231.6 L256.8,233.4 L257.8,235.2 L258.8,236.9 L259.8,238.6 L260.8,240.2 L261.8,241.8 L262.8,243.4 L263.8,245.0 L264.8,246.5 L265.8,248.1 L266.8,249.5 L267.8,251.0 L268.8,252.4 L269.8,253.8 L270.8,255.2 L271.8,256.6 L272.8,257.9 L273.8,259.2 L274.8,260.5 L275.8,261.8 L276.8,263.1 L277.8,264.4 L278.8,265.6 L279.8,266.8 L280.8,268.0 L281.8,269.2 L282.8,270.4 L283.8,271.6 L284.8,272.7 L285.8,273.9 L286.8,275.1 L287.8,276.3 L288.8,277.5 L289.8,278.6 L290.8,279.7 L291.8,280.8 L292.8,281.9 L293.8,282.9 L294.8,283.9 L295.8,285.0 L296.8,286.0 L297.8,287.1 L298.8,288.1 L299.8,289.1 L300.8,290.2 L301.8,291.2 L302.8,292.3 L303.8,293.3 L304.8,294.4 L305.8,295.4 L306.8,296.4 L307.8,297.5 L308.8,298.5 L309.8,299.5 L310.8,300.5 L311.8,301.5 L312.8,302.5 L313.8,303.5 L314.8,304.6 L315.8,305.6 L316.8,306.6 L317.8,307.7 L318.8,308.7 L319.8,309.7 L320.8,310.7 L321.8,311.7 L322.8,312.7 L323.8,313.7 L324.8,314.7 L325.8,315.6 L326.8,316.6 L327.8,317.6 L328.8,318.5 L329.8,319.4 L330.8,320.4 L331.8,321.3 L332.8,322.2 L333.8,323.1 L334.8,323.9 L335.8,324.8 L336.8,325.6 L337.8,326.4 L338.8,327.2 L339.8,327.9 L340.8,328.6 L341.8,329.1 L342.8,329.7 L343.8,330.2 L344.8,330.8 L345.8,331.3 L346.8,331.7 L347.8,332.2 L348.8,332.6 L349.8,333.0 L350.8,333.4 L351.8,333.7 L352.8,334.1 L353.8,334.4 L354.8,334.7 L355.8,335.0 L356.8,335.3 L357.8,335.6 L358.8,335.8 L359.8,336.0 L360.8,336.3 L361.8,336.5 L362.8,336.7 L363.8,336.9 L364.8,337.1 L365.8,337.2 L366.8,337.4 L367.8,337.5 L368.8,337.6 L369.8,337.7 L370.8,337.8 L371.8,337.9 L372.8,338.0 L373.8,338.0 L374.8,338.1 L375.8,338.2 L376.8,338.3 L377.8,338.3 L378.8,338.4 L379.8,338.5 L380.8,338.5 L381.8,338.6 L382.8,338.6 L383.8,338.7 L384.8,338.7 L385.8,338.8 L386.8,338.8 L387.8,338.9 L388.8,338.9 L389.8,339.0 L390.8,339.0 L391.8,339.0 L392.8,339.1 L393.8,339.1 L394.8,339.1 L395.8,339.2 L396.8,339.2 L397.8,339.2 L398.8,339.2 L399.8,339.2" stroke="#00dcff" stroke-width="1.8"/>
<path d="M399.0,339.2 L400.0,339.3 L401.0,339.4 L402.0,339.4 L403.0,339.5 L404.0,339.6 L405.0,339.6 L406.0,339.7 L407.0,339.8 L408.0,339.8 L409.0,339.9 L410.0,340.0 L411.0,340.0 L412.0,340.1 L413.0,340.1 L414.0,340.2 L415.0,340.3 L416.0,340.3 L417.0,340.4 L418.0,340.5 L419.0,340.5 L420.0,340.6 L421.0,340.7 L422.0,340.8 L423.0,340.8 L424.0,340.9 L425.0,341.0 L426.0,341.1 L427.0,341.2 L428.0,341.3 L429.0,341.3 L430.0,341.4 L431.0,341.5 L432.0,341.6 L433.0,341.7 L434.0,341.8 L435.0,341.9 L436.0,341.9 L437.0,342.0 L438.0,342.0 L439.0,342.1 L440.0,342.1 L441.0,342.1 L442.0,342.1 L443.0,342.1 L444.0,342.1 L445.0,342.1 L446.0,342.1 L447.0,342.1 L448.0,342.1 L449.0,342.1 L450.0,342.1 L451.0,342.1 L452.0,342.1 L453.0,342.1 L454.0,342.1 L455.0,342.1 L456.0,342.1 L457.0,342.0 L458.0,342.0 L459.0,341.9 L460.0,341.8 L461.0,341.6 L462.0,341.5 L463.0,341.3 L464.0,341.2 L465.0,341.0 L466.0,340.8 L467.0,340.6 L468.0,340.5 L469.0,340.3 L470.0,340.1 L471.0,339.8 L472.0,339.6 L473.0,339.3 L474.0,339.0 L475.0,338.7 L476.0,338.3 L477.0,338.0 L478.0,337.6 L479.0,337.2 L480.0,336.8 L481.0,336.4 L482.0,335.9 L483.0,335.5 L484.0,335.0 L485.0,334.4 L486.0,333.8 L487.0,333.1 L488.0,332.4 L489.0,331.7 L490.0,330.9 L491.0,330.1 L492.0,329.2 L493.0,328.3 L494.0,327.3 L495.0,326.2 L496.0,325.2 L497.0,324.0 L498.0,322.8 L499.0,321.5 L500.0,320.2 L501.0,318.8 L502.0,317.3 L503.0,315.9 L504.0,314.4 L505.0,313.0 L506.0,311.5 L507.0,309.9 L508.0,308.3 L509.0,306.7 L510.0,305.1 L511.0,303.3 L512.0,301.6 L513.0,299.7 L514.0,297.9 L515.0,296.0 L516.0,294.1 L517.0,292.1 L518.0,290.2 L519.0,288.3 L520.0,286.3 L521.0,284.3 L522.0,282.3 L523.0,280.3 L524.0,278.2 L525.0,276.1 L526.0,273.9 L527.0,271.7 L528.0,269.4 L529.0,267.2 L530.0,265.0 L531.0,262.8 L532.0,260.6 L533.0,258.3 L534.0,256.1 L535.0,253.9 L536.0,251.6 L537.0,249.4 L538.0,247.1 L539.0,244.9 L540.0,242.6 L541.0,240.4 L542.0,238.2 L543.0,235.9 L544.0,233.6 L545.0,231.4 L546.0,229.1 L547.0,226.9 L548.0,224.6 L549.0,222.3 L550.0,220.0 L551.0,217.8 L552.0,215.6 L553.0,213.3 L554.0,211.1 L555.0,208.9 L556.0,206.7 L557.0,204.6 L558.0,202.4 L559.0,200.3 L560.0,198.1 L561.0,196.1 L562.0,194.1 L563.0,192.1 L564.0,190.2 L565.0,188.3 L566.0,186.4 L567.0,184.6 L568.0,182.9 L569.0,181.2 L570.0,179.6 L571.0,178.0 L572.0,176.5 L573.0,175.0 L574.0,173.6 L575.0,172.1 L576.0,170.7 L577.0,169.3 L578.0,167.9 L579.0,166.5 L580.0,165.2 L581.0,163.9 L582.0,162.6 L583.0,161.3 L584.0,160.1 L585.0,158.8 L586.0,157.6 L587.0,156.4 L588.0,155.2 L589.0,154.1 L590.0,152.9 L591.0,151.7 L592.0,150.6 L593.0,149.4 L594.0,148.2 L595.0,147.1 L596.0,146.0 L597.0,144.8 L598.0,143.7 L599.0,142.6 L600.0,141.5 L601.0,140.4 L602.0,139.3 L603.0,138.2 L604.0,137.1 L605.0,136.0 L606.0,134.9 L607.0,133.8 L608.0,132.8 L609.0,131.7 L610.0,130.7 L611.0,129.6 L612.0,128.6 L613.0,127.5 L614.0,126.5 L615.0,125.5 L616.0,124.4 L617.0,123.4 L618.0,122.4 L619.0,121.4 L620.0,120.4 L621.0,119.4 L622.0,118.5 L623.0,117.5 L624.0,116.6 L625.0,115.7 L626.0,114.8 L627.0,114.0 L628.0,113.1 L629.0,112.3 L630.0,111.5 L631.0,110.7 L632.0,110.0 L633.0,109.2 L634.0,108.5 L635.0,107.8 L636.0,107.1 L637.0,106.4 L638.0,105.7 L639.0,105.1 L640.0,104.4 L641.0,103.8 L642.0,103.1 L643.0,102.5 L644.0,101.9 L645.0,101.4 L646.0,100.8 L647.0,100.2 L648.0,99.7 L649.0,99.2 L650.0,98.7 L651.0,98.2 L652.0,97.8 L653.0,97.4 L654.0,97.1 L655.0,96.8 L656.0,96.5 L657.0,96.2 L658.0,95.9 L659.0,95.7 L660.0,95.5 L661.0,95.3 L662.0,95.1 L663.0,94.9 L664.0,94.7 L665.0,94.5 L666.0,94.3 L667.0,94.2 L668.0,94.0 L669.0,93.9 L670.0,93.7 L671.0,93.6 L672.0,93.5 L673.0,93.4 L674.0,93.3 L675.0,93.3 L676.0,93.2 L677.0,93.1 L678.0,93.0 L679.0,92.9 L680.0,92.9 L681.0,92.8 L682.0,92.7 L683.0,92.7 L684.0,92.6 L685.0,92.6 L686.0,92.5 L687.0,92.5 L688.0,92.4 L689.0,92.4 L690.0,92.3 L691.0,92.3 L692.0,92.2 L693.0,92.2 L694.0,92.2 L695.0,92.1 L696.0,92.1 L697.0,92.0 L698.0,92.0 L699.0,92.0 L700.0,91.9 L701.0,91.9 L702.0,91.9 L703.0,91.9 L704.0,91.9" stroke="#0a64ff" stroke-width="3"/>
<path d="M399.0,339.2 L400.0,339.3 L401.0,339.4 L402.0,339.4 L403.0,339.5 L404.0,339.6 L405.0,339.6 L406.0,339.7 L407.0,339.8 L408.0,339.8 L409.0,339.9 L410.0,340.0 L411.0,340.0 L412.0,340.1 L413.0,340.1 L414.0,340.2 L415.0,340.3 L416.0,340.3 L417.0,340.4 L418.0,340.5 L419.0,340.5 L420.0,340.6 L421.0,340.7 L422.0,340.8 L423.0,340.8 L424.0,340.9 L425.0,341.0 L426.0,341.1 L427.0,341.2 L428.0,341.3 L429.0,341.3 L430.0,341.4 L431.0,341.5 L432.0,341.6 L433.0,341.7 L434.0,341.8 L435.0,341.9 L436.0,341.9 L437.0,342.0 L438.0,342.0 L439.0,342.1 L440.0,342.1 L441.0,342.1 L442.0,342.1 L443.0,342.1 L444.0,342.1 L445.0,342.1 L446.0,342.1 L447.0,342.1 L448.0,342.1 L449.0,342.1 L450.0,342.1 L451.0,342.1 L452.0,342.1 L453.0,342.1 L454.0,342.1 L455.0,342.1 L456.0,342.1 L457.0,342.0 L458.0,342.0 L459.0,341.9 L460.0,341.8 L461.0,341.6 L462.0,341.5 L463.0,341.3 L464.0,341.2 L465.0,341.0 L466.0,340.8 L467.0,340.6 L468.0,340.5 L469.0,340.3 L470.0,340.1 L471.0,339.8 L472.0,339.6 L473.0,339.3 L474.0,339.0 L475.0,338.7 L476.0,338.3 L477.0,338.0 L478.0,337.6 L479.0,337.2 L480.0,336.8 L481.0,336.4 L482.0,335.9 L483.0,335.5 L484.0,335.0 L485.0,334.4 L486.0,333.8 L487.0,333.1 L488.0,332.4 L489.0,331.7 L490.0,330.9 L491.0,330.1 L492.0,329.2 L493.0,328.3 L494.0,327.3 L495.0,326.2 L496.0,325.2 L497.0,324.0 L498.0,322.8 L499.0,321.5 L500.0,320.2 L501.0,318.8 L502.0,317.3 L503.0,315.9 L504.0,314.4 L505.0,313.0 L506.0,311.5 L507.0,309.9 L508.0,308.3 L509.0,306.7 L510.0,305.1 L511.0,303.3 L512.0,301.6 L513.0,299.7 L514.0,297.9 L515.0,296.0 L516.0,294.1 L517.0,292.1 L518.0,290.2 L519.0,288.3 L520.0,286.3 L521.0,284.3 L522.0,282.3 L523.0,280.3 L524.0,278.2 L525.0,276.1 L526.0,273.9 L527.0,271.7 L528.0,269.4 L529.0,267.2 L530.0,265.0 L531.0,262.8 L532.0,260.6 L533.0,258.3 L534.0,256.1 L535.0,253.9 L536.0,251.6 L537.0,249.4 L538.0,247.1 L539.0,244.9 L540.0,242.6 L541.0,240.4 L542.0,238.2 L543.0,235.9 L544.0,233.6 L545.0,231.4 L546.0,229.1 L547.0,226.9 L548.0,224.6 L549.0,222.3 L550.0,220.0 L551.0,217.8 L552.0,215.6 L553.0,213.3 L554.0,211.1 L555.0,208.9 L556.0,206.7 L557.0,204.6 L558.0,202.4 L559.0,200.3 L560.0,198.1 L561.0,196.1 L562.0,194.1 L563.0,192.1 L564.0,190.2 L565.0,188.3 L566.0,186.4 L567.0,184.6 L568.0,182.9 L569.0,181.2 L570.0,179.6 L571.0,178.0 L572.0,176.5 L573.0,175.0 L574.0,173.6 L575.0,172.1 L576.0,170.7 L577.0,169.3 L578.0,167.9 L579.0,166.5 L580.0,165.2 L581.0,163.9 L582.0,162.6 L583.0,161.3 L584.0,160.1 L585.0,158.8 L586.0,157.6 L587.0,156.4 L588.0,155.2 L589.0,154.1 L590.0,152.9 L591.0,151.7 L592.0,150.6 L593.0,149.4 L594.0,148.2 L595.0,147.1 L596.0,146.0 L597.0,144.8 L598.0,143.7 L599.0,142.6 L600.0,141.5 L601.0,140.4 L602.0,139.3 L603.0,138.2 L604.0,137.1 L605.0,136.0 L606.0,134.9 L607.0,133.8 L608.0,132.8 L609.0,131.7 L610.0,130.7 L611.0,129.6 L612.0,128.6 L613.0,127.5 L614.0,126.5 L615.0,125.5 L616.0,124.4 L617.0,123.4 L618.0,122.4 L619.0,121.4 L620.0,120.4 L621.0,119.4 L622.0,118.5 L623.0,117.5 L624.0,116.6 L625.0,115.7 L626.0,114.8 L627.0,114.0 L628.0,113.1 L629.0,112.3 L630.0,111.5 L631.0,110.7 L632.0,110.0 L633.0,109.2 L634.0,108.5 L635.0,107.8 L636.0,107.1 L637.0,106.4 L638.0,105.7 L639.0,105.1 L640.0,104.4 L641.0,103.8 L642.0,103.1 L643.0,102.5 L644.0,101.9 L645.0,101.4 L646.0,100.8 L647.0,100.2 L648.0,99.7 L649.0,99.2 L650.0,98.7 L651.0,98.2 L652.0,97.8 L653.0,97.4 L654.0,97.1 L655.0,96.8 L656.0,96.5 L657.0,96.2 L658.0,95.9 L659.0,95.7 L660.0,95.5 L661.0,95.3 L662.0,95.1 L663.0,94.9 L664.0,94.7 L665.0,94.5 L666.0,94.3 L667.0,94.2 L668.0,94.0 L669.0,93.9 L670.0,93.7 L671.0,93.6 L672.0,93.5 L673.0,93.4 L674.0,93.3 L675.0,93.3 L676.0,93.2 L677.0,93.1 L678.0,93.0 L679.0,92.9 L680.0,92.9 L681.0,92.8 L682.0,92.7 L683.0,92.7 L684.0,92.6 L685.0,92.6 L686.0,92.5 L687.0,92.5 L688.0,92.4 L689.0,92.4 L690.0,92.3 L691.0,92.3 L692.0,92.2 L693.0,92.2 L694.0,92.2 L695.0,92.1 L696.0,92.1 L697.0,92.0 L698.0,92.0 L699.0,92.0 L700.0,91.9 L701.0,91.9 L702.0,91.9 L703.0,91.9 L704.0,91.9" stroke="#00dcff" stroke-width="1.8"/>
<path d="M94.8,339.2 L95.8,339.3 L96.8,339.4 L97.8,339.4 L98.8,339.5 L99.8,339.6 L100.8,339.6 L101.8,339.7 L102.8,339.8 L103.8,339.8 L104.8,339.9 L105.8,340.0 L106.8,340.0 L107.8,340.1 L108.8,340.1 L109.8,340.2 L110.8,340.3 L111.8,340.3 L112.8,340.4 L113.8,340.5 L114.8,340.5 L115.8,340.6 L116.8,340.7 L117.8,340.8 L118.8,340.8 L119.8,340.9 L120.8,341.0 L121.8,341.1 L122.8,341.2 L123.8,341.3 L124.8,341.3 L125.8,341.4 L126.8,341.5 L127.8,341.6 L128.8,341.7 L129.8,341.8 L130.8,341.9 L131.8,341.9 L132.8,342.0 L133.8,342.0 L134.8,342.1 L135.8,342.1 L136.8,342.1 L137.8,342.1 L138.8,342.1 L139.8,342.1 L140.8,342.1 L141.8,342.1 L142.8,342.1 L143.8,342.1 L144.8,342.1 L145.8,342.1 L146.8,342.1 L147.8,342.1 L148.8,342.1 L149.8,342.1 L150.8,342.1 L151.8,342.1 L152.8,342.0 L153.8,342.0 L154.8,341.9 L155.8,341.8 L156.8,341.6 L157.8,341.5 L158.8,341.3 L159.8,341.2 L160.8,341.0 L161.8,340.8 L162.8,340.6 L163.8,340.5 L164.8,340.3 L165.8,340.1 L166.8,339.8 L167.8,339.6 L168.8,339.3 L169.8,339.0 L170.8,338.7 L171.8,338.3 L172.8,338.0 L173.8,337.6 L174.8,337.2 L175.8,336.8 L176.8,336.4 L177.8,335.9 L178.8,335.5 L179.8,335.0 L180.8,334.4 L181.8,333.8 L182.8,333.1 L183.8,332.4 L184.8,331.7 L185.8,330.9 L186.8,330.1 L187.8,329.2 L188.8,328.3 L189.8,327.3 L190.8,326.2 L191.8,325.2 L192.8,324.0 L193.8,322.8 L194.8,321.5 L195.8,320.2 L196.8,318.8 L197.8,317.3 L198.8,315.9 L199.8,314.4 L200.8,313.0 L201.8,311.5 L202.8,309.9 L203.8,308.3 L204.8,306.7 L205.8,305.1 L206.8,303.3 L207.8,301.6 L208.8,299.7 L209.8,297.9 L210.8,296.0 L211.8,294.1 L212.8,292.1 L213.8,290.2 L214.8,288.3 L215.8,286.3 L216.8,284.3 L217.8,282.3 L218.8,280.3 L219.8,278.2 L220.8,276.1 L221.8,273.9 L222.8,271.7 L223.8,269.4 L224.8,267.2 L225.8,265.0 L226.8,262.8 L227.8,260.6 L228.8,258.3 L229.8,256.1 L230.8,253.9 L231.8,251.6 L232.8,249.4 L233.8,247.1 L234.8,244.9 L235.8,242.6 L236.8,240.4 L237.8,238.2 L238.8,235.9 L239.8,233.6 L240.8,231.4 L241.8,229.1 L242.8,226.9 L243.8,224.6 L244.8,222.3 L245.8,220.0 L246.8,217.8 L247.8,215.6 L248.8,213.3 L249.8,211.1 L250.8,208.9 L251.8,206.7 L252.8,204.6 L253.8,202.4 L254.8,200.3 L255.8,198.1 L256.8,196.1 L257.8,194.1 L258.8,192.1 L259.8,190.2 L260.8,188.3 L261.8,186.4 L262.8,184.6 L263.8,182.9 L264.8,181.2 L265.8,179.6 L266.8,178.0 L267.8,176.5 L268.8,175.0 L269.8,173.6 L270.8,172.1 L271.8,170.7 L272.8,169.3 L273.8,167.9 L274.8,166.5 L275.8,165.2 L276.8,163.9 L277.8,162.6 L278.8,161.3 L279.8,160.1 L280.8,158.8 L281.8,157.6 L282.8,156.4 L283.8,155.2 L284.8,154.1 L285.8,152.9 L286.8,151.7 L287.8,150.6 L288.8,149.4 L289.8,148.2 L290.8,147.1 L291.8,146.0 L292.8,144.8 L293.8,143.7 L294.8,142.6 L295.8,141.5 L296.8,140.4 L297.8,139.3 L298.8,138.2 L299.8,137.1 L300.8,136.0 L301.8,134.9 L302.8,133.8 L303.8,132.8 L304.8,131.7 L305.8,130.7 L306.8,129.6 L307.8,128.6 L308.8,127.5 L309.8,126.5 L310.8,125.5 L311.8,124.4 L312.8,123.4 L313.8,122.4 L314.8,121.4 L315.8,120.4 L316.8,119.4 L317.8,118.5 L318.8,117.5 L319.8,116.6 L320.8,115.7 L321.8,114.8 L322.8,114.0 L323.8,113.1 L324.8,112.3 L325.8,111.5 L326.8,110.7 L327.8,110.0 L328.8,109.2 L329.8,108.5 L330.8,107.8 L331.8,107.1 L332.8,106.4 L333.8,105.7 L334.8,105.1 L335.8,104.4 L336.8,103.8 L337.8,103.1 L338.8,102.5 L339.8,101.9 L340.8,101.4 L341.8,100.8 L342.8,100.2 L343.8,99.7 L344.8,99.2 L345.8,98.7 L346.8,98.2 L347.8,97.8 L348.8,97.4 L349.8,97.1 L350.8,96.8 L351.8,96.5 L352.8,96.2 L353.8,95.9 L354.8,95.7 L355.8,95.5 L356.8,95.3 L357.8,95.1 L358.8,94.9 L359.8,94.7 L360.8,94.5 L361.8,94.3 L362.8,94.2 L363.8,94.0 L364.8,93.9 L365.8,93.7 L366.8,93.6 L367.8,93.5 L368.8,93.4 L369.8,93.3 L370.8,93.3 L371.8,93.2 L372.8,93.1 L373.8,93.0 L374.8,92.9 L375.8,92.9 L376.8,92.8 L377.8,92.7 L378.8,92.7 L379.8,92.6 L380.8,92.6 L381.8,92.5 L382.8,92.5 L383.8,92.4 L384.8,92.4 L385.8,92.3 L386.8,92.3 L387.8,92.2 L388.8,92.2 L389.8,92.2 L390.8,92.1 L391.8,92.1 L392.8,92.0 L393.8,92.0 L394.8,92.0 L395.8,91.9 L396.8,91.9 L397.8,91.9 L398.8,91.9 L399.8,91.9" stroke="#0a64ff" stroke-width="3"/>
<path d="M94.8,339.2 L95.8,339.3 L96.8,339.4 L97.8,339.4 L98.8,339.5 L99.8,339.6 L100.8,339.6 L101.8,339.7 L102.8,339.8 L103.8,339.8 L104.8,339.9 L105.8,340.0 L106.8,340.0 L107.8,340.1 L108.8,340.1 L109.8,340.2 L110.8,340.3 L111.8,340.3 L112.8,340.4 L113.8,340.5 L114.8,340.5 L115.8,340.6 L116.8,340.7 L117.8,340.8 L118.8,340.8 L119.8,340.9 L120.8,341.0 L121.8,341.1 L122.8,341.2 L123.8,341.3 L124.8,341.3 L125.8,341.4 L126.8,341.5 L127.8,341.6 L128.8,341.7 L129.8,341.8 L130.8,341.9 L131.8,341.9 L132.8,342.0 L133.8,342.0 L134.8,342.1 L135.8,342.1 L136.8,342.1 L137.8,342.1 L138.8,342.1 L139.8,342.1 L140.8,342.1 L141.8,342.1 L142.8,342.1 L143.8,342.1 L144.8,342.1 L145.8,342.1 L146.8,342.1 L147.8,342.1 L148.8,342.1 L149.8,342.1 L150.8,342.1 L151.8,342.1 L152.8,342.0 L153.8,342.0 L154.8,341.9 L155.8,341.8 L156.8,341.6 L157.8,341.5 L158.8,341.3 L159.8,341.2 L160.8,341.0 L161.8,340.8 L162.8,340.6 L163.8,340.5 L164.8,340.3 L165.8,340.1 L166.8,339.8 L167.8,339.6 L168.8,339.3 L169.8,339.0 L170.8,338.7 L171.8,338.3 L172.8,338.0 L173.8,337.6 L174.8,337.2 L175.8,336.8 L176.8,336.4 L177.8,335.9 L178.8,335.5 L179.8,335.0 L180.8,334.4 L181.8,333.8 L182.8,333.1 L183.8,332.4 L184.8,331.7 L185.8,330.9 L186.8,330.1 L187.8,329.2 L188.8,328.3 L189.8,327.3 L190.8,326.2 L191.8,325.2 L192.8,324.0 L193.8,322.8 L194.8,321.5 L195.8,320.2 L196.8,318.8 L197.8,317.3 L198.8,315.9 L199.8,314.4 L200.8,313.0 L201.8,311.5 L202.8,309.9 L203.8,308.3 L204.8,306.7 L205.8,305.1 L206.8,303.3 L207.8,301.6 L208.8,299.7 L209.8,297.9 L210.8,296.0 L211.8,294.1 L212.8,292.1 L213.8,290.2 L214.8,288.3 L215.8,286.3 L216.8,284.3 L217.8,282.3 L218.8,280.3 L219.8,278.2 L220.8,276.1 L221.8,273.9 L222.8,271.7 L223.8,269.4 L224.8,267.2 L225.8,265.0 L226.8,262.8 L227.8,260.6 L228.8,258.3 L229.8,256.1 L230.8,253.9 L231.8,251.6 L232.8,249.4 L233.8,247.1 L234.8,244.9 L235.8,242.6 L236.8,240.4 L237.8,238.2 L238.8,235.9 L239.8,233.6 L240.8,231.4 L241.8,229.1 L242.8,226.9 L243.8,224.6 L244.8,222.3 L245.8,220.0 L246.8,217.8 L247.8,215.6 L248.8,213.3 L249.8,211.1 L250.8,208.9 L251.8,206.7 L252.8,204.6 L253.8,202.4 L254.8,200.3 L255.8,198.1 L256.8,196.1 L257.8,194.1 L258.8,192.1 L259.8,190.2 L260.8,188.3 L261.8,186.4 L262.8,184.6 L263.8,182.9 L264.8,181.2 L265.8,179.6 L266.8,178.0 L267.8,176.5 L268.8,175.0 L269.8,173.6 L270.8,172.1 L271.8,170.7 L272.8,169.3 L273.8,167.9 L274.8,166.5 L275.8,165.2 L276.8,163.9 L277.8,162.6 L278.8,161.3 L279.8,160.1 L280.8,158.8 L281.8,157.6 L282.8,156.4 L283.8,155.2 L284.8,154.1 L285.8,152.9 L286.8,151.7 L287.8,150.6 L288.8,149.4 L289.8,148.2 L290.8,147.1 L291.8,146.0 L292.8,144.8 L293.8,143.7 L294.8,142.6 L295.8,141.5 L296.8,140.4 L297.8,139.3 L298.8,138.2 L299.8,137.1 L300.8,136.0 L301.8,134.9 L302.8,133.8 L303.8,132.8 L304.8,131.7 L305.8,130.7 L306.8,129.6 L307.8,128.6 L308.8,127.5 L309.8,126.5 L310.8,125.5 L311.8,124.4 L312.8,123.4 L313.8,122.4 L314.8,121.4 L315.8,120.4 L316.8,119.4 L317.8,118.5 L318.8,117.5 L319.8,116.6 L320.8,115.7 L321.8,114.8 L322.8,114.0 L323.8,113.1 L324.8,112.3 L325.8,111.5 L326.8,110.7 L327.8,110.0 L328.8,109.2 L329.8,108.5 L330.8,107.8 L331.8,107.1 L332.8,106.4 L333.8,105.7 L334.8,105.1 L335.8,104.4 L336.8,103.8 L337.8,103.1 L338.8,102.5 L339.8,101.9 L340.8,101.4 L341.8,100.8 L342.8,100.2 L343.8,99.7 L344.8,99.2 L345.8,98.7 L346.8,98.2 L347.8,97.8 L348.8,97.4 L349.8,97.1 L350.8,96.8 L351.8,96.5 L352.8,96.2 L353.8,95.9 L354.8,95.7 L355.8,95.5 L356.8,95.3 L357.8,95.1 L358.8,94.9 L359.8,94.7 L360.8,94.5 L361.8,94.3 L362.8,94.2 L363.8,94.0 L364.8,93.9 L365.8,93.7 L366.8,93.6 L367.8,93.5 L368.8,93.4 L369.8,93.3 L370.8,93.3 L371.8,93.2 L372.8,93.1 L373.8,93.0 L374.8,92.9 L375.8,92.9 L376.8,92.8 L377.8,92.7 L378.8,92.7 L379.8,92.6 L380.8,92.6 L381.8,92.5 L382.8,92.5 L383.8,92.4 L384.8,92.4 L385.8,92.3 L386.8,92.3 L387.8,92.2 L388.8,92.2 L389.8,92.2 L390.8,92.1 L391.8,92.1 L392.8,92.0 L393.8,92.0 L394.8,92.0 L395.8,91.9 L396.8,91.9 L397.8,91.9 L398.8,91.9 L399.8,91.9" stroke="#00dcff" stroke-width="1.8"/>
<path d="M396.0,91.9 L397.0,91.8 L398.0,91.7 L399.0,91.7 L400.0,91.6 L401.0,91.5 L402.0,91.5 L403.0,91.4 L404.0,91.3 L405.0,91.3 L406.0,91.2 L407.0,91.1 L408.0,91.1 L409.0,91.0 L410.0,91.0 L411.0,90.9 L412.0,90.8 L413.0,90.8 L414.0,90.7 L415.0,90.6 L416.0,90.6 L417.0,90.5 L418.0,90.4 L419.0,90.4 L420.0,90.3 L421.0,90.2 L422.0,90.1 L423.0,90.0 L424.0,89.9 L425.0,89.8 L426.0,89.8 L427.0,89.7 L428.0,89.6 L429.0,89.5 L430.0,89.4 L431.0,89.3 L432.0,89.2 L433.0,89.2 L434.0,89.1 L435.0,89.1 L436.0,89.0 L437.0,89.0 L438.0,89.0 L439.0,89.0 L440.0,89.0 L441.0,89.0 L442.0,89.0 L443.0,89.0 L444.0,89.0 L445.0,89.0 L446.0,89.0 L447.0,89.0 L448.0,89.0 L449.0,89.0 L450.0,89.0 L451.0,89.0 L452.0,89.0 L453.0,89.0 L454.0,89.1 L455.0,89.1 L456.0,89.2 L457.0,89.3 L458.0,89.5 L459.0,89.6 L460.0,89.8 L461.0,89.9 L462.0,90.1 L463.0,90.3 L464.0,90.5 L465.0,90.6 L466.0,90.8 L467.0,91.0 L468.0,91.3 L469.0,91.5 L470.0,91.8 L471.0,92.1 L472.0,92.4 L473.0,92.8 L474.0,93.1 L475.0,93.5 L476.0,93.9 L477.0,94.3 L478.0,94.7 L479.0,95.2 L480.0,95.6 L481.0,96.1 L482.0,96.7 L483.0,97.3 L484.0,98.0 L485.0,98.7 L486.0,99.4 L487.0,100.2 L488.0,101.0 L489.0,101.9 L490.0,102.8 L491.0,103.8 L492.0,104.9 L493.0,105.9 L494.0,107.1 L495.0,108.3 L496.0,109.6 L497.0,110.9 L498.0,112.3 L499.0,113.8 L500.0,115.2 L501.0,116.7 L502.0,118.1 L503.0,119.6 L504.0,121.2 L505.0,122.8 L506.0,124.4 L507.0,126.0 L508.0,127.8 L509.0,129.5 L510.0,131.4 L511.0,133.2 L512.0,135.1 L513.0,137.0 L514.0,139.0 L515.0,140.9 L516.0,142.8 L517.0,144.8 L518.0,146.8 L519.0,148.8 L520.0,150.8 L521.0,152.9 L522.0,155.0 L523.0,157.2 L524.0,159.4 L525.0,161.7 L526.0,163.9 L527.0,166.1 L528.0,168.3 L529.0,170.5 L530.0,172.8 L531.0,175.0 L532.0,177.2 L533.0,179.5 L534.0,181.7 L535.0,184.0 L536.0,186.2 L537.0,188.5 L538.0,190.7 L539.0,193.0 L540.0,195.2 L541.0,197.5 L542.0,199.7 L543.0,202.0 L544.0,204.2 L545.0,206.5 L546.0,208.8 L547.0,211.1 L548.0,213.3 L549.0,215.6 L550.0,217.7 L551.0,219.9 L552.0,222.0 L553.0,224.1 L554.0,226.1 L555.0,228.0 L556.0,229.8 L557.0,231.6 L558.0,233.4 L559.0,235.2 L560.0,236.9 L561.0,238.6 L562.0,240.2 L563.0,241.8 L564.0,243.4 L565.0,245.0 L566.0,246.5 L567.0,248.1 L568.0,249.5 L569.0,251.0 L570.0,252.4 L571.0,253.8 L572.0,255.2 L573.0,256.6 L574.0,257.9 L575.0,259.2 L576.0,260.5 L577.0,261.8 L578.0,263.1 L579.0,264.4 L580.0,265.6 L581.0,266.8 L582.0,268.0 L583.0,269.2 L584.0,270.4 L585.0,271.6 L586.0,272.7 L587.0,273.9 L588.0,275.1 L589.0,276.3 L590.0,277.5 L591.0,278.6 L592.0,279.7 L593.0,280.8 L594.0,281.9 L595.0,282.9 L596.0,283.9 L597.0,285.0 L598.0,286.0 L599.0,287.1 L600.0,288.1 L601.0,289.1 L602.0,290.2 L603.0,291.2 L604.0,292.3 L605.0,293.3 L606.0,294.4 L607.0,295.4 L608.0,296.4 L609.0,297.5 L610.0,298.5 L611.0,299.5 L612.0,300.5 L613.0,301.5 L614.0,302.5 L615.0,303.5 L616.0,304.6 L617.0,305.6 L618.0,306.6 L619.0,307.7 L620.0,308.7 L621.0,309.7 L622.0,310.7 L623.0,311.7 L624.0,312.7 L625.0,313.7 L626.0,314.7 L627.0,315.6 L628.0,316.6 L629.0,317.6 L630.0,318.5 L631.0,319.4 L632.0,320.4 L633.0,321.3 L634.0,322.2 L635.0,323.1 L636.0,323.9 L637.0,324.8 L638.0,325.6 L639.0,326.4 L640.0,327.2 L641.0,327.9 L642.0,328.6 L643.0,329.1 L644.0,329.7 L645.0,330.2 L646.0,330.8 L647.0,331.3 L648.0,331.7 L649.0,332.2 L650.0,332.6 L651.0,333.0 L652.0,333.4 L653.0,333.7 L654.0,334.1 L655.0,334.4 L656.0,334.7 L657.0,335.0 L658.0,335.3 L659.0,335.6 L660.0,335.8 L661.0,336.0 L662.0,336.3 L663.0,336.5 L664.0,336.7 L665.0,336.9 L666.0,337.1 L667.0,337.2 L668.0,337.4 L669.0,337.5 L670.0,337.6 L671.0,337.7 L672.0,337.8 L673.0,337.9 L674.0,338.0 L675.0,338.0 L676.0,338.1 L677.0,338.2 L678.0,338.3 L679.0,338.3 L680.0,338.4 L681.0,338.5 L682.0,338.5 L683.0,338.6 L684.0,338.6 L685.0,338.7 L686.0,338.7 L687.0,338.8 L688.0,338.8 L689.0,338.9 L690.0,338.9 L691.0,339.0 L692.0,339.0 L693.0,339.0 L694.0,339.1 L695.0,339.1 L696.0,339.1 L697.0,339.2 L698.0,339.2 L699.0,339.2 L700.0,339.2 L701.0,339.2" stroke="#0a64ff" stroke-width="3"/>
<path d="M396.0,91.9 L397.0,91.8 L398.0,91.7 L399.0,91.7 L400.0,91.6 L401.0,91.5 L402.0,91.5 L403.0,91.4 L404.0,91.3 L405.0,91.3 L406.0,91.2 L407.0,91.1 L408.0,91.1 L409.0,91.0 L410.0,91.0 L411.0,90.9 L412.0,90.8 L413.0,90.8 L414.0,90.7 L415.0,90.6 L416.0,90.6 L417.0,90.5 L418.0,90.4 L419.0,90.4 L420.0,90.3 L421.0,90.2 L422.0,90.1 L423.0,90.0 L424.0,89.9 L425.0,89.8 L426.0,89.8 L427.0,89.7 L428.0,89.6 L429.0,89.5 L430.0,89.4 L431.0,89.3 L432.0,89.2 L433.0,89.2 L434.0,89.1 L435.0,89.1 L436.0,89.0 L437.0,89.0 L438.0,89.0 L439.0,89.0 L440.0,89.0 L441.0,89.0 L442.0,89.0 L443.0,89.0 L444.0,89.0 L445.0,89.0 L446.0,89.0 L447.0,89.0 L448.0,89.0 L449.0,89.0 L450.0,89.0 L451.0,89.0 L452.0,89.0 L453.0,89.0 L454.0,89.1 L455.0,89.1 L456.0,89.2 L457.0,89.3 L458.0,89.5 L459.0,89.6 L460.0,89.8 L461.0,89.9 L462.0,90.1 L463.0,90.3 L464.0,90.5 L465.0,90.6 L466.0,90.8 L467.0,91.0 L468.0,91.3 L469.0,91.5 L470.0,91.8 L471.0,92.1 L472.0,92.4 L473.0,92.8 L474.0,93.1 L475.0,93.5 L476.0,93.9 L477.0,94.3 L478.0,94.7 L479.0,95.2 L480.0,95.6 L481.0,96.1 L482.0,96.7 L483.0,97.3 L484.0,98.0 L485.0,98.7 L486.0,99.4 L487.0,100.2 L488.0,101.0 L489.0,101.9 L490.0,102.8 L491.0,103.8 L492.0,104.9 L493.0,105.9 L494.0,107.1 L495.0,108.3 L496.0,109.6 L497.0,110.9 L498.0,112.3 L499.0,113.8 L500.0,115.2 L501.0,116.7 L502.0,118.1 L503.0,119.6 L504.0,121.2 L505.0,122.8 L506.0,124.4 L507.0,126.0 L508.0,127.8 L509.0,129.5 L510.0,131.4 L511.0,133.2 L512.0,135.1 L513.0,137.0 L514.0,139.0 L515.0,140.9 L516.0,142.8 L517.0,144.8 L518.0,146.8 L519.0,148.8 L520.0,150.8 L521.0,152.9 L522.0,155.0 L523.0,157.2 L524.0,159.4 L525.0,161.7 L526.0,163.9 L527.0,166.1 L528.0,168.3 L529.0,170.5 L530.0,172.8 L531.0,175.0 L532.0,177.2 L533.0,179.5 L534.0,181.7 L535.0,184.0 L536.0,186.2 L537.0,188.5 L538.0,190.7 L539.0,193.0 L540.0,195.2 L541.0,197.5 L542.0,199.7 L543.0,202.0 L544.0,204.2 L545.0,206.5 L546.0,208.8 L547.0,211.1 L548.0,213.3 L549.0,215.6 L550.0,217.7 L551.0,219.9 L552.0,222.0 L553.0,224.1 L554.0,226.1 L555.0,228.0 L556.0,229.8 L557.0,231.6 L558.0,233.4 L559.0,235.2 L560.0,236.9 L561.0,238.6 L562.0,240.2 L563.0,241.8 L564.0,243.4 L565.0,245.0 L566.0,246.5 L567.0,248.1 L568.0,249.5 L569.0,251.0 L570.0,252.4 L571.0,253.8 L572.0,255.2 L573.0,256.6 L574.0,257.9 L575.0,259.2 L576.0,260.5 L577.0,261.8 L578.0,263.1 L579.0,264.4 L580.0,265.6 L581.0,266.8 L582.0,268.0 L583.0,269.2 L584.0,270.4 L585.0,271.6 L586.0,272.7 L587.0,273.9 L588.0,275.1 L589.0,276.3 L590.0,277.5 L591.0,278.6 L592.0,279.7 L593.0,280.8 L594.0,281.9 L595.0,282.9 L596.0,283.9 L597.0,285.0 L598.0,286.0 L599.0,287.1 L600.0,288.1 L601.0,289.1 L602.0,290.2 L603.0,291.2 L604.0,292.3 L605.0,293.3 L606.0,294.4 L607.0,295.4 L608.0,296.4 L609.0,297.5 L610.0,298.5 L611.0,299.5 L612.0,300.5 L613.0,301.5 L614.0,302.5 L615.0,303.5 L616.0,304.6 L617.0,305.6 L618.0,306.6 L619.0,307.7 L620.0,308.7 L621.0,309.7 L622.0,310.7 L623.0,311.7 L624.0,312.7 L625.0,313.7 L626.0,314.7 L627.0,315.6 L628.0,316.6 L629.0,317.6 L630.0,318.5 L631.0,319.4 L632.0,320.4 L633.0,321.3 L634.0,322.2 L635.0,323.1 L636.0,323.9 L637.0,324.8 L638.0,325.6 L639.0,326.4 L640.0,327.2 L641.0,327.9 L642.0,328.6 L643.0,329.1 L644.0,329.7 L645.0,330.2 L646.0,330.8 L647.0,331.3 L648.0,331.7 L649.0,332.2 L650.0,332.6 L651.0,333.0 L652.0,333.4 L653.0,333.7 L654.0,334.1 L655.0,334.4 L656.0,334.7 L657.0,335.0 L658.0,335.3 L659.0,335.6 L660.0,335.8 L661.0,336.0 L662.0,336.3 L663.0,336.5 L664.0,336.7 L665.0,336.9 L666.0,337.1 L667.0,337.2 L668.0,337.4 L669.0,337.5 L670.0,337.6 L671.0,337.7 L672.0,337.8 L673.0,337.9 L674.0,338.0 L675.0,338.0 L676.0,338.1 L677.0,338.2 L678.0,338.3 L679.0,338.3 L680.0,338.4 L681.0,338.5 L682.0,338.5 L683.0,338.6 L684.0,338.6 L685.0,338.7 L686.0,338.7 L687.0,338.8 L688.0,338.8 L689.0,338.9 L690.0,338.9 L691.0,339.0 L692.0,339.0 L693.0,339.0 L694.0,339.1 L695.0,339.1 L696.0,339.1 L697.0,339.2 L698.0,339.2 L699.0,339.2 L700.0,339.2 L701.0,339.2" stroke="#00dcff" stroke-width="1.8"/>
<path d="M96.8,91.7 L97.8,91.7 L98.8,91.6 L99.8,91.5 L100.8,91.5 L101.8,91.4 L102.8,91.3 L103.8,91.3 L104.8,91.2 L105.8,91.1 L106.8,91.1 L107.8,91.0 L108.8,91.0 L109.8,90.9 L110.8,90.8 L111.8,90.8 L112.8,90.7 L113.8,90.6 L114.8,90.6 L115.8,90.5 L116.8,90.4 L117.8,90.4 L118.8,90.3 L119.8,90.2 L120.8,90.1 L121.8,90.0 L122.8,89.9 L123.8,89.8 L124.8,89.8 L125.8,89.7 L126.8,89.6 L127.8,89.5 L128.8,89.4 L129.8,89.3 L130.8,89.2 L131.8,89.2 L132.8,89.1 L133.8,89.1 L134.8,89.0 L135.8,89.0 L136.8,89.0 L137.8,89.0 L138.8,89.0 L139.8,89.0 L140.8,89.0 L141.8,89.0 L142.8,89.0 L143.8,89.0 L144.8,89.0 L145.8,89.0 L146.8,89.0 L147.8,89.0 L148.8,89.0 L149.8,89.0" stroke="#0000ff" stroke-width="1.8" stroke-dasharray="3 3" stroke-dashoffset="0"/>
<path d="M96.8,91.2 L97.8,91.2 L98.8,91.1 L99.8,91.0 L100.8,91.0 L101.8,90.9 L102.8,90.8 L103.8,90.8 L104.8,90.7 L105.8,90.6 L106.8,90.6 L107.8,90.5 L108.8,90.5 L109.8,90.4 L110.8,90.3 L111.8,90.3 L112.8,90.2 L113.8,90.1 L114.8,90.1 L115.8,90.0 L116.8,89.9 L117.8,89.9 L118.8,89.8 L119.8,89.7 L120.8,89.6 L121.8,89.5 L122.8,89.4 L123.8,89.3 L124.8,89.3 L125.8,89.2 L126.8,89.1 L127.8,89.0 L128.8,88.9 L129.8,88.8 L130.8,88.7 L131.8,88.7 L132.8,88.6 L133.8,88.6 L134.8,88.5 L135.8,88.5 L136.8,88.5 L137.8,88.5 L138.8,88.5 L139.8,88.5 L140.8,88.5 L141.8,88.5 L142.8,88.5 L143.8,88.5 L144.8,88.5 L145.8,88.5 L146.8,88.5 L147.8,88.5 L148.8,88.5 L149.8,88.5 L150.8,88.5 L151.8,88.5 L152.8,88.6 L153.8,88.6 L154.8,88.7 L155.8,88.8 L156.8,89.0 L157.8,89.1 L158.8,89.3 L159.8,89.4 L160.8,89.6 L161.8,89.8 L162.8,90.0 L163.8,90.1 L164.8,90.3" stroke="#00ff40" stroke-width="1.4" stroke-dasharray="3 19" stroke-dashoffset="0"/>
<path d="M96.8,91.2 L97.8,91.2 L98.8,91.1 L99.8,91.0 L100.8,91.0 L101.8,90.9 L102.8,90.8 L103.8,90.8 L104.8,90.7 L105.8,90.6 L106.8,90.6 L107.8,90.5 L108.8,90.5 L109.8,90.4 L110.8,90.3 L111.8,90.3 L112.8,90.2 L113.8,90.1 L114.8,90.1 L115.8,90.0 L116.8,89.9 L117.8,89.9 L118.8,89.8 L119.8,89.7 L120.8,89.6 L121.8,89.5 L122.8,89.4 L123.8,89.3 L124.8,89.3 L125.8,89.2 L126.8,89.1 L127.8,89.0 L128.8,88.9 L129.8,88.8 L130.8,88.7 L131.8,88.7 L132.8,88.6 L133.8,88.6 L134.8,88.5 L135.8,88.5 L136.8,88.5 L137.8,88.5 L138.8,88.5 L139.8,88.5 L140.8,88.5 L141.8,88.5 L142.8,88.5 L143.8,88.5 L144.8,88.5 L145.8,88.5 L146.8,88.5 L147.8,88.5 L148.8,88.5 L149.8,88.5 L150.8,88.5 L151.8,88.5 L152.8,88.6 L153.8,88.6 L154.8,88.7 L155.8,88.8 L156.8,89.0 L157.8,89.1 L158.8,89.3 L159.8,89.4 L160.8,89.6 L161.8,89.8 L162.8,90.0 L163.8,90.1 L164.8,90.3" stroke="#ffe000" stroke-width="1.4" stroke-dasharray="3 19" stroke-dashoffset="-3"/>
<path d="M96.8,91.2 L97.8,91.2 L98.8,91.1 L99.8,91.0 L100.8,91.0 L101.8,90.9 L102.8,90.8 L103.8,90.8 L104.8,90.7 L105.8,90.6 L106.8,90.6 L107.8,90.5 L108.8,90.5 L109.8,90.4 L110.8,90.3 L111.8,90.3 L112.8,90.2 L113.8,90.1 L114.8,90.1 L115.8,90.0 L116.8,89.9 L117.8,89.9 L118.8,89.8 L119.8,89.7 L120.8,89.6 L121.8,89.5 L122.8,89.4 L123.8,89.3 L124.8,89.3 L125.8,89.2 L126.8,89.1 L127.8,89.0 L128.8,88.9 L129.8,88.8 L130.8,88.7 L131.8,88.7 L132.8,88.6 L133.8,88.6 L134.8,88.5 L135.8,88.5 L136.8,88.5 L137.8,88.5 L138.8,88.5 L139.8,88.5 L140.8,88.5 L141.8,88.5 L142.8,88.5 L143.8,88.5 L144.8,88.5 L145.8,88.5 L146.8,88.5 L147.8,88.5 L148.8,88.5 L149.8,88.5 L150.8,88.5 L151.8,88.5 L152.8,88.6 L153.8,88.6 L154.8,88.7 L155.8,88.8 L156.8,89.0 L157.8,89.1 L158.8,89.3 L159.8,89.4 L160.8,89.6 L161.8,89.8 L162.8,90.0 L163.8,90.1 L164.8,90.3" stroke="#ff5000" stroke-width="1.4" stroke-dasharray="3 19" stroke-dashoffset="-6"/>
<path d="M350.8,333.4 L351.8,333.7 L352.8,334.1 L353.8,334.4 L354.8,334.7 L355.8,335.0 L356.8,335.3 L357.8,335.6 L358.8,335.8 L359.8,336.0 L360.8,336.3 L361.8,336.5 L362.8,336.7 L363.8,336.9 L364.8,337.1 L365.8,337.2 L366.8,337.4 L367.8,337.5 L368.8,337.6 L369.8,337.7 L370.8,337.8 L371.8,337.9 L372.8,338.0 L373.8,338.0 L374.8,338.1 L375.8,338.2 L376.8,338.3 L377.8,338.3 L378.8,338.4 L379.8,338.5 L380.8,338.5 L381.8,338.6 L382.8,338.6 L383.8,338.7 L384.8,338.7 L385.8,338.8 L386.8,338.8 L387.8,338.9 L388.8,338.9 L389.8,339.0 L390.8,339.0 L391.8,339.0 L392.8,339.1 L393.8,339.1 L394.8,339.1 L395.8,339.2 L396.8,339.2 L397.8,339.2 L398.8,339.2 L399.8,339.2 L400.0,339.3 L401.0,339.4 L402.0,339.4 L403.0,339.5 L404.0,339.6 L405.0,339.6 L406.0,339.7 L407.0,339.8 L408.0,339.8 L409.0,339.9 L410.0,340.0 L411.0,340.0 L412.0,340.1 L413.0,340.1 L414.0,340.2 L415.0,340.3 L416.0,340.3 L417.0,340.4 L418.0,340.5 L419.0,340.5 L420.0,340.6 L421.0,340.7 L422.0,340.8 L423.0,340.8 L424.0,340.9 L425.0,341.0 L426.0,341.1 L427.0,341.2 L428.0,341.3 L429.0,341.3 L430.0,341.4 L431.0,341.5 L432.0,341.6 L433.0,341.7 L434.0,341.8 L435.0,341.9 L436.0,341.9 L437.0,342.0 L438.0,342.0 L439.0,342.1 L440.0,342.1 L441.0,342.1 L442.0,342.1 L443.0,342.1 L444.0,342.1 L445.0,342.1 L446.0,342.1 L447.0,342.1 L448.0,342.1 L449.0,342.1 L450.0,342.1 L451.0,342.1 L452.0,342.1 L453.0,342.1 L454.0,342.1 L455.0,342.1 L456.0,342.1 L457.0,342.0 L458.0,342.0 L459.0,341.9 L460.0,341.8 L461.0,341.6 L462.0,341.5 L463.0,341.3 L464.0,341.2 L465.0,341.0 L466.0,340.8 L467.0,340.6 L468.0,340.5 L469.0,340.3 L470.0,340.1" stroke="#0000ff" stroke-width="1.8" stroke-dasharray="4 5" stroke-dashoffset="0"/>
<path d="M345.8,331.8 L346.8,332.2 L347.8,332.7 L348.8,333.1 L349.8,333.5 L350.8,333.9 L351.8,334.2 L352.8,334.6 L353.8,334.9 L354.8,335.2 L355.8,335.5 L356.8,335.8 L357.8,336.1 L358.8,336.3 L359.8,336.5 L360.8,336.8 L361.8,337.0 L362.8,337.2 L363.8,337.4 L364.8,337.6 L365.8,337.7 L366.8,337.9 L367.8,338.0 L368.8,338.1 L369.8,338.2 L370.8,338.3 L371.8,338.4 L372.8,338.5 L373.8,338.5 L374.8,338.6 L375.8,338.7 L376.8,338.8 L377.8,338.8 L378.8,338.9 L379.8,339.0 L380.8,339.0 L381.8,339.1 L382.8,339.1 L383.8,339.2 L384.8,339.2 L385.8,339.3 L386.8,339.3 L387.8,339.4 L388.8,339.4 L389.8,339.5 L390.8,339.5 L391.8,339.5 L392.8,339.6 L393.8,339.6 L394.8,339.6 L395.8,339.7 L396.8,339.7 L397.8,339.7 L398.8,339.7 L399.8,339.8 L400.0,339.8 L401.0,339.9 L402.0,339.9 L403.0,340.0 L404.0,340.1 L405.0,340.1 L406.0,340.2 L407.0,340.3 L408.0,340.3 L409.0,340.4 L410.0,340.5 L411.0,340.5 L412.0,340.6 L413.0,340.6 L414.0,340.7 L415.0,340.8 L416.0,340.8 L417.0,340.9 L418.0,341.0 L419.0,341.0 L420.0,341.1 L421.0,341.2 L422.0,341.2 L423.0,341.3 L424.0,341.4 L425.0,341.5 L426.0,341.6 L427.0,341.7 L428.0,341.8 L429.0,341.8 L430.0,341.9 L431.0,342.0 L432.0,342.1 L433.0,342.2 L434.0,342.3 L435.0,342.4 L436.0,342.4 L437.0,342.5 L438.0,342.5 L439.0,342.6 L440.0,342.6 L441.0,342.6 L442.0,342.6 L443.0,342.6 L444.0,342.6 L445.0,342.6 L446.0,342.6 L447.0,342.6 L448.0,342.6 L449.0,342.6 L450.0,342.6 L451.0,342.6 L452.0,342.6 L453.0,342.6 L454.0,342.6 L455.0,342.6 L456.0,342.6 L457.0,342.5 L458.0,342.5 L459.0,342.4 L460.0,342.3 L461.0,342.1 L462.0,342.0 L463.0,341.8 L464.0,341.7 L465.0,341.5 L466.0,341.3 L467.0,341.1 L468.0,341.0 L469.0,340.8 L470.0,340.6" stroke="#00ff40" stroke-width="1.4" stroke-dasharray="3 18" stroke-dashoffset="0"/>
<path d="M345.8,331.8 L346.8,332.2 L347.8,332.7 L348.8,333.1 L349.8,333.5 L350.8,333.9 L351.8,334.2 L352.8,334.6 L353.8,334.9 L354.8,335.2 L355.8,335.5 L356.8,335.8 L357.8,336.1 L358.8,336.3 L359.8,336.5 L360.8,336.8 L361.8,337.0 L362.8,337.2 L363.8,337.4 L364.8,337.6 L365.8,337.7 L366.8,337.9 L367.8,338.0 L368.8,338.1 L369.8,338.2 L370.8,338.3 L371.8,338.4 L372.8,338.5 L373.8,338.5 L374.8,338.6 L375.8,338.7 L376.8,338.8 L377.8,338.8 L378.8,338.9 L379.8,339.0 L380.8,339.0 L381.8,339.1 L382.8,339.1 L383.8,339.2 L384.8,339.2 L385.8,339.3 L386.8,339.3 L387.8,339.4 L388.8,339.4 L389.8,339.5 L390.8,339.5 L391.8,339.5 L392.8,339.6 L393.8,339.6 L394.8,339.6 L395.8,339.7 L396.8,339.7 L397.8,339.7 L398.8,339.7 L399.8,339.8 L400.0,339.8 L401.0,339.9 L402.0,339.9 L403.0,340.0 L404.0,340.1 L405.0,340.1 L406.0,340.2 L407.0,340.3 L408.0,340.3 L409.0,340.4 L410.0,340.5 L411.0,340.5 L412.0,340.6 L413.0,340.6 L414.0,340.7 L415.0,340.8 L416.0,340.8 L417.0,340.9 L418.0,341.0 L419.0,341.0 L420.0,341.1 L421.0,341.2 L422.0,341.2 L423.0,341.3 L424.0,341.4 L425.0,341.5 L426.0,341.6 L427.0,341.7 L428.0,341.8 L429.0,341.8 L430.0,341.9 L431.0,342.0 L432.0,342.1 L433.0,342.2 L434.0,342.3 L435.0,342.4 L436.0,342.4 L437.0,342.5 L438.0,342.5 L439.0,342.6 L440.0,342.6 L441.0,342.6 L442.0,342.6 L443.0,342.6 L444.0,342.6 L445.0,342.6 L446.0,342.6 L447.0,342.6 L448.0,342.6 L449.0,342.6 L450.0,342.6 L451.0,342.6 L452.0,342.6 L453.0,342.6 L454.0,342.6 L455.0,342.6 L456.0,342.6 L457.0,342.5 L458.0,342.5 L459.0,342.4 L460.0,342.3 L461.0,342.1 L462.0,342.0 L463.0,341.8 L464.0,341.7 L465.0,341.5 L466.0,341.3 L467.0,341.1 L468.0,341.0 L469.0,340.8 L470.0,340.6" stroke="#ffe000" stroke-width="1.4" stroke-dasharray="3 18" stroke-dashoffset="-3"/>
<path d="M345.8,331.8 L346.8,332.2 L347.8,332.7 L348.8,333.1 L349.8,333.5 L350.8,333.9 L351.8,334.2 L352.8,334.6 L353.8,334.9 L354.8,335.2 L355.8,335.5 L356.8,335.8 L357.8,336.1 L358.8,336.3 L359.8,336.5 L360.8,336.8 L361.8,337.0 L362.8,337.2 L363.8,337.4 L364.8,337.6 L365.8,337.7 L366.8,337.9 L367.8,338.0 L368.8,338.1 L369.8,338.2 L370.8,338.3 L371.8,338.4 L372.8,338.5 L373.8,338.5 L374.8,338.6 L375.8,338.7 L376.8,338.8 L377.8,338.8 L378.8,338.9 L379.8,339.0 L380.8,339.0 L381.8,339.1 L382.8,339.1 L383.8,339.2 L384.8,339.2 L385.8,339.3 L386.8,339.3 L387.8,339.4 L388.8,339.4 L389.8,339.5 L390.8,339.5 L391.8,339.5 L392.8,339.6 L393.8,339.6 L394.8,339.6 L395.8,339.7 L396.8,339.7 L397.8,339.7 L398.8,339.7 L399.8,339.8 L400.0,339.8 L401.0,339.9 L402.0,339.9 L403.0,340.0 L404.0,340.1 L405.0,340.1 L406.0,340.2 L407.0,340.3 L408.0,340.3 L409.0,340.4 L410.0,340.5 L411.0,340.5 L412.0,340.6 L413.0,340.6 L414.0,340.7 L415.0,340.8 L416.0,340.8 L417.0,340.9 L418.0,341.0 L419.0,341.0 L420.0,341.1 L421.0,341.2 L422.0,341.2 L423.0,341.3 L424.0,341.4 L425.0,341.5 L426.0,341.6 L427.0,341.7 L428.0,341.8 L429.0,341.8 L430.0,341.9 L431.0,342.0 L432.0,342.1 L433.0,342.2 L434.0,342.3 L435.0,342.4 L436.0,342.4 L437.0,342.5 L438.0,342.5 L439.0,342.6 L440.0,342.6 L441.0,342.6 L442.0,342.6 L443.0,342.6 L444.0,342.6 L445.0,342.6 L446.0,342.6 L447.0,342.6 L448.0,342.6 L449.0,342.6 L450.0,342.6 L451.0,342.6 L452.0,342.6 L453.0,342.6 L454.0,342.6 L455.0,342.6 L456.0,342.6 L457.0,342.5 L458.0,342.5 L459.0,342.4 L460.0,342.3 L461.0,342.1 L462.0,342.0 L463.0,341.8 L464.0,341.7 L465.0,341.5 L466.0,341.3 L467.0,341.1 L468.0,341.0 L469.0,340.8 L470.0,340.6" stroke="#ff5000" stroke-width="1.4" stroke-dasharray="3 18" stroke-dashoffset="-6"/>
<path d="M661.0,95.3 L662.0,95.1 L663.0,94.9 L664.0,94.7 L665.0,94.5 L666.0,94.3 L667.0,94.2 L668.0,94.0 L669.0,93.9 L670.0,93.7 L671.0,93.6 L672.0,93.5 L673.0,93.4 L674.0,93.3 L675.0,93.3 L676.0,93.2 L677.0,93.1 L678.0,93.0 L679.0,92.9 L680.0,92.9 L681.0,92.8 L682.0,92.7 L683.0,92.7 L684.0,92.6 L685.0,92.6 L686.0,92.5 L687.0,92.5 L688.0,92.4 L689.0,92.4 L690.0,92.3 L691.0,92.3 L692.0,92.2 L693.0,92.2 L694.0,92.2 L695.0,92.1 L696.0,92.1 L697.0,92.0 L698.0,92.0 L699.0,92.0 L700.0,91.9 L701.0,91.9 L702.0,91.9 L703.0,91.9" stroke="#00ff40" stroke-width="1.4" stroke-dasharray="3 15" stroke-dashoffset="0"/>
<path d="M661.0,95.3 L662.0,95.1 L663.0,94.9 L664.0,94.7 L665.0,94.5 L666.0,94.3 L667.0,94.2 L668.0,94.0 L669.0,93.9 L670.0,93.7 L671.0,93.6 L672.0,93.5 L673.0,93.4 L674.0,93.3 L675.0,93.3 L676.0,93.2 L677.0,93.1 L678.0,93.0 L679.0,92.9 L680.0,92.9 L681.0,92.8 L682.0,92.7 L683.0,92.7 L684.0,92.6 L685.0,92.6 L686.0,92.5 L687.0,92.5 L688.0,92.4 L689.0,92.4 L690.0,92.3 L691.0,92.3 L692.0,92.2 L693.0,92.2 L694.0,92.2 L695.0,92.1 L696.0,92.1 L697.0,92.0 L698.0,92.0 L699.0,92.0 L700.0,91.9 L701.0,91.9 L702.0,91.9 L703.0,91.9" stroke="#ffe000" stroke-width="1.4" stroke-dasharray="3 15" stroke-dashoffset="-3"/>
<path d="M661.0,95.3 L662.0,95.1 L663.0,94.9 L664.0,94.7 L665.0,94.5 L666.0,94.3 L667.0,94.2 L668.0,94.0 L669.0,93.9 L670.0,93.7 L671.0,93.6 L672.0,93.5 L673.0,93.4 L674.0,93.3 L675.0,93.3 L676.0,93.2 L677.0,93.1 L678.0,93.0 L679.0,92.9 L680.0,92.9 L681.0,92.8 L682.0,92.7 L683.0,92.7 L684.0,92.6 L685.0,92.6 L686.0,92.5 L687.0,92.5 L688.0,92.4 L689.0,92.4 L690.0,92.3 L691.0,92.3 L692.0,92.2 L693.0,92.2 L694.0,92.2 L695.0,92.1 L696.0,92.1 L697.0,92.0 L698.0,92.0 L699.0,92.0 L700.0,91.9 L701.0,91.9 L702.0,91.9 L703.0,91.9" stroke="#ff5000" stroke-width="1.4" stroke-dasharray="3 15" stroke-dashoffset="-6"/>
<path d="M96.8,339.4 L97.8,339.4 L98.8,339.5 L99.8,339.6 L100.8,339.6 L101.8,339.7 L102.8,339.8 L103.8,339.8 L104.8,339.9 L105.8,340.0 L106.8,340.0 L107.8,340.1 L108.8,340.1 L109.8,340.2 L110.8,340.3 L111.8,340.3 L112.8,340.4 L113.8,340.5 L114.8,340.5 L115.8,340.6 L116.8,340.7 L117.8,340.8 L118.8,340.8 L119.8,340.9 L120.8,341.0 L121.8,341.1 L122.8,341.2 L123.8,341.3 L124.8,341.3 L125.8,341.4 L126.8,341.5 L127.8,341.6 L128.8,341.7 L129.8,341.8 L130.8,341.9 L131.8,341.9 L132.8,342.0 L133.8,342.0 L134.8,342.1 L135.8,342.1 L136.8,342.1 L137.8,342.1 L138.8,342.1 L139.8,342.1 L140.8,342.1 L141.8,342.1 L142.8,342.1 L143.8,342.1 L144.8,342.1 L145.8,342.1 L146.8,342.1 L147.8,342.1 L148.8,342.1 L149.8,342.1" stroke="#0000ff" stroke-width="1.8" stroke-dasharray="3 3" stroke-dashoffset="0"/>
<path d="M96.8,339.9 L97.8,339.9 L98.8,340.0 L99.8,340.1 L100.8,340.1 L101.8,340.2 L102.8,340.3 L103.8,340.3 L104.8,340.4 L105.8,340.5 L106.8,340.5 L107.8,340.6 L108.8,340.6 L109.8,340.7 L110.8,340.8 L111.8,340.8 L112.8,340.9 L113.8,341.0 L114.8,341.0 L115.8,341.1 L116.8,341.2 L117.8,341.2 L118.8,341.3 L119.8,341.4 L120.8,341.5 L121.8,341.6 L122.8,341.7 L123.8,341.8 L124.8,341.8 L125.8,341.9 L126.8,342.0 L127.8,342.1 L128.8,342.2 L129.8,342.3 L130.8,342.4 L131.8,342.4 L132.8,342.5 L133.8,342.5 L134.8,342.6 L135.8,342.6 L136.8,342.6 L137.8,342.6 L138.8,342.6 L139.8,342.6 L140.8,342.6 L141.8,342.6 L142.8,342.6 L143.8,342.6 L144.8,342.6 L145.8,342.6 L146.8,342.6 L147.8,342.6 L148.8,342.6 L149.8,342.6 L150.8,342.6 L151.8,342.6 L152.8,342.5 L153.8,342.5 L154.8,342.4 L155.8,342.3 L156.8,342.1 L157.8,342.0 L158.8,341.8 L159.8,341.7 L160.8,341.5 L161.8,341.3 L162.8,341.1 L163.8,341.0 L164.8,340.8" stroke="#00ff40" stroke-width="1.4" stroke-dasharray="3 19" stroke-dashoffset="0"/>
<path d="M96.8,339.9 L97.8,339.9 L98.8,340.0 L99.8,340.1 L100.8,340.1 L101.8,340.2 L102.8,340.3 L103.8,340.3 L104.8,340.4 L105.8,340.5 L106.8,340.5 L107.8,340.6 L108.8,340.6 L109.8,340.7 L110.8,340.8 L111.8,340.8 L112.8,340.9 L113.8,341.0 L114.8,341.0 L115.8,341.1 L116.8,341.2 L117.8,341.2 L118.8,341.3 L119.8,341.4 L120.8,341.5 L121.8,341.6 L122.8,341.7 L123.8,341.8 L124.8,341.8 L125.8,341.9 L126.8,342.0 L127.8,342.1 L128.8,342.2 L129.8,342.3 L130.8,342.4 L131.8,342.4 L132.8,342.5 L133.8,342.5 L134.8,342.6 L135.8,342.6 L136.8,342.6 L137.8,342.6 L138.8,342.6 L139.8,342.6 L140.8,342.6 L141.8,342.6 L142.8,342.6 L143.8,342.6 L144.8,342.6 L145.8,342.6 L146.8,342.6 L147.8,342.6 L148.8,342.6 L149.8,342.6 L150.8,342.6 L151.8,342.6 L152.8,342.5 L153.8,342.5 L154.8,342.4 L155.8,342.3 L156.8,342.1 L157.8,342.0 L158.8,341.8 L159.8,341.7 L160.8,341.5 L161.8,341.3 L162.8,341.1 L163.8,341.0 L164.8,340.8" stroke="#ffe000" stroke-width="1.4" stroke-dasharray="3 19" stroke-dashoffset="-3"/>
<path d="M96.8,339.9 L97.8,339.9 L98.8,340.0 L99.8,340.1 L100.8,340.1 L101.8,340.2 L102.8,340.3 L103.8,340.3 L104.8,340.4 L105.8,340.5 L106.8,340.5 L107.8,340.6 L108.8,340.6 L109.8,340.7 L110.8,340.8 L111.8,340.8 L112.8,340.9 L113.8,341.0 L114.8,341.0 L115.8,341.1 L116.8,341.2 L117.8,341.2 L118.8,341.3 L119.8,341.4 L120.8,341.5 L121.8,341.6 L122.8,341.7 L123.8,341.8 L124.8,341.8 L125.8,341.9 L126.8,342.0 L127.8,342.1 L128.8,342.2 L129.8,342.3 L130.8,342.4 L131.8,342.4 L132.8,342.5 L133.8,342.5 L134.8,342.6 L135.8,342.6 L136.8,342.6 L137.8,342.6 L138.8,342.6 L139.8,342.6 L140.8,342.6 L141.8,342.6 L142.8,342.6 L143.8,342.6 L144.8,342.6 L145.8,342.6 L146.8,342.6 L147.8,342.6 L148.8,342.6 L149.8,342.6 L150.8,342.6 L151.8,342.6 L152.8,342.5 L153.8,342.5 L154.8,342.4 L155.8,342.3 L156.8,342.1 L157.8,342.0 L158.8,341.8 L159.8,341.7 L160.8,341.5 L161.8,341.3 L162.8,341.1 L163.8,341.0 L164.8,340.8" stroke="#ff5000" stroke-width="1.4" stroke-dasharray="3 19" stroke-dashoffset="-6"/>
<path d="M350.8,96.8 L351.8,96.5 L352.8,96.2 L353.8,95.9 L354.8,95.7 L355.8,95.5 L356.8,95.3 L357.8,95.1 L358.8,94.9 L359.8,94.7 L360.8,94.5 L361.8,94.3 L362.8,94.2 L363.8,94.0 L364.8,93.9 L365.8,93.7 L366.8,93.6 L367.8,93.5 L368.8,93.4 L369.8,93.3 L370.8,93.3 L371.8,93.2 L372.8,93.1 L373.8,93.0 L374.8,92.9 L375.8,92.9 L376.8,92.8 L377.8,92.7 L378.8,92.7 L379.8,92.6 L380.8,92.6 L381.8,92.5 L382.8,92.5 L383.8,92.4 L384.8,92.4 L385.8,92.3 L386.8,92.3 L387.8,92.2 L388.8,92.2 L389.8,92.2 L390.8,92.1 L391.8,92.1 L392.8,92.0 L393.8,92.0 L394.8,92.0 L395.8,91.9 L396.8,91.9 L397.8,91.9 L398.8,91.9 L399.8,91.9 L397.0,91.8 L398.0,91.7 L399.0,91.7 L400.0,91.6 L401.0,91.5 L402.0,91.5 L403.0,91.4 L404.0,91.3 L405.0,91.3 L406.0,91.2 L407.0,91.1 L408.0,91.1 L409.0,91.0 L410.0,91.0 L411.0,90.9 L412.0,90.8 L413.0,90.8 L414.0,90.7 L415.0,90.6 L416.0,90.6 L417.0,90.5 L418.0,90.4 L419.0,90.4 L420.0,90.3 L421.0,90.2 L422.0,90.1 L423.0,90.0 L424.0,89.9 L425.0,89.8 L426.0,89.8 L427.0,89.7 L428.0,89.6 L429.0,89.5 L430.0,89.4 L431.0,89.3 L432.0,89.2 L433.0,89.2 L434.0,89.1 L435.0,89.1 L436.0,89.0 L437.0,89.0 L438.0,89.0 L439.0,89.0 L440.0,89.0 L441.0,89.0 L442.0,89.0 L443.0,89.0 L444.0,89.0 L445.0,89.0 L446.0,89.0 L447.0,89.0 L448.0,89.0 L449.0,89.0 L450.0,89.0 L451.0,89.0 L452.0,89.0 L453.0,89.0 L454.0,89.1 L455.0,89.1 L456.0,89.2 L457.0,89.3 L458.0,89.5 L459.0,89.6 L460.0,89.8 L461.0,89.9 L462.0,90.1 L463.0,90.3 L464.0,90.5 L465.0,90.6 L466.0,90.8 L467.0,91.0 L468.0,91.3 L469.0,91.5 L470.0,91.8" stroke="#0000ff" stroke-width="1.8" stroke-dasharray="4 5" stroke-dashoffset="0"/>
<path d="M345.8,98.2 L346.8,97.7 L347.8,97.3 L348.8,96.9 L349.8,96.6 L350.8,96.3 L351.8,96.0 L352.8,95.7 L353.8,95.4 L354.8,95.2 L355.8,95.0 L356.8,94.8 L357.8,94.6 L358.8,94.4 L359.8,94.2 L360.8,94.0 L361.8,93.8 L362.8,93.7 L363.8,93.5 L364.8,93.4 L365.8,93.2 L366.8,93.1 L367.8,93.0 L368.8,92.9 L369.8,92.8 L370.8,92.8 L371.8,92.7 L372.8,92.6 L373.8,92.5 L374.8,92.4 L375.8,92.4 L376.8,92.3 L377.8,92.2 L378.8,92.2 L379.8,92.1 L380.8,92.1 L381.8,92.0 L382.8,92.0 L383.8,91.9 L384.8,91.9 L385.8,91.8 L386.8,91.8 L387.8,91.7 L388.8,91.7 L389.8,91.7 L390.8,91.6 L391.8,91.6 L392.8,91.5 L393.8,91.5 L394.8,91.5 L395.8,91.4 L396.8,91.4 L397.8,91.4 L398.8,91.4 L399.8,91.4 L397.0,91.3 L398.0,91.2 L399.0,91.2 L400.0,91.1 L401.0,91.0 L402.0,91.0 L403.0,90.9 L404.0,90.8 L405.0,90.8 L406.0,90.7 L407.0,90.6 L408.0,90.6 L409.0,90.5 L410.0,90.5 L411.0,90.4 L412.0,90.3 L413.0,90.3 L414.0,90.2 L415.0,90.1 L416.0,90.1 L417.0,90.0 L418.0,89.9 L419.0,89.9 L420.0,89.8 L421.0,89.7 L422.0,89.6 L423.0,89.5 L424.0,89.4 L425.0,89.3 L426.0,89.3 L427.0,89.2 L428.0,89.1 L429.0,89.0 L430.0,88.9 L431.0,88.8 L432.0,88.7 L433.0,88.7 L434.0,88.6 L435.0,88.6 L436.0,88.5 L437.0,88.5 L438.0,88.5 L439.0,88.5 L440.0,88.5 L441.0,88.5 L442.0,88.5 L443.0,88.5 L444.0,88.5 L445.0,88.5 L446.0,88.5 L447.0,88.5 L448.0,88.5 L449.0,88.5 L450.0,88.5 L451.0,88.5 L452.0,88.5 L453.0,88.5 L454.0,88.6 L455.0,88.6 L456.0,88.7 L457.0,88.8 L458.0,89.0 L459.0,89.1 L460.0,89.3 L461.0,89.4 L462.0,89.6 L463.0,89.8 L464.0,90.0 L465.0,90.1 L466.0,90.3 L467.0,90.5 L468.0,90.8 L469.0,91.0 L470.0,91.3" stroke="#00ff40" stroke-width="1.4" stroke-dasharray="3 18" stroke-dashoffset="0"/>
<path d="M345.8,98.2 L346.8,97.7 L347.8,97.3 L348.8,96.9 L349.8,96.6 L350.8,96.3 L351.8,96.0 L352.8,95.7 L353.8,95.4 L354.8,95.2 L355.8,95.0 L356.8,94.8 L357.8,94.6 L358.8,94.4 L359.8,94.2 L360.8,94.0 L361.8,93.8 L362.8,93.7 L363.8,93.5 L364.8,93.4 L365.8,93.2 L366.8,93.1 L367.8,93.0 L368.8,92.9 L369.8,92.8 L370.8,92.8 L371.8,92.7 L372.8,92.6 L373.8,92.5 L374.8,92.4 L375.8,92.4 L376.8,92.3 L377.8,92.2 L378.8,92.2 L379.8,92.1 L380.8,92.1 L381.8,92.0 L382.8,92.0 L383.8,91.9 L384.8,91.9 L385.8,91.8 L386.8,91.8 L387.8,91.7 L388.8,91.7 L389.8,91.7 L390.8,91.6 L391.8,91.6 L392.8,91.5 L393.8,91.5 L394.8,91.5 L395.8,91.4 L396.8,91.4 L397.8,91.4 L398.8,91.4 L399.8,91.4 L397.0,91.3 L398.0,91.2 L399.0,91.2 L400.0,91.1 L401.0,91.0 L402.0,91.0 L403.0,90.9 L404.0,90.8 L405.0,90.8 L406.0,90.7 L407.0,90.6 L408.0,90.6 L409.0,90.5 L410.0,90.5 L411.0,90.4 L412.0,90.3 L413.0,90.3 L414.0,90.2 L415.0,90.1 L416.0,90.1 L417.0,90.0 L418.0,89.9 L419.0,89.9 L420.0,89.8 L421.0,89.7 L422.0,89.6 L423.0,89.5 L424.0,89.4 L425.0,89.3 L426.0,89.3 L427.0,89.2 L428.0,89.1 L429.0,89.0 L430.0,88.9 L431.0,88.8 L432.0,88.7 L433.0,88.7 L434.0,88.6 L435.0,88.6 L436.0,88.5 L437.0,88.5 L438.0,88.5 L439.0,88.5 L440.0,88.5 L441.0,88.5 L442.0,88.5 L443.0,88.5 L444.0,88.5 L445.0,88.5 L446.0,88.5 L447.0,88.5 L448.0,88.5 L449.0,88.5 L450.0,88.5 L451.0,88.5 L452.0,88.5 L453.0,88.5 L454.0,88.6 L455.0,88.6 L456.0,88.7 L457.0,88.8 L458.0,89.0 L459.0,89.1 L460.0,89.3 L461.0,89.4 L462.0,89.6 L463.0,89.8 L464.0,90.0 L465.0,90.1 L466.0,90.3 L467.0,90.5 L468.0,90.8 L469.0,91.0 L470.0,91.3" stroke="#ffe000" stroke-width="1.4" stroke-dasharray="3 18" stroke-dashoffset="-3"/>
<path d="M345.8,98.2 L346.8,97.7 L347.8,97.3 L348.8,96.9 L349.8,96.6 L350.8,96.3 L351.8,96.0 L352.8,95.7 L353.8,95.4 L354.8,95.2 L355.8,95.0 L356.8,94.8 L357.8,94.6 L358.8,94.4 L359.8,94.2 L360.8,94.0 L361.8,93.8 L362.8,93.7 L363.8,93.5 L364.8,93.4 L365.8,93.2 L366.8,93.1 L367.8,93.0 L368.8,92.9 L369.8,92.8 L370.8,92.8 L371.8,92.7 L372.8,92.6 L373.8,92.5 L374.8,92.4 L375.8,92.4 L376.8,92.3 L377.8,92.2 L378.8,92.2 L379.8,92.1 L380.8,92.1 L381.8,92.0 L382.8,92.0 L383.8,91.9 L384.8,91.9 L385.8,91.8 L386.8,91.8 L387.8,91.7 L388.8,91.7 L389.8,91.7 L390.8,91.6 L391.8,91.6 L392.8,91.5 L393.8,91.5 L394.8,91.5 L395.8,91.4 L396.8,91.4 L397.8,91.4 L398.8,91.4 L399.8,91.4 L397.0,91.3 L398.0,91.2 L399.0,91.2 L400.0,91.1 L401.0,91.0 L402.0,91.0 L403.0,90.9 L404.0,90.8 L405.0,90.8 L406.0,90.7 L407.0,90.6 L408.0,90.6 L409.0,90.5 L410.0,90.5 L411.0,90.4 L412.0,90.3 L413.0,90.3 L414.0,90.2 L415.0,90.1 L416.0,90.1 L417.0,90.0 L418.0,89.9 L419.0,89.9 L420.0,89.8 L421.0,89.7 L422.0,89.6 L423.0,89.5 L424.0,89.4 L425.0,89.3 L426.0,89.3 L427.0,89.2 L428.0,89.1 L429.0,89.0 L430.0,88.9 L431.0,88.8 L432.0,88.7 L433.0,88.7 L434.0,88.6 L435.0,88.6 L436.0,88.5 L437.0,88.5 L438.0,88.5 L439.0,88.5 L440.0,88.5 L441.0,88.5 L442.0,88.5 L443.0,88.5 L444.0,88.5 L445.0,88.5 L446.0,88.5 L447.0,88.5 L448.0,88.5 L449.0,88.5 L450.0,88.5 L451.0,88.5 L452.0,88.5 L453.0,88.5 L454.0,88.6 L455.0,88.6 L456.0,88.7 L457.0,88.8 L458.0,89.0 L459.0,89.1 L460.0,89.3 L461.0,89.4 L462.0,89.6 L463.0,89.8 L464.0,90.0 L465.0,90.1 L466.0,90.3 L467.0,90.5 L468.0,90.8 L469.0,91.0 L470.0,91.3" stroke="#ff5000" stroke-width="1.4" stroke-dasharray="3 18" stroke-dashoffset="-6"/>
<path d="M661.0,336.0 L662.0,336.3 L663.0,336.5 L664.0,336.7 L665.0,336.9 L666.0,337.1 L667.0,337.2 L668.0,337.4 L669.0,337.5 L670.0,337.6 L671.0,337.7 L672.0,337.8 L673.0,337.9 L674.0,338.0 L675.0,338.0 L676.0,338.1 L677.0,338.2 L678.0,338.3 L679.0,338.3 L680.0,338.4 L681.0,338.5 L682.0,338.5 L683.0,338.6 L684.0,338.6 L685.0,338.7 L686.0,338.7 L687.0,338.8 L688.0,338.8 L689.0,338.9 L690.0,338.9 L691.0,339.0 L692.0,339.0 L693.0,339.0 L694.0,339.1 L695.0,339.1 L696.0,339.1 L697.0,339.2 L698.0,339.2 L699.0,339.2 L700.0,339.2 L701.0,339.2" stroke="#00ff40" stroke-width="1.4" stroke-dasharray="3 15" stroke-dashoffset="0"/>
<path d="M661.0,336.0 L662.0,336.3 L663.0,336.5 L664.0,336.7 L665.0,336.9 L666.0,337.1 L667.0,337.2 L668.0,337.4 L669.0,337.5 L670.0,337.6 L671.0,337.7 L672.0,337.8 L673.0,337.9 L674.0,338.0 L675.0,338.0 L676.0,338.1 L677.0,338.2 L678.0,338.3 L679.0,338.3 L680.0,338.4 L681.0,338.5 L682.0,338.5 L683.0,338.6 L684.0,338.6 L685.0,338.7 L686.0,338.7 L687.0,338.8 L688.0,338.8 L689.0,338.9 L690.0,338.9 L691.0,339.0 L692.0,339.0 L693.0,339.0 L694.0,339.1 L695.0,339.1 L696.0,339.1 L697.0,339.2 L698.0,339.2 L699.0,339.2 L700.0,339.2 L701.0,339.2" stroke="#ffe000" stroke-width="1.4" stroke-dasharray="3 15" stroke-dashoffset="-3"/>
<path d="M661.0,336.0 L662.0,336.3 L663.0,336.5 L664.0,336.7 L665.0,336.9 L666.0,337.1 L667.0,337.2 L668.0,337.4 L669.0,337.5 L670.0,337.6 L671.0,337.7 L672.0,337.8 L673.0,337.9 L674.0,338.0 L675.0,338.0 L676.0,338.1 L677.0,338.2 L678.0,338.3 L679.0,338.3 L680.0,338.4 L681.0,338.5 L682.0,338.5 L683.0,338.6 L684.0,338.6 L685.0,338.7 L686.0,338.7 L687.0,338.8 L688.0,338.8 L689.0,338.9 L690.0,338.9 L691.0,339.0 L692.0,339.0 L693.0,339.0 L694.0,339.1 L695.0,339.1 L696.0,339.1 L697.0,339.2 L698.0,339.2 L699.0,339.2 L700.0,339.2 L701.0,339.2" stroke="#ff5000" stroke-width="1.4" stroke-dasharray="3 15" stroke-dashoffset="-6"/>
<circle cx="247.8" cy="215.55" r="1.3" fill="#30ff30" stroke="none"/>
<circle cx="551.97" cy="215.55" r="1.3" fill="#30ff30" stroke="none"/>
<path d="M257.6,211.1 L258.6,213.4 L259.6,215.6 L260.5,217.7 L261.3,219.8 L262.2,222.0 L263.1,224.0 L264.0,226.0 L264.8,227.9 L265.7,229.7 L266.6,231.5 L267.5,233.3 L268.4,235.0 L269.3,236.7 L270.2,238.4 L271.1,240.0 L272.0,241.6 L272.9,243.2 L273.9,244.8 L274.8,246.3 L275.7,247.8 L276.6,249.3 L277.5,250.7 L278.4,252.1 L279.3,253.5 L280.2,254.9 L281.1,256.2 L282.1,257.6 L283.0,258.9 L284.0,260.2 L285.0,261.5 L285.9,262.7 L286.9,264.0 L287.8,265.2 L288.8,266.4 L289.8,267.6 L290.7,268.8 L291.7,269.9 L292.7,271.1 L293.6,272.3 L294.6,273.5 L295.6,274.6 L296.5,275.8 L297.5,277.0 L298.4,278.1 L299.4,279.2 L300.4,280.3 L301.3,281.3 L302.3,282.4 L303.3,283.4 L304.2,284.4 L305.2,285.4 L306.2,286.5 L307.1,287.5 L308.1,288.6 L309.1,289.6 L310.0,290.6 L311.0,291.7 L311.9,292.7 L312.9,293.7 L313.9,294.8 L314.8,295.8 L315.8,296.8 L316.7,297.8 L317.7,298.8 L318.6,299.8 L319.6,300.8 L320.5,301.8 L321.5,302.8 L322.4,303.8 L323.4,304.9 L324.3,305.9 L325.3,306.9 L326.2,308.0 L327.2,309.0 L328.1,310.0 L329.1,311.0 L330.0,312.0 L330.9,312.9 L331.9,313.9 L332.8,314.8 L333.8,315.8 L334.7,316.7 L335.7,317.7 L336.6,318.6 L337.6,319.5 L338.5,320.4 L339.5,321.3 L340.4,322.2 L341.4,323.0 L342.3,323.9 L343.3,324.7 L344.2,325.5 L345.2,326.3 L346.1,327.0 L347.1,327.6 L348.0,328.2 L349.0,328.8 L349.9,329.3 L350.9,329.8 L351.8,330.3 L352.8,330.8 L353.7,331.2 L354.7,331.6 L355.6,332.0 L356.6,332.4 L357.5,332.8 L358.5,333.1 L359.5,333.5 L360.4,333.8 L361.4,334.1 L362.3,334.3 L363.3,334.6 L364.2,334.8 L365.2,335.1 L366.1,335.3 L367.1,335.5 L368.0,335.7 L369.0,335.9 L369.9,336.1 L370.9,336.2 L371.8,336.4 L372.8,336.5 L373.8,336.6 L374.7,336.7 L375.7,336.8 L376.7,336.9 L377.6,337.0 L378.6,337.1 L379.6,337.1 L380.6,337.2 L381.5,337.3 L382.5,337.4 L383.5,337.4 L384.4,337.5 L385.4,337.5 L386.4,337.6 L387.3,337.7 L388.3,337.7 L389.3,337.8 L390.2,337.8 L391.2,337.8 L392.2,337.9 L393.1,337.9 L394.1,338.0 L395.1,338.0 L396.1,338.0 L397.0,338.1 L398.0,338.1 L399.0,338.1 L399.9,338.2 L400.9,338.2 L401.9,338.2 L402.8,338.2 L403.8,338.3" stroke="#ff0000" stroke-width="1"/>
<path d="M256.7,206.8 L257.7,204.7 L258.7,202.6 L259.7,200.5 L260.7,198.4 L261.7,196.4 L262.7,194.4 L263.7,192.4 L264.7,190.5 L265.7,188.7 L266.7,186.9 L267.7,185.1 L268.7,183.4 L269.7,181.7 L270.7,180.1 L271.7,178.6 L272.7,177.1 L273.7,175.6 L274.7,174.2 L275.7,172.8 L276.7,171.4 L277.7,170.0 L278.7,168.6 L279.7,167.3 L280.7,166.0 L281.7,164.7 L282.7,163.4 L283.7,162.1 L284.7,160.9 L285.7,159.7 L286.7,158.5 L287.7,157.3 L288.7,156.2 L289.7,155.0 L290.7,153.8 L291.7,152.7 L292.7,151.5 L293.7,150.4 L294.7,149.3 L295.7,148.1 L296.7,147.0 L297.7,145.9 L298.7,144.8 L299.7,143.7 L300.7,142.6 L301.7,141.5 L302.7,140.4 L303.7,139.3 L304.7,138.3 L305.7,137.2 L306.7,136.1 L307.7,135.1 L308.7,134.0 L309.7,133.0 L310.7,131.9 L311.7,130.9 L312.7,129.9 L313.7,128.9 L314.7,127.8 L315.7,126.8 L316.7,125.8 L317.7,124.8 L318.7,123.8 L319.7,122.8 L320.7,121.8 L321.7,120.9 L322.7,119.9 L323.7,119.0 L324.7,118.1 L325.7,117.2 L326.7,116.4 L327.7,115.5 L328.7,114.7 L329.7,113.9 L330.7,113.1 L331.7,112.3 L332.7,111.5 L333.7,110.8 L334.7,110.1 L335.7,109.4 L336.7,108.7 L337.7,108.0 L338.7,107.4 L339.7,106.7 L340.7,106.1 L341.7,105.4 L342.7,104.8 L343.7,104.2 L344.7,103.6 L345.7,103.1 L346.7,102.5 L347.7,102.0 L348.7,101.4 L349.7,100.9 L350.7,100.4 L351.7,100.0 L352.7,99.6 L353.7,99.2 L354.7,98.9 L355.7,98.6 L356.7,98.3 L357.7,98.0 L358.7,97.7 L359.7,97.5 L360.7,97.3 L361.7,97.1 L362.7,96.9 L363.7,96.7 L364.7,96.5 L365.7,96.3 L366.7,96.1 L367.7,96.0 L368.7,95.8 L369.7,95.7 L370.7,95.6 L371.7,95.5 L372.7,95.4 L373.7,95.3 L374.7,95.2 L375.7,95.1 L376.7,95.0 L377.7,94.9 L378.7,94.9 L379.7,94.8 L380.7,94.7 L381.7,94.6 L382.7,94.6 L383.7,94.5 L384.7,94.5 L385.7,94.4 L386.7,94.4 L387.7,94.3 L388.7,94.3 L389.7,94.2 L390.7,94.2 L391.7,94.1 L392.7,94.1 L393.7,94.0 L394.7,94.0 L395.7,94.0 L396.7,93.9 L397.7,93.9 L398.7,93.9 L399.7,93.8 L400.7,93.8 L401.7,93.8 L402.7,93.7 L403.7,93.7 L404.7,93.7" stroke="#ff0000" stroke-width="1"/>
<path d="M396.8,337.0 L397.8,337.1 L398.8,337.1 L399.8,337.2 L400.8,337.3 L401.8,337.3 L402.8,337.4 L403.8,337.5 L404.8,337.5 L405.8,337.6 L406.8,337.7 L407.8,337.7 L408.8,337.8 L409.8,337.8 L410.8,337.9 L411.8,338.0 L412.8,338.0 L413.8,338.1 L414.8,338.2 L415.8,338.2 L416.8,338.3 L417.8,338.4 L418.8,338.4 L419.8,338.5 L420.8,338.6 L421.8,338.6 L422.8,338.7 L423.8,338.8 L424.8,338.9 L425.8,339.0 L426.8,339.1 L427.8,339.2 L428.8,339.3 L429.8,339.3 L430.8,339.4 L431.8,339.5 L432.8,339.6 L433.8,339.7 L434.8,339.7 L435.8,339.8 L436.8,339.8 L437.8,339.8 L438.8,339.9 L439.8,339.9 L440.8,339.9 L441.8,339.9 L442.8,339.9 L443.8,339.9 L444.8,339.9 L445.8,339.9 L446.8,339.9 L447.8,339.9 L448.8,339.9 L449.8,339.9 L450.8,339.9 L451.8,339.9 L452.8,339.9 L453.8,339.8 L454.8,339.8 L455.8,339.7 L456.8,339.6 L457.8,339.5 L458.8,339.4 L459.8,339.2 L460.8,339.1 L461.8,338.9 L462.8,338.7 L463.8,338.6 L464.8,338.4 L465.8,338.2 L466.8,338.0 L467.8,337.8 L468.8,337.6 L469.8,337.3 L470.8,337.1 L471.8,336.8 L472.8,336.4 L473.8,336.1 L474.8,335.8 L475.8,335.4 L476.8,335.0 L477.8,334.6 L478.8,334.2 L479.8,333.8 L480.8,333.3 L481.8,332.8 L482.8,332.3 L483.8,331.6 L484.8,331.0 L485.8,330.3 L486.8,329.6 L487.8,328.9 L488.8,328.0 L489.8,327.2 L490.8,326.2 L491.8,325.3 L492.8,324.3 L493.8,323.2 L494.8,322.1 L495.8,320.9 L496.8,319.6 L497.8,318.3 L498.8,316.9 L499.8,315.5 L500.8,314.1 L501.8,312.7 L502.8,311.2 L503.8,309.7 L504.8,308.2 L505.8,306.7 L506.8,305.1 L507.8,303.4 L508.8,301.8 L509.8,300.0 L510.8,298.2 L511.8,296.4 L512.8,294.5 L513.8,292.6 L514.8,290.7 L515.8,288.9 L516.8,286.9 L517.8,285.0 L518.8,283.1 L519.8,281.1" stroke="#ff0000" stroke-width="1"/>
</g>
<g shape-rendering="crispEdges" fill="none" stroke="#000" stroke-width="1">
<path d="M95.5,63V369 M703.5,63V369 M95,63.5H704 M95,368.5H704"/>
<path d="M85,63.5H96M90,70.5H96M90,78.5H96M90,86.5H96M90,93.5H96M85,101.5H96M90,108.5H96M90,116.5H96M90,124.5H96M90,131.5H96M85,139.5H96M90,147.5H96M90,154.5H96M90,162.5H96M90,169.5H96M85,177.5H96M90,185.5H96M90,192.5H96M90,200.5H96M90,208.5H96M85,215.5H96M90,223.5H96M90,230.5H96M90,238.5H96M90,246.5H96M85,253.5H96M90,261.5H96M90,269.5H96M90,276.5H96M90,284.5H96M85,291.5H96M90,299.5H96M90,307.5H96M90,314.5H96M90,322.5H96M85,330.5H96M90,337.5H96M90,345.5H96M90,352.5H96M90,360.5H96M85,368.5H96M95.5,368V378M114.5,368V373M134.5,368V373M153.5,368V373M173.5,368V373M192.5,368V378M212.5,368V373M231.5,368V373M251.5,368V373M270.5,368V373M289.5,368V378M309.5,368V373M328.5,368V373M348.5,368V373M367.5,368V373M387.5,368V378M406.5,368V373M426.5,368V373M445.5,368V373M465.5,368V373M484.5,368V378M504.5,368V373M523.5,368V373M543.5,368V373M562.5,368V373M581.5,368V378M601.5,368V373M620.5,368V373M640.5,368V373M659.5,368V373M679.5,368V378M698.5,368V373"/>
</g>
<path d="M89,57 L95,54 L95,60.2 Z" fill="#000"/>
<text class="t12" x="80" y="67.5" text-anchor="end">1000.00</text>
<text class="t12" x="80" y="105.6" text-anchor="end">750.00</text>
<text class="t12" x="80" y="143.8" text-anchor="end">500.00</text>
<text class="t12" x="80" y="181.9" text-anchor="end">250.00</text>
<text class="t12" x="80" y="220.0" text-anchor="end">0.00</text>
<text class="t12" x="80" y="258.1" text-anchor="end">-250.00</text>
<text class="t12" x="80" y="296.2" text-anchor="end">-500.00</text>
<text class="t12" x="80" y="334.4" text-anchor="end">-750.00</text>
<text class="t12" x="80" y="372.5" text-anchor="end">-1000.00</text>
<text class="t12" x="95.0" y="388" text-anchor="middle">0.00</text>
<text class="t12" x="191.4" y="388" text-anchor="middle">0.20</text>
<text class="t12" x="288.8" y="388" text-anchor="middle">0.40</text>
<text class="t12" x="386.1" y="388" text-anchor="middle">0.60</text>
<text class="t12" x="483.4" y="388" text-anchor="middle">0.80</text>
<text class="t12" x="580.8" y="388" text-anchor="middle">1.00</text>
<text class="t12" x="678.1" y="388" text-anchor="middle">1.20</text>
<text class="t12" x="374.5" y="402.6" textLength="49.6" lengthAdjust="spacing">Time [ns]</text>
<text font-size="11.7px" stroke-width="0.1" transform="translate(28.9,310.6) rotate(-90)" textLength="185.8" lengthAdjust="spacing">V(dqs0p_out) - V(dqs0n_out) [mV]</text>
<g shape-rendering="crispEdges">
<path d="M718,62H724V326H412V322H718Z" fill="#000" fill-opacity="0.25"/>
<rect x="405.5" y="57.5" width="312" height="264" fill="#ffffff" stroke="#000" stroke-width="1"/>
<path d="M511.5,58V321M406,87.5H717M406,105.5H717M406,123.5H717M406,141.5H717M406,159.5H717M406,177.5H717M406,195.5H717M406,213.5H717M406,231.5H717M406,249.5H717M406,267.5H717M406,285.5H717M406,303.5H717" stroke="#b4b4b4" stroke-width="1" fill="none"/>
<rect x="516" y="65" width="24" height="2" fill="#ff0000"/>
</g>
<text class="tb" x="433.6" y="76.0" textLength="51.1" lengthAdjust="spacing">Curve Info</text>
<text class="tb" x="548.5" y="69.7" textLength="149.2" lengthAdjust="spacing">V(dqs0p_out) - V(dqs0n_out)</text>
<text class="tb" x="516" y="82" textLength="86.4" lengthAdjust="spacing">NexximTransient</text>
<text class="tb" x="424.8" y="100.1" textLength="68.7" lengthAdjust="spacing">EyeLevelZero</text>
<text class="tb" x="615.5" y="100.1" text-anchor="middle">-810.2672</text>
<text class="tb" x="425.2" y="118.1" textLength="67.9" lengthAdjust="spacing">EyeLevelOne</text>
<text class="tb" x="615.5" y="118.1" text-anchor="middle">807.0060</text>
<text class="tb" x="424.3" y="136.1" textLength="69.8" lengthAdjust="spacing">EyeAmplitude</text>
<text class="tb" x="615.5" y="136.1" text-anchor="middle">1617.2732</text>
<text class="tb" x="432.9" y="154.1" textLength="52.5" lengthAdjust="spacing">EyeHeight</text>
<text class="tb" x="615.5" y="154.1" text-anchor="middle">1568.9754</text>
<text class="tb" x="411.3" y="172.1" textLength="95.7" lengthAdjust="spacing">EyeSignalToNoise</text>
<text class="tb" x="615.5" y="172.1" text-anchor="middle">100.4564</text>
<text class="tb" x="410.5" y="190.1" textLength="97.4" lengthAdjust="spacing">EyeOpeningFactor</text>
<text class="tb" x="615.5" y="190.1" text-anchor="middle">0.9900</text>
<text class="tb" x="434.8" y="208.1" textLength="48.8" lengthAdjust="spacing">EyeWidth</text>
<text class="tb" x="615.5" y="208.1" text-anchor="middle">0.6003</text>
<text class="tb" x="427.3" y="226.1" textLength="63.7" lengthAdjust="spacing">EyeJitterP2P</text>
<text class="tb" x="615.5" y="226.1" text-anchor="middle">0.0300</text>
<text class="tb" x="425.4" y="244.1" textLength="67.5" lengthAdjust="spacing">EyeJitterRMS</text>
<text class="tb" x="615.5" y="244.1" text-anchor="middle">0.0041</text>
<text class="tb" x="425.9" y="262.1" textLength="66.5" lengthAdjust="spacing">EyeRiseTime</text>
<text class="tb" x="615.5" y="262.1" text-anchor="middle">0.1713</text>
<text class="tb" x="427.8" y="280.1" textLength="62.8" lengthAdjust="spacing">EyeFallTime</text>
<text class="tb" x="615.5" y="280.1" text-anchor="middle">0.1717</text>
<text class="tb" x="425.3" y="298.1" textLength="67.7" lengthAdjust="spacing">MinEyeWidth</text>
<text class="tb" x="615.5" y="298.1" text-anchor="middle">0.5975</text>
<text class="tb" x="423.3" y="316.1" textLength="71.7" lengthAdjust="spacing">MinEyeHeight</text>
<text class="tb" x="615.5" y="316.1" text-anchor="middle">1603.0306</text>
<g shape-rendering="crispEdges" fill="none">
<path d="M114.5,416V519M134.5,416V519M153.5,416V519M173.5,416V519M212.5,416V519M231.5,416V519M251.5,416V519M270.5,416V519M309.5,416V519M328.5,416V519M348.5,416V519M367.5,416V519M406.5,416V519M426.5,416V519M445.5,416V519M465.5,416V519M504.5,416V519M523.5,416V519M543.5,416V519M562.5,416V519M601.5,416V519M620.5,416V519M640.5,416V519M659.5,416V519M698.5,416V519M96,420.5H703M96,425.5H703M96,430.5H703M96,435.5H703M96,446.5H703M96,451.5H703M96,456.5H703M96,461.5H703M96,472.5H703M96,477.5H703M96,482.5H703M96,487.5H703M96,498.5H703M96,503.5H703M96,508.5H703M96,513.5H703" stroke="#e6e6e6" stroke-width="1"/>
<path d="M192.5,416V519M289.5,416V519M387.5,416V519M484.5,416V519M581.5,416V519M679.5,416V519M96,441.5H703M96,467.5H703M96,493.5H703" stroke="#c6c6c6" stroke-width="1"/>
<rect x="96" y="424" width="607" height="87" fill="#ff0000"/>
<path d="M106.5,424V427M118.5,424V434M135.5,424V428M146.5,424V435M157.5,424V431M174.5,424V427M179.5,424V427M184.5,424V429M202.5,424V430M213.5,424V433M224.5,424V427M232.5,424V427M237.5,424V428M252.5,424V431M271.5,424V427M276.5,424V427M291.5,424V430M302.5,424V428M308.5,424V429M318.5,424V427M329.5,424V427M335.5,424V429M347.5,424V431M364.5,424V431M375.5,424V435M386.5,424V427M391.5,424V430M403.5,424V434M414.5,424V431M426.5,424V427M442.5,424V427M454.5,424V427M459.5,424V430M471.5,424V427M498.5,424V433M502.5,424V427M508.5,424V427M526.5,424V430M536.5,424V432M548.5,424V430M564.5,424V430M576.5,424V432M586.5,424V427M592.5,424V427M604.5,424V427M615.5,424V427M620.5,424V427M632.5,424V427M642.5,424V427M654.5,424V427M667.5,424V427M688.5,424V430M698.5,424V427M104.5,509V511M114.5,508V511M120.5,509V511M126.5,509V511M132.5,506V511M142.5,506V511M148.5,509V511M154.5,509V511M160.5,503V511M164.5,509V511M171.5,503V511M182.5,507V511M188.5,509V511M199.5,507V511M210.5,504V511M216.5,509V511M220.5,509V511M226.5,509V511M238.5,505V511M244.5,506V511M248.5,506V511M254.5,509V511M260.5,509V511M266.5,508V511M277.5,505V511M282.5,508V511M288.5,506V511M294.5,505V511M300.5,509V511M304.5,507V511M316.5,509V511M322.5,501V511M326.5,509V511M332.5,502V511M338.5,509V511M344.5,505V511M350.5,508V511M354.5,509V511M360.5,508V511M372.5,506V511M378.5,508V511M382.5,507V511M389.5,509V511M400.5,507V511M406.5,509V511M410.5,506V511M416.5,502V511M422.5,508V511M428.5,507V511M440.5,509V511M445.5,504V511M450.5,509V511M456.5,502V511M467.5,507V511M472.5,506V511M478.5,508V511M484.5,507V511M490.5,509V511M496.5,504V511M500.5,508V511M506.5,506V511M512.5,507V511M517.5,510V511M523.5,507V511M534.5,507V511M540.5,506V511M545.5,507V511M550.5,506V511M562.5,509V511M568.5,508V511M573.5,509V511M579.5,504V511M584.5,509V511M590.5,509V511M607.5,500V511M618.5,502V511M630.5,509V511M635.5,504V511M640.5,509V511M646.5,503V511M652.5,509V511M660.5,510V511M668.5,509V511M674.5,507V511M684.5,504V511M696.5,509V511M702.5,507V511" stroke="#ffffff" stroke-width="1"/>
<path d="M292,423.5h2M140,511.5h2M132,511.5h1M358,423.5h1M353,511.5h1M231,511.5h3M445,423.5h2M125,511.5h1M184,423.5h1M589,423.5h2M482,423.5h2M134,423.5h1M507,423.5h1M450,423.5h1M576,511.5h1M443,511.5h3M537,423.5h2M168,423.5h2M188,423.5h1M500,511.5h2M625,423.5h2M455,511.5h2M604,511.5h2M498,423.5h2M487,511.5h3M268,423.5h2M110,423.5h1M167,423.5h2M175,423.5h1M623,423.5h1M428,511.5h3M618,423.5h1M313,511.5h3M188,423.5h1M237,423.5h2M255,423.5h1M320,511.5h3M514,511.5h2M505,423.5h2M568,511.5h3M333,423.5h1M480,423.5h1M223,423.5h1M128,423.5h1M158,423.5h1M625,511.5h1M249,423.5h1M171,511.5h3M378,423.5h1M158,423.5h1M597,423.5h1M671,511.5h1M425,423.5h2M688,511.5h3M254,423.5h1M563,511.5h3M296,423.5h2M691,511.5h3M591,511.5h1M409,423.5h1M113,423.5h1M515,511.5h2M662,511.5h3M317,423.5h1M215,423.5h2M640,511.5h2M491,511.5h1M495,511.5h3M550,423.5h1M573,423.5h2" stroke="#ff0000" stroke-width="1"/>
</g>
<g stroke="#000" stroke-width="0.9" fill="none">
<path d="M96,414.7l4.2,4.6M100.2,414.7l-4.2,4.6M96,422.6l4.2,4.6M100.2,422.6l-4.2,4.6M96,430.6l4.2,4.6M100.2,430.6l-4.2,4.6M96,438.5l4.2,4.6M100.2,438.5l-4.2,4.6M96,446.4l4.2,4.6M100.2,446.4l-4.2,4.6M96,454.3l4.2,4.6M100.2,454.3l-4.2,4.6M96,462.3l4.2,4.6M100.2,462.3l-4.2,4.6M96,470.2l4.2,4.6M100.2,470.2l-4.2,4.6M96,478.1l4.2,4.6M100.2,478.1l-4.2,4.6M96,486.1l4.2,4.6M100.2,486.1l-4.2,4.6M96,494.0l4.2,4.6M100.2,494.0l-4.2,4.6M96,501.9l4.2,4.6M100.2,501.9l-4.2,4.6M96,509.9l4.2,4.6M100.2,509.9l-4.2,4.6"/>
</g>
<g shape-rendering="crispEdges" fill="none" stroke="#000" stroke-width="1">
<path d="M95.5,415V520 M703.5,415V520 M95,415.5H704 M95,519.5H704"/>
<path d="M85,415.5H96M90,420.5H96M90,425.5H96M90,430.5H96M90,435.5H96M85,441.5H96M90,446.5H96M90,451.5H96M90,456.5H96M90,461.5H96M85,467.5H96M90,472.5H96M90,477.5H96M90,482.5H96M90,487.5H96M85,493.5H96M90,498.5H96M90,503.5H96M90,508.5H96M90,513.5H96M85,519.5H96M95.5,519V529M114.5,519V524M134.5,519V524M153.5,519V524M173.5,519V524M192.5,519V529M212.5,519V524M231.5,519V524M251.5,519V524M270.5,519V524M289.5,519V529M309.5,519V524M328.5,519V524M348.5,519V524M367.5,519V524M387.5,519V529M406.5,519V524M426.5,519V524M445.5,519V524M465.5,519V524M484.5,519V529M504.5,519V524M523.5,519V524M543.5,519V524M562.5,519V524M581.5,519V529M601.5,519V524M620.5,519V524M640.5,519V524M659.5,519V524M679.5,519V529M698.5,519V524"/>
</g>
<text class="t12" x="80" y="419.5" text-anchor="end">1000.00</text>
<text class="t12" x="80" y="445.5" text-anchor="end">500.00</text>
<text class="t12" x="80" y="471.5" text-anchor="end">0.00</text>
<text class="t12" x="80" y="497.5" text-anchor="end">-500.00</text>
<text class="t12" x="80" y="523.5" text-anchor="end">-1000.00</text>
<text class="t12" x="95.0" y="539" text-anchor="middle">0.00</text>
<text class="t12" x="191.2" y="539" text-anchor="middle">100.00</text>
<text class="t12" x="288.6" y="539" text-anchor="middle">200.00</text>
<text class="t12" x="385.9" y="539" text-anchor="middle">300.00</text>
<text class="t12" x="483.2" y="539" text-anchor="middle">400.00</text>
<text class="t12" x="580.6" y="539" text-anchor="middle">500.00</text>
<text class="t12" x="677.9" y="539" text-anchor="middle">600.00</text>
<text class="t12" x="374.5" y="553.8" textLength="49.6" lengthAdjust="spacing">Time [ns]</text>
<text font-size="11.7px" stroke-width="0.1" transform="translate(28.9,563.3) rotate(-90)" textLength="185.8" lengthAdjust="spacing">V(dqs0p_out) - V(dqs0n_out) [mV]</text>
</g>
</svg></body></html>
